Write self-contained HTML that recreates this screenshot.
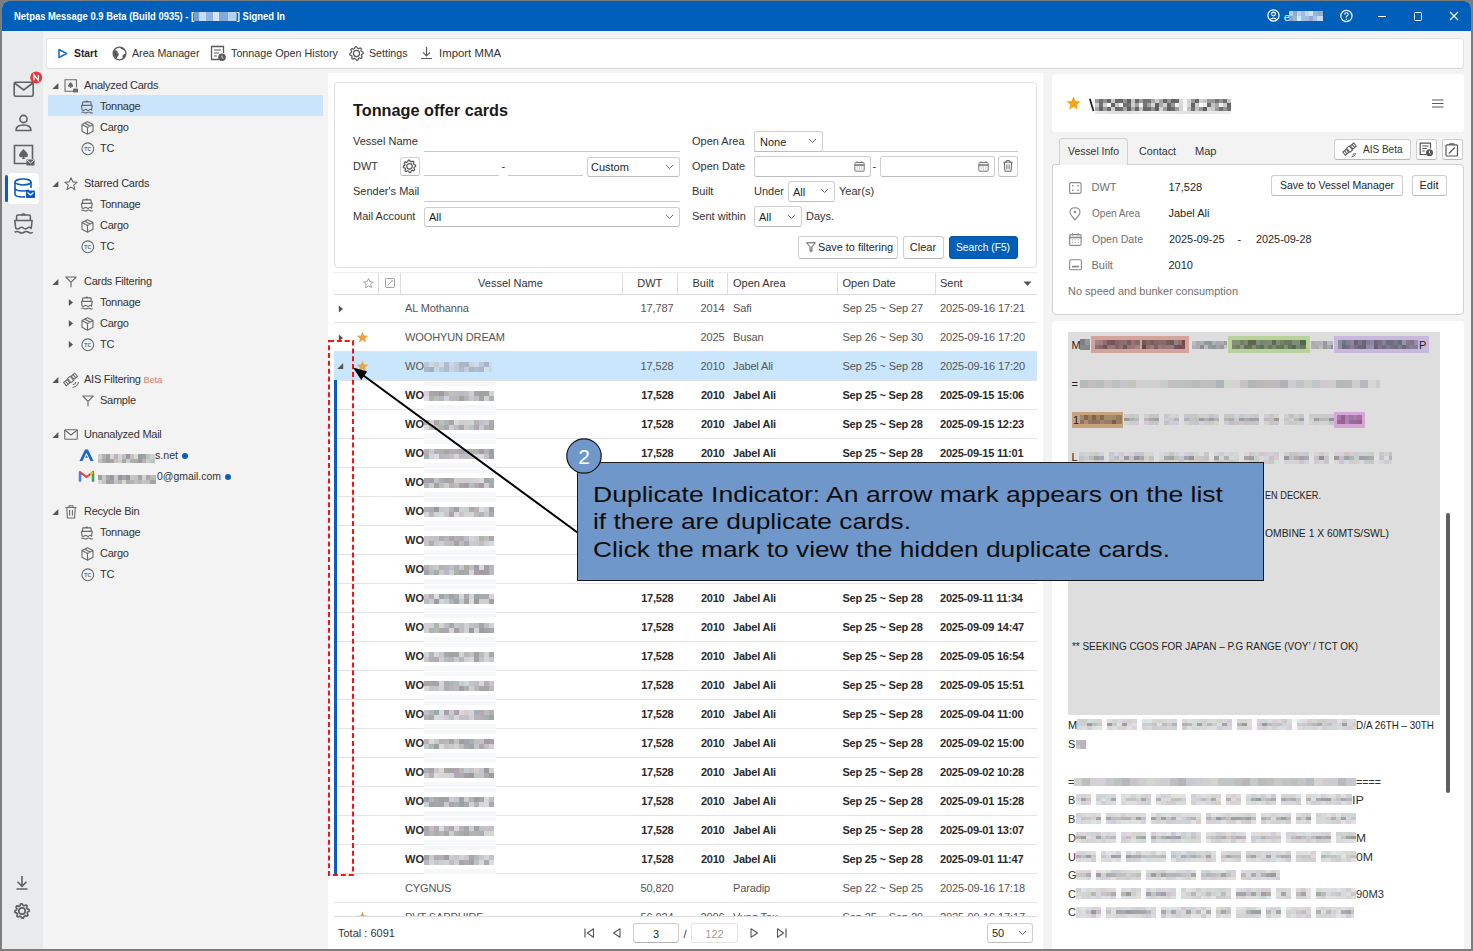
<!DOCTYPE html>
<html><head><meta charset="utf-8">
<style>
*{box-sizing:border-box;margin:0;padding:0}
html,body{width:1473px;height:951px;overflow:hidden;background:#7d7d7d;font-family:"Liberation Sans",sans-serif;font-size:11px;color:#1f1f1f;position:relative}
.a{position:absolute}
.t{position:absolute;white-space:nowrap;line-height:1}
svg{position:absolute;overflow:visible}
</style></head><body>
<div class="a" style="left:2px;top:1px;width:1469px;height:948px;background:#f3f3f3;border-radius:7px 7px 0 0"></div>
<div class="a" style="left:2px;top:1px;width:1469px;height:30px;background:#0060b9;border-radius:7px 7px 0 0"></div>
<div class="t" id="w1" style="left:14px;top:11.09px;font-size:11px;color:#fff;font-weight:bold;transform:scaleX(0.8562);transform-origin:left;">Netpas Message 0.9 Beta (Build 0935) - [<span style="display:inline-block;width:50px;height:9px;background:linear-gradient(90deg,#6e9fd6 0 6px,#c9dbf0 6px 14px,#8fb5e0 14px 22px,#d6e4f4 22px 30px,#7faadb 30px 40px,#b8d0ec 40px 50px);vertical-align:-1px"></span>] Signed In</div>
<svg style="left:1266px;top:9px;" width="15" height="15" viewBox="0 0 15 15"><circle cx="7.5" cy="6.5" r="5.6" fill="none" stroke="#fff" stroke-width="1.2"/><circle cx="7.5" cy="5" r="1.9" fill="none" stroke="#fff" stroke-width="1.1"/><path d="M4.2 10.6 Q7.5 7.6 10.8 10.6" fill="none" stroke="#fff" stroke-width="1.1"/></svg>
<div class="t" style="left:1284px;top:11.69px;font-size:11px;color:#fff;font-weight:normal;">e</div>
<div class="a" style="left:1289px;top:11.0px;width:34px;height:5.0px;background:linear-gradient(90deg,rgba(177,206,245,1.0) 0px 4px,rgba(141,173,201,1.0) 4px 8px,rgba(189,205,248,1.0) 8px 12px,rgba(161,187,227,1.0) 12px 16px,rgba(188,215,248,1.0) 16px 20px,rgba(210,229,255,1.0) 20px 24px,rgba(152,184,219,1.0) 24px 28px,rgba(150,175,207,1.0) 28px 32px)"></div>
<div class="a" style="left:1289px;top:16.0px;width:34px;height:5.0px;background:linear-gradient(90deg,rgba(143,165,208,1.0) 0px 4px,rgba(155,182,213,1.0) 4px 8px,rgba(204,237,255,1.0) 8px 12px,rgba(158,191,226,1.0) 12px 16px,rgba(163,184,226,1.0) 16px 20px,rgba(151,167,211,1.0) 20px 24px,rgba(167,195,228,1.0) 24px 28px,rgba(200,218,255,1.0) 28px 32px)"></div>
<svg style="left:1340px;top:10px;" width="13" height="13" viewBox="0 0 13 13"><circle cx="6.4" cy="6" r="5.6" fill="none" stroke="#fff" stroke-width="1.2"/><path d="M4.6 4.6 Q4.6 2.7 6.4 2.7 Q8.2 2.7 8.2 4.4 Q8.2 5.5 6.4 6.3 L6.4 7.5" fill="none" stroke="#fff" stroke-width="1.1"/><circle cx="6.4" cy="9.2" r="0.7" fill="#fff"/></svg>
<div class="a" style="left:1378px;top:15.5px;width:8px;height:1.2px;background:#fff"></div>
<div class="a" style="left:1413.5px;top:12px;width:8.5px;height:8.5px;border:1.2px solid #fff;border-radius:1.5px"></div>
<svg style="left:1449px;top:11px;" width="10" height="10" viewBox="0 0 10 10"><path d="M1 1 L9 9 M9 1 L1 9" stroke="#fff" stroke-width="1.2"/></svg>
<div class="a" style="left:2px;top:31px;width:41px;height:918px;background:#e9eaec"></div>
<svg style="left:13px;top:81px;" width="22" height="17" viewBox="0 0 22 17"><rect x="1.2" y="1.2" width="19" height="14" rx="1.5" fill="none" stroke="#616161" stroke-width="1.6"/><path d="M1.5 2 L10.7 9 L19.9 2" fill="none" stroke="#616161" stroke-width="1.6"/></svg>
<svg style="left:30px;top:71px;" width="13" height="13" viewBox="0 0 13 13"><circle cx="6.2" cy="6.6" r="6" fill="#e8363a"/><path d="M4 9.3 V3.9 L8.4 9.3 V3.9" fill="none" stroke="#fff" stroke-width="1.3"/></svg>
<svg style="left:14px;top:114px;" width="19" height="18" viewBox="0 0 19 18"><circle cx="9.5" cy="5" r="3.6" fill="none" stroke="#616161" stroke-width="1.6"/><path d="M2 16.5 Q2 11 9.5 11 Q17 11 17 16.5 Z" fill="none" stroke="#616161" stroke-width="1.6" stroke-linejoin="round"/></svg>
<svg style="left:13px;top:144px;" width="22" height="23" viewBox="0 0 22 23"><path d="M15 19.5 H1.5 V1.5 H19.5 V15" fill="none" stroke="#616161" stroke-width="1.6"/><path d="M10.5 5 Q6 9.5 6 11.3 Q6 13.6 8.5 13.3 Q9.3 13.1 9.8 12.4 L9 15 H12 L11.2 12.4 Q11.7 13.1 12.5 13.3 Q15 13.6 15 11.3 Q15 9.5 10.5 5 Z" fill="#616161"/><rect x="13.5" y="15.5" width="8" height="6" fill="#616161"/><path d="M13.8 16 L17.5 19 L21.2 16" fill="none" stroke="#e9eaec" stroke-width="0.9"/></svg>
<div class="a" style="left:8px;top:173px;width:31px;height:31px;background:#fff;border-radius:4px"></div>
<div class="a" style="left:5px;top:175px;width:2.5px;height:27px;background:#0a5cc2;border-radius:1.5px"></div>
<svg style="left:13px;top:178px;" width="22" height="22" viewBox="0 0 22 22"><ellipse cx="10" cy="4" rx="8" ry="3" fill="none" stroke="#0a5cc2" stroke-width="1.6"/><path d="M2 4 V16 Q2 19 10 19 Q11 19 12 18.9 M18 4 V10 M2 10 Q2 13 10 13 Q14 13 16 12.3" fill="none" stroke="#0a5cc2" stroke-width="1.6"/><rect x="13" y="12.5" width="9" height="7.5" rx="0.8" fill="#0a5cc2"/><path d="M14.5 14.5 L17.5 17 L20.5 14.5" fill="none" stroke="#fff" stroke-width="1.1"/></svg>
<svg style="left:15px;top:875px;" width="14" height="15" viewBox="0 0 14 15"><path d="M7 1 V11 M2.5 6.8 L7 11.3 L11.5 6.8 M1.5 14 H12.5" fill="none" stroke="#616161" stroke-width="1.6"/></svg>
<svg style="left:14px;top:903px;" width="16" height="16" viewBox="0 0 16 16"><polygon points="15.06,6.60 15.20,8.00 13.51,9.10 13.19,10.15 13.99,12.00 13.09,13.09 11.12,12.67 10.15,13.19 9.40,15.06 8.00,15.20 6.90,13.51 5.85,13.19 4.00,13.99 2.91,13.09 3.33,11.12 2.81,10.15 0.94,9.40 0.80,8.00 2.49,6.90 2.81,5.85 2.01,4.00 2.91,2.91 4.88,3.33 5.85,2.81 6.60,0.94 8.00,0.80 9.10,2.49 10.15,2.81 12.00,2.01 13.09,2.91 12.67,4.88 13.19,5.85" fill="none" stroke="#616161" stroke-width="1.7" stroke-linejoin="round"/><circle cx="8" cy="8" r="3.21" fill="none" stroke="#616161" stroke-width="1.7"/></svg>
<div class="a" style="left:46px;top:38px;width:1418px;height:31px;background:#fff;border:1px solid #e3e3e3;border-bottom-color:#d6d6d6;border-radius:4px"></div>
<svg style="left:57px;top:48px;" width="11" height="11" viewBox="0 0 11 11"><path d="M2 1.5 L9.5 5.5 L2 9.5 Z" fill="none" stroke="#1a6fd0" stroke-width="1.6" stroke-linejoin="round"/></svg>
<div class="t" id="w2" style="left:73.5px;top:47.69px;font-size:11px;color:#1f1f1f;font-weight:bold;transform:scaleX(0.9377);transform-origin:left;">Start</div>
<svg style="left:112px;top:46px;" width="15" height="15" viewBox="0 0 15 15"><circle cx="7.5" cy="7.5" r="6.4" fill="none" stroke="#5a5a5a" stroke-width="1.3"/><path d="M2.2 4.5 Q4.2 3.8 5.6 5.2 Q5 6.8 6.6 7.6 Q7.4 9.6 5.6 10.6 Q4.8 12.2 4.4 13 Q1.6 10.6 1.2 7.5 Q1.3 5.8 2.2 4.5 Z M8.2 1.2 Q8.6 3 10.4 3.6 Q12.4 3.6 12.8 3.2 Q11 1.4 8.2 1.2 Z M13.8 7.8 Q11.6 7.6 10.6 9.6 Q10.2 11.4 10.8 13.2 Q13.6 11.4 13.8 7.8 Z" fill="#5a5a5a"/></svg>
<div class="t" id="w3" style="left:132px;top:47.69px;font-size:11px;color:#333;font-weight:normal;transform:scaleX(0.9682);transform-origin:left;">Area Manager</div>
<svg style="left:210px;top:45px;" width="16" height="17" viewBox="0 0 16 17"><path d="M9 14.5 H1.5 V1.5 H13.5 V8" fill="none" stroke="#5a5a5a" stroke-width="1.3"/><path d="M4 5 H11 M4 8 H9 M4 11 H7" stroke="#5a5a5a" stroke-width="1.2"/><circle cx="12" cy="12.3" r="3.8" fill="#5a5a5a"/><path d="M12 10.5 V12.5 L13.3 13.5" fill="none" stroke="#fff" stroke-width="0.9"/></svg>
<div class="t" id="w4" style="left:231px;top:47.69px;font-size:11px;color:#333;font-weight:normal;transform:scaleX(0.9776);transform-origin:left;">Tonnage Open History</div>
<svg style="left:349px;top:46px;" width="15" height="15" viewBox="0 0 15 15"><polygon points="14.17,6.17 14.30,7.50 12.70,8.53 12.40,9.53 13.15,11.28 12.31,12.31 10.45,11.91 9.53,12.40 8.83,14.17 7.50,14.30 6.47,12.70 5.47,12.40 3.72,13.15 2.69,12.31 3.09,10.45 2.60,9.53 0.83,8.83 0.70,7.50 2.30,6.47 2.60,5.47 1.85,3.72 2.69,2.69 4.55,3.09 5.47,2.60 6.17,0.83 7.50,0.70 8.53,2.30 9.53,2.60 11.28,1.85 12.31,2.69 11.91,4.55 12.40,5.47" fill="none" stroke="#5a5a5a" stroke-width="1.2" stroke-linejoin="round"/><circle cx="7.5" cy="7.5" r="3.04" fill="none" stroke="#5a5a5a" stroke-width="1.2"/></svg>
<div class="t" id="w5" style="left:368.5px;top:47.69px;font-size:11px;color:#333;font-weight:normal;transform:scaleX(0.9686);transform-origin:left;">Settings</div>
<svg style="left:420px;top:46px;" width="13" height="14" viewBox="0 0 13 14"><path d="M6.5 1 V9.5 M3 6.3 L6.5 9.8 L10 6.3 M1 12.5 H12" fill="none" stroke="#5a5a5a" stroke-width="1.2"/></svg>
<div class="t" id="w6" style="left:438.5px;top:47.69px;font-size:11px;color:#333;font-weight:normal;transform:scaleX(1.0350);transform-origin:left;">Import MMA</div>
<div class="a" style="left:48px;top:95.3px;width:274.5px;height:21.2px;background:#cae5fb"></div>
<svg style="left:14px;top:212px;" width="22" height="22" viewBox="0 0 22 22"><g transform="scale(1.62)"><path d="M4.6 1.9 Q5.8 0.6 7 1.9" fill="none" stroke="#616161" stroke-width="1.1"/><path d="M1.6 5.1 V2.8 Q1.6 1.9 2.5 1.9 H9.2 Q10.1 1.9 10.1 2.8 V5.1" fill="none" stroke="#616161" stroke-width="0.95"/><path d="M0.5 5.3 H11.2 L10.6 10.1 Q9.5 8.9 8.2 9.9 Q7 10.9 5.85 9.9 Q4.7 8.9 3.5 9.9 Q2.3 10.9 1.1 10.1 Z" fill="none" stroke="#616161" stroke-width="0.95" stroke-linejoin="round"/><path d="M0.4 12.5 Q1.8 11.5 3.3 12.5 Q4.8 13.5 6.2 12.5 Q7.6 11.5 9 12.5 Q10.4 13.5 11.6 12.5" fill="none" stroke="#616161" stroke-width="0.95"/></g></svg>
<svg style="left:51.5px;top:82.5px;" width="7" height="7" viewBox="0 0 7 7"><path d="M6.4 0 L6.4 6 L0.4 6 Z" fill="#555"/></svg>
<svg style="left:64px;top:78.5px;" width="14" height="14" viewBox="0 0 14 14"><path d="M9 12.2 H1 V0.8 H12.5 V8.5" fill="none" stroke="#6a6a6a" stroke-width="1.1"/><path d="M6.6 3 Q4 5.6 4 6.7 Q4 8.1 5.4 7.9 Q5.9 7.8 6.2 7.4 L5.7 9 H7.5 L7 7.4 Q7.3 7.8 7.8 7.9 Q9.2 8.1 9.2 6.7 Q9.2 5.6 6.6 3 Z" fill="#6a6a6a"/><rect x="9" y="9.6" width="5" height="3.8" fill="#6a6a6a"/></svg>
<div class="t" style="left:84px;top:79.69px;font-size:11px;color:#333;font-weight:normal;letter-spacing:-0.25px">Analyzed Cards</div>
<svg style="left:81px;top:99.5px;" width="13" height="14" viewBox="0 0 13 14"><path d="M4.6 1.9 Q5.8 0.6 7 1.9" fill="none" stroke="#6a6a6a" stroke-width="1.4"/><path d="M1.6 5.1 V2.8 Q1.6 1.9 2.5 1.9 H9.2 Q10.1 1.9 10.1 2.8 V5.1" fill="none" stroke="#6a6a6a" stroke-width="1.15"/><path d="M0.5 5.3 H11.2 L10.6 10.1 Q9.5 8.9 8.2 9.9 Q7 10.9 5.85 9.9 Q4.7 8.9 3.5 9.9 Q2.3 10.9 1.1 10.1 Z" fill="none" stroke="#6a6a6a" stroke-width="1.15" stroke-linejoin="round"/><path d="M0.4 12.5 Q1.8 11.5 3.3 12.5 Q4.8 13.5 6.2 12.5 Q7.6 11.5 9 12.5 Q10.4 13.5 11.6 12.5" fill="none" stroke="#6a6a6a" stroke-width="1.15"/></svg>
<div class="t" style="left:100px;top:100.69px;font-size:11px;color:#333;font-weight:normal;letter-spacing:-0.25px">Tonnage</div>
<svg style="left:81px;top:120.5px;" width="13" height="14" viewBox="0 0 13 14"><path d="M6.5 0.8 L12 3.6 V10.2 L6.5 13.2 L1 10.2 V3.6 Z M1 3.6 L6.5 6.6 L12 3.6 M6.5 6.6 V13.2 M3.8 2.2 L9.3 5.1" fill="none" stroke="#6a6a6a" stroke-width="1.1" stroke-linejoin="round"/></svg>
<div class="t" style="left:100px;top:121.69px;font-size:11px;color:#333;font-weight:normal;letter-spacing:-0.25px">Cargo</div>
<svg style="left:81px;top:141.5px;" width="14" height="14" viewBox="0 0 14 14"><circle cx="6.8" cy="6.8" r="5.9" fill="none" stroke="#6a6a6a" stroke-width="1.1"/><text x="6.8" y="8.6" font-size="5.2" font-family="Liberation Sans" text-anchor="middle" fill="#6a6a6a" font-weight="bold">TC</text></svg>
<div class="t" style="left:100px;top:142.69px;font-size:11px;color:#333;font-weight:normal;letter-spacing:-0.25px">TC</div>
<svg style="left:51.5px;top:180.5px;" width="7" height="7" viewBox="0 0 7 7"><path d="M6.4 0 L6.4 6 L0.4 6 Z" fill="#555"/></svg>
<svg style="left:64px;top:176.5px;" width="14" height="14" viewBox="0 0 14 14"><path d="M7 0.8 L8.8 4.9 L13.2 5.2 L9.8 8.1 L10.9 12.5 L7 10.1 L3.1 12.5 L4.2 8.1 L0.8 5.2 L5.2 4.9 Z" fill="none" stroke="#6a6a6a" stroke-width="1.1" stroke-linejoin="round"/></svg>
<div class="t" style="left:84px;top:177.69px;font-size:11px;color:#333;font-weight:normal;letter-spacing:-0.25px">Starred Cards</div>
<svg style="left:81px;top:197.5px;" width="13" height="14" viewBox="0 0 13 14"><path d="M4.6 1.9 Q5.8 0.6 7 1.9" fill="none" stroke="#6a6a6a" stroke-width="1.4"/><path d="M1.6 5.1 V2.8 Q1.6 1.9 2.5 1.9 H9.2 Q10.1 1.9 10.1 2.8 V5.1" fill="none" stroke="#6a6a6a" stroke-width="1.15"/><path d="M0.5 5.3 H11.2 L10.6 10.1 Q9.5 8.9 8.2 9.9 Q7 10.9 5.85 9.9 Q4.7 8.9 3.5 9.9 Q2.3 10.9 1.1 10.1 Z" fill="none" stroke="#6a6a6a" stroke-width="1.15" stroke-linejoin="round"/><path d="M0.4 12.5 Q1.8 11.5 3.3 12.5 Q4.8 13.5 6.2 12.5 Q7.6 11.5 9 12.5 Q10.4 13.5 11.6 12.5" fill="none" stroke="#6a6a6a" stroke-width="1.15"/></svg>
<div class="t" style="left:100px;top:198.69px;font-size:11px;color:#333;font-weight:normal;letter-spacing:-0.25px">Tonnage</div>
<svg style="left:81px;top:218.5px;" width="13" height="14" viewBox="0 0 13 14"><path d="M6.5 0.8 L12 3.6 V10.2 L6.5 13.2 L1 10.2 V3.6 Z M1 3.6 L6.5 6.6 L12 3.6 M6.5 6.6 V13.2 M3.8 2.2 L9.3 5.1" fill="none" stroke="#6a6a6a" stroke-width="1.1" stroke-linejoin="round"/></svg>
<div class="t" style="left:100px;top:219.69px;font-size:11px;color:#333;font-weight:normal;letter-spacing:-0.25px">Cargo</div>
<svg style="left:81px;top:239.5px;" width="14" height="14" viewBox="0 0 14 14"><circle cx="6.8" cy="6.8" r="5.9" fill="none" stroke="#6a6a6a" stroke-width="1.1"/><text x="6.8" y="8.6" font-size="5.2" font-family="Liberation Sans" text-anchor="middle" fill="#6a6a6a" font-weight="bold">TC</text></svg>
<div class="t" style="left:100px;top:240.69px;font-size:11px;color:#333;font-weight:normal;letter-spacing:-0.25px">TC</div>
<svg style="left:51.5px;top:278.5px;" width="7" height="7" viewBox="0 0 7 7"><path d="M6.4 0 L6.4 6 L0.4 6 Z" fill="#555"/></svg>
<svg style="left:65px;top:275.5px;" width="12" height="12" viewBox="0 0 12 12"><path d="M0.8 1 H11.2 L6 6.3 Z M6 6.3 V11.3" fill="none" stroke="#6a6a6a" stroke-width="1.15" stroke-linejoin="round"/></svg>
<div class="t" style="left:84px;top:275.69px;font-size:11px;color:#333;font-weight:normal;letter-spacing:-0.25px">Cards Filtering</div>
<svg style="left:68px;top:298.5px;" width="6" height="8" viewBox="0 0 6 8"><path d="M0.8 0 L5 3.5 L0.8 7 Z" fill="#555"/></svg>
<svg style="left:81px;top:295.5px;" width="13" height="14" viewBox="0 0 13 14"><path d="M4.6 1.9 Q5.8 0.6 7 1.9" fill="none" stroke="#6a6a6a" stroke-width="1.4"/><path d="M1.6 5.1 V2.8 Q1.6 1.9 2.5 1.9 H9.2 Q10.1 1.9 10.1 2.8 V5.1" fill="none" stroke="#6a6a6a" stroke-width="1.15"/><path d="M0.5 5.3 H11.2 L10.6 10.1 Q9.5 8.9 8.2 9.9 Q7 10.9 5.85 9.9 Q4.7 8.9 3.5 9.9 Q2.3 10.9 1.1 10.1 Z" fill="none" stroke="#6a6a6a" stroke-width="1.15" stroke-linejoin="round"/><path d="M0.4 12.5 Q1.8 11.5 3.3 12.5 Q4.8 13.5 6.2 12.5 Q7.6 11.5 9 12.5 Q10.4 13.5 11.6 12.5" fill="none" stroke="#6a6a6a" stroke-width="1.15"/></svg>
<div class="t" style="left:100px;top:296.69px;font-size:11px;color:#333;font-weight:normal;letter-spacing:-0.25px">Tonnage</div>
<svg style="left:68px;top:319.5px;" width="6" height="8" viewBox="0 0 6 8"><path d="M0.8 0 L5 3.5 L0.8 7 Z" fill="#555"/></svg>
<svg style="left:81px;top:316.5px;" width="13" height="14" viewBox="0 0 13 14"><path d="M6.5 0.8 L12 3.6 V10.2 L6.5 13.2 L1 10.2 V3.6 Z M1 3.6 L6.5 6.6 L12 3.6 M6.5 6.6 V13.2 M3.8 2.2 L9.3 5.1" fill="none" stroke="#6a6a6a" stroke-width="1.1" stroke-linejoin="round"/></svg>
<div class="t" style="left:100px;top:317.69px;font-size:11px;color:#333;font-weight:normal;letter-spacing:-0.25px">Cargo</div>
<svg style="left:68px;top:340.5px;" width="6" height="8" viewBox="0 0 6 8"><path d="M0.8 0 L5 3.5 L0.8 7 Z" fill="#555"/></svg>
<svg style="left:81px;top:337.5px;" width="14" height="14" viewBox="0 0 14 14"><circle cx="6.8" cy="6.8" r="5.9" fill="none" stroke="#6a6a6a" stroke-width="1.1"/><text x="6.8" y="8.6" font-size="5.2" font-family="Liberation Sans" text-anchor="middle" fill="#6a6a6a" font-weight="bold">TC</text></svg>
<div class="t" style="left:100px;top:338.69px;font-size:11px;color:#333;font-weight:normal;letter-spacing:-0.25px">TC</div>
<svg style="left:51.5px;top:376.5px;" width="7" height="7" viewBox="0 0 7 7"><path d="M6.4 0 L6.4 6 L0.4 6 Z" fill="#555"/></svg>
<svg style="left:63px;top:371.5px;" width="17" height="17" viewBox="0 0 17 17"><g transform="rotate(-40 7.5 7.5)" fill="none" stroke="#6a6a6a" stroke-width="1.05"><rect x="0.3" y="5.4" width="4.6" height="4.2"/><rect x="5.8" y="4.8" width="3.6" height="5.4"/><rect x="10.3" y="5.4" width="4.6" height="4.2"/><path d="M2.6 5.4 V9.6 M12.6 5.4 V9.6"/></g><path d="M9.5 15.5 Q14.5 14.8 15.6 10 M9.8 12.8 Q12.4 12.3 13 9.8" fill="none" stroke="#6a6a6a" stroke-width="1.05"/></svg>
<div class="t" style="left:84px;top:373.69px;font-size:11px;color:#333;font-weight:normal;letter-spacing:-0.25px">AIS Filtering <span style="color:#d9826e;font-size:9.5px">Beta</span></div>
<svg style="left:82px;top:394.5px;" width="12" height="12" viewBox="0 0 12 12"><path d="M0.8 1 H11.2 L6 6.3 Z M6 6.3 V11.3" fill="none" stroke="#6a6a6a" stroke-width="1.15" stroke-linejoin="round"/></svg>
<div class="t" style="left:100px;top:394.69px;font-size:11px;color:#333;font-weight:normal;letter-spacing:-0.25px">Sample</div>
<svg style="left:51.5px;top:431.5px;" width="7" height="7" viewBox="0 0 7 7"><path d="M6.4 0 L6.4 6 L0.4 6 Z" fill="#555"/></svg>
<svg style="left:64px;top:428.5px;" width="14" height="12" viewBox="0 0 14 12"><rect x="0.7" y="0.7" width="12.6" height="9.6" rx="0.8" fill="none" stroke="#6a6a6a" stroke-width="1.1"/><path d="M1 1.2 L7 6 L13 1.2" fill="none" stroke="#6a6a6a" stroke-width="1.1"/></svg>
<div class="t" style="left:84px;top:428.69px;font-size:11px;color:#333;font-weight:normal;letter-spacing:-0.25px">Unanalyzed Mail</div>
<svg style="left:79px;top:449px;" width="15" height="13" viewBox="0 0 15 13"><path d="M6 0.5 H9 L14.5 12 H11.5 L7.5 3.8 L3.5 12 H0.5 Z" fill="#1e63c8"/><path d="M6.2 8.8 L7.5 6.2 L8.8 8.8 Z" fill="#1e63c8"/></svg>
<div class="a" style="left:98px;top:454.0px;width:57px;height:4.5px;background:linear-gradient(90deg,rgba(207,206,205,1.0) 0px 4px,rgba(178,179,170,1.0) 4px 8px,rgba(163,158,162,1.0) 8px 12px,rgba(212,218,214,1.0) 12px 16px,rgba(189,181,181,1.0) 16px 20px,rgba(215,211,221,1.0) 20px 24px,rgba(189,194,193,1.0) 24px 28px,rgba(159,150,161,1.0) 28px 32px,rgba(189,195,189,1.0) 32px 36px,rgba(216,219,214,1.0) 36px 40px,rgba(153,156,159,1.0) 40px 44px,rgba(152,163,163,1.0) 44px 48px,rgba(193,192,193,1.0) 48px 52px,rgba(205,212,207,1.0) 52px 56px)"></div>
<div class="a" style="left:98px;top:458.5px;width:57px;height:4.5px;background:linear-gradient(90deg,rgba(188,195,193,1.0) 0px 4px,rgba(174,166,172,1.0) 4px 8px,rgba(154,163,155,1.0) 8px 12px,rgba(171,163,166,1.0) 12px 16px,rgba(201,195,196,1.0) 16px 20px,rgba(207,209,205,1.0) 20px 24px,rgba(167,169,165,1.0) 24px 28px,rgba(202,207,203,1.0) 28px 32px,rgba(175,174,175,1.0) 32px 36px,rgba(166,173,166,1.0) 36px 40px,rgba(152,154,147,1.0) 40px 44px,rgba(181,177,179,1.0) 44px 48px,rgba(205,202,206,1.0) 48px 52px,rgba(186,195,192,1.0) 52px 56px)"></div>
<div class="t" id="w7" style="left:155px;top:449.69px;font-size:11px;color:#333;font-weight:normal;transform:scaleX(0.9640);transform-origin:left;">s.net</div>
<div class="a" style="left:181.5px;top:452.5px;width:6px;height:6px;background:#0a5cc2;border-radius:50%"></div>
<svg style="left:79px;top:470px;" width="15" height="12" viewBox="0 0 15 12"><path d="M1 11.5 V2 L7.5 7 L14 2 V11.5" fill="none" stroke="#ea4335" stroke-width="2.2" stroke-linejoin="round"/><path d="M1 11.5 V3" stroke="#4285f4" stroke-width="2.4"/><path d="M14 11.5 V3" stroke="#34a853" stroke-width="2.4"/><path d="M11.2 4.5 L14 2.2" stroke="#fbbc04" stroke-width="2.2"/></svg>
<div class="a" style="left:98px;top:475.0px;width:58px;height:4.5px;background:linear-gradient(90deg,rgba(157,162,160,1.0) 0px 4px,rgba(200,200,200,1.0) 4px 8px,rgba(164,167,163,1.0) 8px 12px,rgba(154,152,154,1.0) 12px 16px,rgba(202,201,205,1.0) 16px 20px,rgba(151,150,159,1.0) 20px 24px,rgba(171,164,168,1.0) 24px 28px,rgba(148,150,156,1.0) 28px 32px,rgba(194,202,196,1.0) 32px 36px,rgba(197,193,195,1.0) 36px 40px,rgba(160,166,166,1.0) 40px 44px,rgba(212,209,206,1.0) 44px 48px,rgba(163,173,167,1.0) 48px 52px,rgba(184,188,179,1.0) 52px 56px)"></div>
<div class="a" style="left:98px;top:479.5px;width:58px;height:4.5px;background:linear-gradient(90deg,rgba(210,213,218,1.0) 0px 4px,rgba(192,201,198,1.0) 4px 8px,rgba(159,155,151,1.0) 8px 12px,rgba(166,159,163,1.0) 12px 16px,rgba(192,195,202,1.0) 16px 20px,rgba(180,180,184,1.0) 20px 24px,rgba(213,218,211,1.0) 24px 28px,rgba(180,171,174,1.0) 28px 32px,rgba(176,181,180,1.0) 32px 36px,rgba(200,189,189,1.0) 36px 40px,rgba(186,183,182,1.0) 40px 44px,rgba(195,200,199,1.0) 44px 48px,rgba(193,189,191,1.0) 48px 52px,rgba(160,164,160,1.0) 52px 56px)"></div>
<div class="t" id="w8" style="left:157px;top:470.69px;font-size:11px;color:#333;font-weight:normal;transform:scaleX(0.9492);transform-origin:left;">0@gmail.com</div>
<div class="a" style="left:224.5px;top:473.5px;width:6px;height:6px;background:#0a5cc2;border-radius:50%"></div>
<svg style="left:51.5px;top:508.5px;" width="7" height="7" viewBox="0 0 7 7"><path d="M6.4 0 L6.4 6 L0.4 6 Z" fill="#555"/></svg>
<svg style="left:65px;top:504.5px;" width="12" height="14" viewBox="0 0 12 14"><path d="M0.5 2.5 H11.5 M4 2.5 V0.8 H8 V2.5 M1.8 2.5 L2.4 13 H9.6 L10.2 2.5 M4.6 5 V10.5 M7.4 5 V10.5" fill="none" stroke="#6a6a6a" stroke-width="1.1"/></svg>
<div class="t" style="left:84px;top:505.69px;font-size:11px;color:#333;font-weight:normal;letter-spacing:-0.25px">Recycle Bin</div>
<svg style="left:81px;top:525.5px;" width="13" height="14" viewBox="0 0 13 14"><path d="M4.6 1.9 Q5.8 0.6 7 1.9" fill="none" stroke="#6a6a6a" stroke-width="1.4"/><path d="M1.6 5.1 V2.8 Q1.6 1.9 2.5 1.9 H9.2 Q10.1 1.9 10.1 2.8 V5.1" fill="none" stroke="#6a6a6a" stroke-width="1.15"/><path d="M0.5 5.3 H11.2 L10.6 10.1 Q9.5 8.9 8.2 9.9 Q7 10.9 5.85 9.9 Q4.7 8.9 3.5 9.9 Q2.3 10.9 1.1 10.1 Z" fill="none" stroke="#6a6a6a" stroke-width="1.15" stroke-linejoin="round"/><path d="M0.4 12.5 Q1.8 11.5 3.3 12.5 Q4.8 13.5 6.2 12.5 Q7.6 11.5 9 12.5 Q10.4 13.5 11.6 12.5" fill="none" stroke="#6a6a6a" stroke-width="1.15"/></svg>
<div class="t" style="left:100px;top:526.69px;font-size:11px;color:#333;font-weight:normal;letter-spacing:-0.25px">Tonnage</div>
<svg style="left:81px;top:546.5px;" width="13" height="14" viewBox="0 0 13 14"><path d="M6.5 0.8 L12 3.6 V10.2 L6.5 13.2 L1 10.2 V3.6 Z M1 3.6 L6.5 6.6 L12 3.6 M6.5 6.6 V13.2 M3.8 2.2 L9.3 5.1" fill="none" stroke="#6a6a6a" stroke-width="1.1" stroke-linejoin="round"/></svg>
<div class="t" style="left:100px;top:547.69px;font-size:11px;color:#333;font-weight:normal;letter-spacing:-0.25px">Cargo</div>
<svg style="left:81px;top:567.5px;" width="14" height="14" viewBox="0 0 14 14"><circle cx="6.8" cy="6.8" r="5.9" fill="none" stroke="#6a6a6a" stroke-width="1.1"/><text x="6.8" y="8.6" font-size="5.2" font-family="Liberation Sans" text-anchor="middle" fill="#6a6a6a" font-weight="bold">TC</text></svg>
<div class="t" style="left:100px;top:568.69px;font-size:11px;color:#333;font-weight:normal;letter-spacing:-0.25px">TC</div>
<div class="a" style="left:328px;top:73px;width:715px;height:876px;background:#fff"></div>
<div class="a" style="left:334px;top:81.5px;width:703px;height:186.5px;background:#fff;border:1px solid #e0e0e0;border-radius:4px"></div>
<div class="t" id="w9" style="left:352.5px;top:102.11px;font-size:17px;color:#1a1a1a;font-weight:bold;transform:scaleX(0.9559);transform-origin:left;">Tonnage offer cards</div>
<div class="t" style="left:353px;top:135.69px;font-size:11px;color:#333;font-weight:normal;">Vessel Name</div>
<div class="a" style="left:424px;top:151px;width:256px;height:1px;background:#c8c8c8"></div>
<div class="t" style="left:353px;top:160.69px;font-size:11px;color:#333;font-weight:normal;">DWT</div>
<div class="a" style="left:400px;top:157px;width:19.5px;height:18.5px;background:#fff;border:1px solid #cfcfcf;border-bottom-color:#bbb;border-radius:3px"></div>
<svg style="left:402px;top:159px;" width="15" height="15" viewBox="0 0 15 15"><polygon points="13.58,6.09 13.70,7.30 12.24,8.24 11.97,9.15 12.66,10.74 11.88,11.68 10.19,11.32 9.35,11.77 8.71,13.38 7.50,13.50 6.56,12.04 5.65,11.77 4.06,12.46 3.12,11.68 3.48,9.99 3.03,9.15 1.42,8.51 1.30,7.30 2.76,6.36 3.03,5.45 2.34,3.86 3.12,2.92 4.81,3.28 5.65,2.83 6.29,1.22 7.50,1.10 8.44,2.56 9.35,2.83 10.94,2.14 11.88,2.92 11.52,4.61 11.97,5.45" fill="none" stroke="#555" stroke-width="1.2" stroke-linejoin="round"/><circle cx="7.5" cy="7.3" r="2.77" fill="none" stroke="#555" stroke-width="1.2"/></svg>
<div class="a" style="left:424px;top:175px;width:75px;height:1px;background:#c8c8c8"></div>
<div class="t" style="left:501.5px;top:160.69px;font-size:11px;color:#333;font-weight:normal;">-</div>
<div class="a" style="left:508px;top:175px;width:75px;height:1px;background:#c8c8c8"></div>
<div class="a" style="left:586.5px;top:157px;width:93.5px;height:19.5px;background:#fff;border:1px solid #cfcfcf;border-bottom-color:#bdbdbd;border-radius:3px"></div>
<div class="t" style="left:591px;top:162.24px;font-size:11px;color:#1f1f1f;font-weight:normal;">Custom</div>
<svg style="left:665px;top:163.75px;" width="9" height="6" viewBox="0 0 9 6"><path d="M1 1 L4.5 4.5 L8 1" fill="none" stroke="#6a6a6a" stroke-width="1"/></svg>
<div class="t" style="left:353px;top:185.69px;font-size:11px;color:#333;font-weight:normal;">Sender's Mail</div>
<div class="a" style="left:424px;top:201px;width:256px;height:1px;background:#c8c8c8"></div>
<div class="t" style="left:353px;top:210.69px;font-size:11px;color:#333;font-weight:normal;">Mail Account</div>
<div class="a" style="left:424px;top:207px;width:256px;height:20px;background:#fff;border:1px solid #cfcfcf;border-bottom-color:#bdbdbd;border-radius:3px"></div>
<div class="t" style="left:429px;top:212.49px;font-size:11px;color:#1f1f1f;font-weight:normal;">All</div>
<svg style="left:665px;top:214.0px;" width="9" height="6" viewBox="0 0 9 6"><path d="M1 1 L4.5 4.5 L8 1" fill="none" stroke="#6a6a6a" stroke-width="1"/></svg>
<div class="t" style="left:692px;top:135.69px;font-size:11px;color:#333;font-weight:normal;">Open Area</div>
<div class="a" style="left:754px;top:151px;width:264px;height:1px;background:#c8c8c8"></div>
<div class="a" style="left:754px;top:131px;width:68.5px;height:20.5px;background:#fff;border:1px solid #cfcfcf;border-bottom-color:#bdbdbd;border-radius:3px"></div>
<div class="t" style="left:760px;top:136.74px;font-size:11px;color:#1f1f1f;font-weight:normal;">None</div>
<svg style="left:807.5px;top:138.25px;" width="9" height="6" viewBox="0 0 9 6"><path d="M1 1 L4.5 4.5 L8 1" fill="none" stroke="#6a6a6a" stroke-width="1"/></svg>
<div class="t" style="left:692px;top:160.69px;font-size:11px;color:#333;font-weight:normal;">Open Date</div>
<div class="a" style="left:754px;top:156px;width:117px;height:20.5px;background:#fff;border:1px solid #cfcfcf;border-bottom-color:#bdbdbd;border-radius:3px"></div>
<svg style="left:854px;top:160.5px;" width="11" height="11" viewBox="0 0 11 11"><rect x="0.8" y="1.5" width="9.4" height="8.7" rx="1" fill="none" stroke="#777" stroke-width="1"/><path d="M0.8 4 H10.2" stroke="#777" stroke-width="1.6"/><path d="M3 0.3 V2 M8 0.3 V2" stroke="#777" stroke-width="1"/><path d="M2.7 6 H3.7 M5 6 H6 M7.3 6 H8.3 M2.7 8 H3.7 M5 8 H6 M7.3 8 H8.3" stroke="#999" stroke-width="1"/></svg>
<div class="t" style="left:872.5px;top:160.69px;font-size:11px;color:#333;font-weight:normal;">-</div>
<div class="a" style="left:879.5px;top:156px;width:115.5px;height:20.5px;background:#fff;border:1px solid #cfcfcf;border-bottom-color:#bdbdbd;border-radius:3px"></div>
<svg style="left:978px;top:160.5px;" width="11" height="11" viewBox="0 0 11 11"><rect x="0.8" y="1.5" width="9.4" height="8.7" rx="1" fill="none" stroke="#777" stroke-width="1"/><path d="M0.8 4 H10.2" stroke="#777" stroke-width="1.6"/><path d="M3 0.3 V2 M8 0.3 V2" stroke="#777" stroke-width="1"/><path d="M2.7 6 H3.7 M5 6 H6 M7.3 6 H8.3 M2.7 8 H3.7 M5 8 H6 M7.3 8 H8.3" stroke="#999" stroke-width="1"/></svg>
<div class="a" style="left:998px;top:156px;width:20px;height:20.5px;background:#fff;border:1px solid #cfcfcf;border-bottom-color:#bdbdbd;border-radius:3px"></div>
<svg style="left:1003px;top:160px;" width="10" height="12" viewBox="0 0 10 12"><path d="M0.3 2.2 H9.7 M3.2 2.2 V0.6 H6.8 V2.2 M1.4 2.2 L1.9 11.2 H8.1 L8.6 2.2 M3.9 4.5 V9.2 M6.1 4.5 V9.2" fill="none" stroke="#666" stroke-width="1"/></svg>
<div class="t" style="left:692px;top:185.69px;font-size:11px;color:#333;font-weight:normal;">Built</div>
<div class="t" style="left:754px;top:185.69px;font-size:11px;color:#333;font-weight:normal;">Under</div>
<div class="a" style="left:788px;top:181px;width:47px;height:20.5px;background:#fff;border:1px solid #cfcfcf;border-bottom-color:#bdbdbd;border-radius:3px"></div>
<div class="t" style="left:793px;top:186.74px;font-size:11px;color:#1f1f1f;font-weight:normal;">All</div>
<svg style="left:820px;top:188.25px;" width="9" height="6" viewBox="0 0 9 6"><path d="M1 1 L4.5 4.5 L8 1" fill="none" stroke="#6a6a6a" stroke-width="1"/></svg>
<div class="t" style="left:839px;top:185.69px;font-size:11px;color:#333;font-weight:normal;">Year(s)</div>
<div class="t" style="left:692px;top:210.69px;font-size:11px;color:#333;font-weight:normal;">Sent within</div>
<div class="a" style="left:754px;top:206px;width:47.5px;height:21px;background:#fff;border:1px solid #cfcfcf;border-bottom-color:#bdbdbd;border-radius:3px"></div>
<div class="t" style="left:759px;top:211.99px;font-size:11px;color:#1f1f1f;font-weight:normal;">All</div>
<svg style="left:786.5px;top:213.5px;" width="9" height="6" viewBox="0 0 9 6"><path d="M1 1 L4.5 4.5 L8 1" fill="none" stroke="#6a6a6a" stroke-width="1"/></svg>
<div class="t" style="left:806px;top:210.69px;font-size:11px;color:#333;font-weight:normal;">Days.</div>
<div class="a" style="left:798px;top:236px;width:100px;height:22.5px;background:#fff;border:1px solid #cfcfcf;border-bottom-color:#b8b8b8;border-radius:3px"></div>
<svg style="left:806px;top:242px;" width="10" height="10" viewBox="0 0 10 10"><path d="M0.6 0.8 H9.4 L5.9 4.8 V9.2 H4.1 V4.8 Z" fill="none" stroke="#555" stroke-width="1" stroke-linejoin="round"/></svg>
<div class="t" id="w10" style="left:818px;top:241.69px;font-size:11px;color:#1f1f1f;font-weight:normal;transform:scaleX(0.9891);transform-origin:left;">Save to filtering</div>
<div class="a" style="left:902.5px;top:236px;width:41.0px;height:22.5px;background:#fff;border:1px solid #cfcfcf;border-bottom-color:#b8b8b8;border-radius:3px"></div>
<div class="t" style="left:923px;top:241.69px;font-size:11px;color:#1f1f1f;font-weight:normal;transform:translateX(-50%) ;">Clear</div>
<div class="a" style="left:948.5px;top:236px;width:69.5px;height:22.5px;background:#005fb8;border:1px solid #0a56a6;border-radius:3px"></div>
<div class="t" id="w11" style="left:983.2px;top:241.69px;font-size:11px;color:#fff;font-weight:normal;transform:translateX(-50%) scaleX(0.9298);transform-origin:center;">Search (F5)</div>
<div class="a" style="left:334px;top:272px;width:703px;height:1px;background:#ececec"></div>
<div class="a" style="left:334px;top:293.5px;width:703px;height:1.5px;background:#d9d9d9"></div>
<div class="a" style="left:378px;top:273px;width:1px;height:21px;background:#dcdcdc"></div>
<div class="a" style="left:399.5px;top:273px;width:1px;height:21px;background:#dcdcdc"></div>
<div class="a" style="left:622px;top:273px;width:1px;height:21px;background:#dcdcdc"></div>
<div class="a" style="left:677px;top:273px;width:1px;height:21px;background:#dcdcdc"></div>
<div class="a" style="left:727px;top:273px;width:1px;height:21px;background:#dcdcdc"></div>
<div class="a" style="left:837px;top:273px;width:1px;height:21px;background:#dcdcdc"></div>
<div class="a" style="left:934.5px;top:273px;width:1px;height:21px;background:#dcdcdc"></div>
<svg style="left:362.5px;top:278px;" width="11" height="11" viewBox="0 0 11 11"><path d="M5.5 0.6 L6.9 3.8 L10.3 4.1 L7.7 6.3 L8.5 9.7 L5.5 7.9 L2.5 9.7 L3.3 6.3 L0.7 4.1 L4.1 3.8 Z" fill="none" stroke="#9a9a9a" stroke-width="0.9" stroke-linejoin="round"/></svg>
<svg style="left:384.5px;top:278px;" width="10" height="10" viewBox="0 0 10 10"><rect x="0.5" y="0.5" width="9" height="9" rx="0.8" fill="none" stroke="#9a9a9a" stroke-width="0.9"/><path d="M2.5 7.5 L7.5 2.5 M6.3 1.8 L8.2 3.7" fill="none" stroke="#9a9a9a" stroke-width="0.9"/></svg>
<div class="t" style="left:510.5px;top:278.19px;font-size:11px;color:#333;font-weight:normal;transform:translateX(-50%) ;">Vessel Name</div>
<div class="t" style="left:649.8px;top:278.19px;font-size:11px;color:#333;font-weight:normal;transform:translateX(-50%) ;">DWT</div>
<div class="t" style="left:692.5px;top:278.19px;font-size:11px;color:#333;font-weight:normal;">Built</div>
<div class="t" style="left:733px;top:278.19px;font-size:11px;color:#333;font-weight:normal;">Open Area</div>
<div class="t" style="left:842.5px;top:278.19px;font-size:11px;color:#333;font-weight:normal;">Open Date</div>
<div class="t" style="left:940px;top:278.19px;font-size:11px;color:#333;font-weight:normal;">Sent</div>
<svg style="left:1023px;top:280.5px;" width="9" height="6" viewBox="0 0 9 6"><path d="M0.5 0.5 H8.5 L4.5 5 Z" fill="#555"/></svg>
<div class="a" style="left:334px;top:294px;width:703px;height:622px;overflow:hidden">
<div class="a" style="left:0px;top:28px;width:703px;height:1px;background:#e3e3e3"></div>
<svg style="left:4px;top:11px;" width="6" height="8" viewBox="0 0 6 8"><path d="M0.8 0.5 L5 4 L0.8 7.5 Z" fill="#555"/></svg>
<div class="t" style="left:71px;top:8.89px;font-size:11px;color:#555;font-weight:normal;letter-spacing:-0.12px;">AL Mothanna</div>
<div class="t" style="right:363.5px;top:8.89px;font-size:11px;color:#555;font-weight:normal;letter-spacing:-0.12px;">17,787</div>
<div class="t" style="right:312.5px;top:8.89px;font-size:11px;color:#555;font-weight:normal;letter-spacing:-0.12px;">2014</div>
<div class="t" style="left:399px;top:8.89px;font-size:11px;color:#555;font-weight:normal;letter-spacing:-0.12px;">Safi</div>
<div class="t" style="left:508.5px;top:8.89px;font-size:11px;color:#555;font-weight:normal;letter-spacing:-0.12px;">Sep 25 ~ Sep 27</div>
<div class="t" style="left:606px;top:8.89px;font-size:11px;color:#555;font-weight:normal;letter-spacing:-0.12px;">2025-09-16 17:21</div>
<div class="a" style="left:0px;top:57px;width:703px;height:1px;background:#e3e3e3"></div>
<svg style="left:4px;top:40px;" width="6" height="8" viewBox="0 0 6 8"><path d="M0.8 0.5 L5 4 L0.8 7.5 Z" fill="#555"/></svg>
<svg style="left:21.5px;top:37px;" width="13" height="13" viewBox="0 0 13 13"><path d="M6.5 0.5 L8.2 4.4 L12.3 4.7 L9.1 7.4 L10.1 11.5 L6.5 9.3 L2.9 11.5 L3.9 7.4 L0.7 4.7 L4.8 4.4 Z" fill="#e8a54c"/></svg>
<div class="t" style="left:71px;top:37.89px;font-size:11px;color:#555;font-weight:normal;letter-spacing:-0.12px;">WOOHYUN DREAM</div>
<div class="t" style="right:312.5px;top:37.89px;font-size:11px;color:#555;font-weight:normal;letter-spacing:-0.12px;">2025</div>
<div class="t" style="left:399px;top:37.89px;font-size:11px;color:#555;font-weight:normal;letter-spacing:-0.12px;">Busan</div>
<div class="t" style="left:508.5px;top:37.89px;font-size:11px;color:#555;font-weight:normal;letter-spacing:-0.12px;">Sep 26 ~ Sep 30</div>
<div class="t" style="left:606px;top:37.89px;font-size:11px;color:#555;font-weight:normal;letter-spacing:-0.12px;">2025-09-16 17:20</div>
<div class="a" style="left:0px;top:58px;width:703px;height:29px;background:#cae6fc"></div>
<div class="a" style="left:0px;top:86px;width:703px;height:1px;background:#e3e3e3"></div>
<svg style="left:3px;top:68.5px;" width="7" height="7" viewBox="0 0 7 7"><path d="M6.2 0 L6.2 6 L0.2 6 Z" fill="#555"/></svg>
<svg style="left:21.5px;top:66px;" width="13" height="13" viewBox="0 0 13 13"><path d="M6.5 0.5 L8.2 4.4 L12.3 4.7 L9.1 7.4 L10.1 11.5 L6.5 9.3 L2.9 11.5 L3.9 7.4 L0.7 4.7 L4.8 4.4 Z" fill="#e8a54c"/></svg>
<div class="t" id="w12" style="left:71px;top:66.89px;font-size:11px;color:#555;font-weight:normal;transform:scaleX(1.0025);transform-origin:left;">WO</div>
<div class="a" style="left:90px;top:68.0px;width:68px;height:5.0px;background:linear-gradient(90deg,rgba(184,200,216,1.0) 0px 5px,rgba(199,218,235,1.0) 5px 10px,rgba(194,204,209,1.0) 10px 15px,rgba(203,220,240,1.0) 15px 20px,rgba(179,186,204,1.0) 20px 25px,rgba(205,213,238,1.0) 25px 30px,rgba(192,203,222,1.0) 30px 35px,rgba(176,179,193,1.0) 35px 40px,rgba(168,182,203,1.0) 40px 45px,rgba(201,211,217,1.0) 45px 50px,rgba(208,218,235,1.0) 50px 55px,rgba(184,202,216,1.0) 55px 60px,rgba(168,180,206,1.0) 60px 65px,rgba(202,221,238,1.0) 65px 68px)"></div>
<div class="a" style="left:90px;top:73.0px;width:68px;height:5.0px;background:linear-gradient(90deg,rgba(174,183,197,1.0) 0px 5px,rgba(165,176,191,1.0) 5px 10px,rgba(195,216,227,1.0) 10px 15px,rgba(184,200,212,1.0) 15px 20px,rgba(168,191,199,1.0) 20px 25px,rgba(199,210,223,1.0) 25px 30px,rgba(194,200,220,1.0) 30px 35px,rgba(177,189,195,1.0) 35px 40px,rgba(200,202,223,1.0) 40px 45px,rgba(172,184,188,1.0) 45px 50px,rgba(173,190,206,1.0) 50px 55px,rgba(175,179,198,1.0) 55px 60px,rgba(211,223,237,1.0) 60px 65px,rgba(202,214,217,1.0) 65px 68px)"></div>
<div class="t" style="right:363.5px;top:66.89px;font-size:11px;color:#555;font-weight:normal;letter-spacing:-0.12px;">17,528</div>
<div class="t" style="right:312.5px;top:66.89px;font-size:11px;color:#555;font-weight:normal;letter-spacing:-0.12px;">2010</div>
<div class="t" style="left:399px;top:66.89px;font-size:11px;color:#555;font-weight:normal;letter-spacing:-0.12px;">Jabel Ali</div>
<div class="t" style="left:508.5px;top:66.89px;font-size:11px;color:#555;font-weight:normal;letter-spacing:-0.12px;">Sep 25 ~ Sep 28</div>
<div class="t" style="left:606px;top:66.89px;font-size:11px;color:#555;font-weight:normal;letter-spacing:-0.12px;">2025-09-16 17:20</div>
<div class="a" style="left:3px;top:115px;width:703px;height:1px;background:#e3e3e3"></div>
<div class="t" id="w13" style="left:71px;top:95.89px;font-size:11px;color:#2b2b2b;font-weight:bold;transform:scaleX(1.0025);transform-origin:left;">WO</div>
<div class="a" style="left:90px;top:87.5px;width:72px;height:28px;background:#f6f7f8"></div>
<div class="a" style="left:90px;top:92px;width:72px;height:19px;background:#fff"></div>
<div class="a" style="left:90px;top:97.0px;width:70px;height:5.0px;background:linear-gradient(90deg,rgba(216,208,213,1.0) 0px 5px,rgba(168,164,178,1.0) 5px 10px,rgba(166,165,168,1.0) 10px 15px,rgba(165,154,162,1.0) 15px 20px,rgba(181,180,183,1.0) 20px 25px,rgba(187,195,190,1.0) 25px 30px,rgba(188,188,194,1.0) 30px 35px,rgba(190,185,195,1.0) 35px 40px,rgba(189,193,190,1.0) 40px 45px,rgba(212,207,213,1.0) 45px 50px,rgba(165,166,166,1.0) 50px 55px,rgba(166,159,164,1.0) 55px 60px,rgba(159,166,162,1.0) 60px 65px,rgba(203,214,206,1.0) 65px 70px)"></div>
<div class="a" style="left:90px;top:102.0px;width:70px;height:5.0px;background:linear-gradient(90deg,rgba(223,222,224,1.0) 0px 5px,rgba(177,179,179,1.0) 5px 10px,rgba(184,192,184,1.0) 10px 15px,rgba(184,179,189,1.0) 15px 20px,rgba(208,207,218,1.0) 20px 25px,rgba(187,185,186,1.0) 25px 30px,rgba(181,183,185,1.0) 30px 35px,rgba(168,162,159,1.0) 35px 40px,rgba(181,180,182,1.0) 40px 45px,rgba(197,203,204,1.0) 45px 50px,rgba(194,189,195,1.0) 50px 55px,rgba(157,168,161,1.0) 55px 60px,rgba(209,209,214,1.0) 60px 65px,rgba(169,181,173,1.0) 65px 70px)"></div>
<div class="t" style="right:363.5px;top:95.89px;font-size:11px;color:#2b2b2b;font-weight:bold;letter-spacing:-0.22px;">17,528</div>
<div class="t" style="right:312.5px;top:95.89px;font-size:11px;color:#2b2b2b;font-weight:bold;letter-spacing:-0.22px;">2010</div>
<div class="t" style="left:399px;top:95.89px;font-size:11px;color:#2b2b2b;font-weight:bold;letter-spacing:-0.22px;">Jabel Ali</div>
<div class="t" style="left:508.5px;top:95.89px;font-size:11px;color:#2b2b2b;font-weight:bold;letter-spacing:-0.22px;">Sep 25 ~ Sep 28</div>
<div class="t" style="left:606px;top:95.89px;font-size:11px;color:#2b2b2b;font-weight:bold;letter-spacing:-0.22px;">2025-09-15 15:06</div>
<div class="a" style="left:3px;top:144px;width:703px;height:1px;background:#e3e3e3"></div>
<div class="t" id="w14" style="left:71px;top:124.89px;font-size:11px;color:#2b2b2b;font-weight:bold;transform:scaleX(1.0025);transform-origin:left;">WO</div>
<div class="a" style="left:90px;top:116.5px;width:72px;height:28px;background:#f6f7f8"></div>
<div class="a" style="left:90px;top:121px;width:72px;height:19px;background:#fff"></div>
<div class="a" style="left:90px;top:126.0px;width:70px;height:5.0px;background:linear-gradient(90deg,rgba(181,171,177,1.0) 0px 5px,rgba(216,210,214,1.0) 5px 10px,rgba(169,169,172,1.0) 10px 15px,rgba(194,188,186,1.0) 15px 20px,rgba(169,181,182,1.0) 20px 25px,rgba(169,164,169,1.0) 25px 30px,rgba(212,222,215,1.0) 30px 35px,rgba(207,204,214,1.0) 35px 40px,rgba(209,207,212,1.0) 40px 45px,rgba(208,214,209,1.0) 45px 50px,rgba(181,179,179,1.0) 50px 55px,rgba(193,191,201,1.0) 55px 60px,rgba(200,198,201,1.0) 60px 65px,rgba(168,170,173,1.0) 65px 70px)"></div>
<div class="a" style="left:90px;top:131.0px;width:70px;height:5.0px;background:linear-gradient(90deg,rgba(215,221,217,1.0) 0px 5px,rgba(197,188,191,1.0) 5px 10px,rgba(188,190,184,1.0) 10px 15px,rgba(174,181,171,1.0) 15px 20px,rgba(168,168,170,1.0) 20px 25px,rgba(206,206,203,1.0) 25px 30px,rgba(191,187,193,1.0) 30px 35px,rgba(168,168,166,1.0) 35px 40px,rgba(201,202,202,1.0) 40px 45px,rgba(188,195,189,1.0) 45px 50px,rgba(171,169,179,1.0) 50px 55px,rgba(208,200,206,1.0) 55px 60px,rgba(174,176,176,1.0) 60px 65px,rgba(166,167,162,1.0) 65px 70px)"></div>
<div class="t" style="right:363.5px;top:124.89px;font-size:11px;color:#2b2b2b;font-weight:bold;letter-spacing:-0.22px;">17,528</div>
<div class="t" style="right:312.5px;top:124.89px;font-size:11px;color:#2b2b2b;font-weight:bold;letter-spacing:-0.22px;">2010</div>
<div class="t" style="left:399px;top:124.89px;font-size:11px;color:#2b2b2b;font-weight:bold;letter-spacing:-0.22px;">Jabel Ali</div>
<div class="t" style="left:508.5px;top:124.89px;font-size:11px;color:#2b2b2b;font-weight:bold;letter-spacing:-0.22px;">Sep 25 ~ Sep 28</div>
<div class="t" style="left:606px;top:124.89px;font-size:11px;color:#2b2b2b;font-weight:bold;letter-spacing:-0.22px;">2025-09-15 12:23</div>
<div class="a" style="left:3px;top:173px;width:703px;height:1px;background:#e3e3e3"></div>
<div class="t" id="w15" style="left:71px;top:153.89px;font-size:11px;color:#2b2b2b;font-weight:bold;transform:scaleX(1.0025);transform-origin:left;">WO</div>
<div class="a" style="left:90px;top:145.5px;width:72px;height:28px;background:#f6f7f8"></div>
<div class="a" style="left:90px;top:150px;width:72px;height:19px;background:#fff"></div>
<div class="a" style="left:90px;top:155.0px;width:70px;height:5.0px;background:linear-gradient(90deg,rgba(181,179,182,1.0) 0px 5px,rgba(200,202,206,1.0) 5px 10px,rgba(179,173,183,1.0) 10px 15px,rgba(170,177,174,1.0) 15px 20px,rgba(166,169,164,1.0) 20px 25px,rgba(173,173,178,1.0) 25px 30px,rgba(175,172,178,1.0) 30px 35px,rgba(170,167,167,1.0) 35px 40px,rgba(179,174,182,1.0) 40px 45px,rgba(177,179,174,1.0) 45px 50px,rgba(175,179,169,1.0) 50px 55px,rgba(161,158,161,1.0) 55px 60px,rgba(186,177,185,1.0) 60px 65px,rgba(157,157,165,1.0) 65px 70px)"></div>
<div class="a" style="left:90px;top:160.0px;width:70px;height:5.0px;background:linear-gradient(90deg,rgba(167,175,176,1.0) 0px 5px,rgba(218,208,218,1.0) 5px 10px,rgba(220,221,220,1.0) 10px 15px,rgba(188,181,189,1.0) 15px 20px,rgba(185,187,196,1.0) 20px 25px,rgba(201,193,193,1.0) 25px 30px,rgba(215,212,216,1.0) 30px 35px,rgba(190,190,193,1.0) 35px 40px,rgba(186,192,198,1.0) 40px 45px,rgba(193,196,186,1.0) 45px 50px,rgba(214,213,218,1.0) 50px 55px,rgba(220,219,222,1.0) 55px 60px,rgba(196,194,195,1.0) 60px 65px,rgba(156,164,161,1.0) 65px 70px)"></div>
<div class="t" style="right:363.5px;top:153.89px;font-size:11px;color:#2b2b2b;font-weight:bold;letter-spacing:-0.22px;">17,528</div>
<div class="t" style="right:312.5px;top:153.89px;font-size:11px;color:#2b2b2b;font-weight:bold;letter-spacing:-0.22px;">2010</div>
<div class="t" style="left:399px;top:153.89px;font-size:11px;color:#2b2b2b;font-weight:bold;letter-spacing:-0.22px;">Jabel Ali</div>
<div class="t" style="left:508.5px;top:153.89px;font-size:11px;color:#2b2b2b;font-weight:bold;letter-spacing:-0.22px;">Sep 25 ~ Sep 28</div>
<div class="t" style="left:606px;top:153.89px;font-size:11px;color:#2b2b2b;font-weight:bold;letter-spacing:-0.22px;">2025-09-15 11:01</div>
<div class="a" style="left:3px;top:202px;width:703px;height:1px;background:#e3e3e3"></div>
<div class="t" id="w16" style="left:71px;top:182.89px;font-size:11px;color:#2b2b2b;font-weight:bold;transform:scaleX(1.0025);transform-origin:left;">WO</div>
<div class="a" style="left:90px;top:174.5px;width:72px;height:28px;background:#f6f7f8"></div>
<div class="a" style="left:90px;top:179px;width:72px;height:19px;background:#fff"></div>
<div class="a" style="left:90px;top:184.0px;width:70px;height:5.0px;background:linear-gradient(90deg,rgba(164,165,168,1.0) 0px 5px,rgba(165,155,167,1.0) 5px 10px,rgba(196,189,195,1.0) 10px 15px,rgba(168,175,182,1.0) 15px 20px,rgba(167,164,166,1.0) 20px 25px,rgba(167,165,160,1.0) 25px 30px,rgba(210,206,205,1.0) 30px 35px,rgba(204,207,208,1.0) 35px 40px,rgba(210,201,203,1.0) 40px 45px,rgba(209,206,208,1.0) 45px 50px,rgba(212,207,215,1.0) 50px 55px,rgba(220,214,224,1.0) 55px 60px,rgba(163,164,166,1.0) 60px 65px,rgba(165,173,168,1.0) 65px 70px)"></div>
<div class="a" style="left:90px;top:189.0px;width:70px;height:5.0px;background:linear-gradient(90deg,rgba(177,183,186,1.0) 0px 5px,rgba(200,205,207,1.0) 5px 10px,rgba(160,167,162,1.0) 10px 15px,rgba(187,193,186,1.0) 15px 20px,rgba(199,206,205,1.0) 20px 25px,rgba(181,178,176,1.0) 25px 30px,rgba(188,188,195,1.0) 30px 35px,rgba(167,162,165,1.0) 35px 40px,rgba(164,157,163,1.0) 40px 45px,rgba(182,189,190,1.0) 45px 50px,rgba(175,172,174,1.0) 50px 55px,rgba(165,157,160,1.0) 55px 60px,rgba(207,203,206,1.0) 60px 65px,rgba(169,170,170,1.0) 65px 70px)"></div>
<div class="t" style="right:363.5px;top:182.89px;font-size:11px;color:#2b2b2b;font-weight:bold;letter-spacing:-0.22px;">17,528</div>
<div class="t" style="right:312.5px;top:182.89px;font-size:11px;color:#2b2b2b;font-weight:bold;letter-spacing:-0.22px;">2010</div>
<div class="t" style="left:399px;top:182.89px;font-size:11px;color:#2b2b2b;font-weight:bold;letter-spacing:-0.22px;">Jabel Ali</div>
<div class="t" style="left:508.5px;top:182.89px;font-size:11px;color:#2b2b2b;font-weight:bold;letter-spacing:-0.22px;">Sep 25 ~ Sep 28</div>
<div class="t" style="left:606px;top:182.89px;font-size:11px;color:#2b2b2b;font-weight:bold;letter-spacing:-0.22px;">2025-09-14 10:12</div>
<div class="a" style="left:3px;top:231px;width:703px;height:1px;background:#e3e3e3"></div>
<div class="t" id="w17" style="left:71px;top:211.89px;font-size:11px;color:#2b2b2b;font-weight:bold;transform:scaleX(1.0025);transform-origin:left;">WO</div>
<div class="a" style="left:90px;top:203.5px;width:72px;height:28px;background:#f6f7f8"></div>
<div class="a" style="left:90px;top:208px;width:72px;height:19px;background:#fff"></div>
<div class="a" style="left:90px;top:213.0px;width:70px;height:5.0px;background:linear-gradient(90deg,rgba(170,180,176,1.0) 0px 5px,rgba(173,173,174,1.0) 5px 10px,rgba(155,153,162,1.0) 10px 15px,rgba(202,201,201,1.0) 15px 20px,rgba(200,204,205,1.0) 20px 25px,rgba(181,177,183,1.0) 25px 30px,rgba(157,164,159,1.0) 30px 35px,rgba(211,206,210,1.0) 35px 40px,rgba(197,208,203,1.0) 40px 45px,rgba(173,169,176,1.0) 45px 50px,rgba(185,177,183,1.0) 50px 55px,rgba(217,223,217,1.0) 55px 60px,rgba(206,210,209,1.0) 60px 65px,rgba(165,159,167,1.0) 65px 70px)"></div>
<div class="a" style="left:90px;top:218.0px;width:70px;height:5.0px;background:linear-gradient(90deg,rgba(213,214,217,1.0) 0px 5px,rgba(187,184,184,1.0) 5px 10px,rgba(206,213,209,1.0) 10px 15px,rgba(208,220,222,1.0) 15px 20px,rgba(198,200,202,1.0) 20px 25px,rgba(176,166,167,1.0) 25px 30px,rgba(222,217,220,1.0) 30px 35px,rgba(203,193,203,1.0) 35px 40px,rgba(211,214,209,1.0) 40px 45px,rgba(218,212,214,1.0) 45px 50px,rgba(188,187,188,1.0) 50px 55px,rgba(175,182,184,1.0) 55px 60px,rgba(197,199,205,1.0) 60px 65px,rgba(171,174,177,1.0) 65px 70px)"></div>
<div class="t" style="right:363.5px;top:211.89px;font-size:11px;color:#2b2b2b;font-weight:bold;letter-spacing:-0.22px;">17,528</div>
<div class="t" style="right:312.5px;top:211.89px;font-size:11px;color:#2b2b2b;font-weight:bold;letter-spacing:-0.22px;">2010</div>
<div class="t" style="left:399px;top:211.89px;font-size:11px;color:#2b2b2b;font-weight:bold;letter-spacing:-0.22px;">Jabel Ali</div>
<div class="t" style="left:508.5px;top:211.89px;font-size:11px;color:#2b2b2b;font-weight:bold;letter-spacing:-0.22px;">Sep 25 ~ Sep 28</div>
<div class="t" style="left:606px;top:211.89px;font-size:11px;color:#2b2b2b;font-weight:bold;letter-spacing:-0.22px;">2025-09-13 16:20</div>
<div class="a" style="left:3px;top:260px;width:703px;height:1px;background:#e3e3e3"></div>
<div class="t" id="w18" style="left:71px;top:240.89px;font-size:11px;color:#2b2b2b;font-weight:bold;transform:scaleX(1.0025);transform-origin:left;">WO</div>
<div class="a" style="left:90px;top:232.5px;width:72px;height:28px;background:#f6f7f8"></div>
<div class="a" style="left:90px;top:237px;width:72px;height:19px;background:#fff"></div>
<div class="a" style="left:90px;top:242.0px;width:70px;height:5.0px;background:linear-gradient(90deg,rgba(200,195,198,1.0) 0px 5px,rgba(195,194,198,1.0) 5px 10px,rgba(196,191,194,1.0) 10px 15px,rgba(173,171,180,1.0) 15px 20px,rgba(186,182,190,1.0) 20px 25px,rgba(167,165,168,1.0) 25px 30px,rgba(181,174,180,1.0) 30px 35px,rgba(172,171,181,1.0) 35px 40px,rgba(191,188,201,1.0) 40px 45px,rgba(213,213,215,1.0) 45px 50px,rgba(207,202,207,1.0) 50px 55px,rgba(174,181,171,1.0) 55px 60px,rgba(187,192,190,1.0) 60px 65px,rgba(170,168,170,1.0) 65px 70px)"></div>
<div class="a" style="left:90px;top:247.0px;width:70px;height:5.0px;background:linear-gradient(90deg,rgba(204,195,195,1.0) 0px 5px,rgba(172,175,177,1.0) 5px 10px,rgba(200,199,199,1.0) 10px 15px,rgba(206,208,208,1.0) 15px 20px,rgba(190,191,193,1.0) 20px 25px,rgba(191,189,184,1.0) 25px 30px,rgba(162,164,165,1.0) 30px 35px,rgba(183,192,183,1.0) 35px 40px,rgba(168,168,176,1.0) 40px 45px,rgba(196,206,208,1.0) 45px 50px,rgba(205,200,196,1.0) 50px 55px,rgba(199,187,189,1.0) 55px 60px,rgba(204,205,213,1.0) 60px 65px,rgba(210,220,223,1.0) 65px 70px)"></div>
<div class="t" style="right:363.5px;top:240.89px;font-size:11px;color:#2b2b2b;font-weight:bold;letter-spacing:-0.22px;">17,528</div>
<div class="t" style="right:312.5px;top:240.89px;font-size:11px;color:#2b2b2b;font-weight:bold;letter-spacing:-0.22px;">2010</div>
<div class="t" style="left:399px;top:240.89px;font-size:11px;color:#2b2b2b;font-weight:bold;letter-spacing:-0.22px;">Jabel Ali</div>
<div class="t" style="left:508.5px;top:240.89px;font-size:11px;color:#2b2b2b;font-weight:bold;letter-spacing:-0.22px;">Sep 25 ~ Sep 28</div>
<div class="t" style="left:606px;top:240.89px;font-size:11px;color:#2b2b2b;font-weight:bold;letter-spacing:-0.22px;">2025-09-12 14:05</div>
<div class="a" style="left:3px;top:289px;width:703px;height:1px;background:#e3e3e3"></div>
<div class="t" id="w19" style="left:71px;top:269.89px;font-size:11px;color:#2b2b2b;font-weight:bold;transform:scaleX(1.0025);transform-origin:left;">WO</div>
<div class="a" style="left:90px;top:261.5px;width:72px;height:28px;background:#f6f7f8"></div>
<div class="a" style="left:90px;top:266px;width:72px;height:19px;background:#fff"></div>
<div class="a" style="left:90px;top:271.0px;width:70px;height:5.0px;background:linear-gradient(90deg,rgba(173,181,177,1.0) 0px 5px,rgba(195,191,198,1.0) 5px 10px,rgba(201,201,203,1.0) 10px 15px,rgba(179,180,176,1.0) 15px 20px,rgba(180,179,190,1.0) 20px 25px,rgba(190,190,200,1.0) 25px 30px,rgba(178,175,178,1.0) 30px 35px,rgba(196,200,203,1.0) 35px 40px,rgba(175,170,169,1.0) 40px 45px,rgba(189,188,184,1.0) 45px 50px,rgba(155,158,164,1.0) 50px 55px,rgba(218,218,216,1.0) 55px 60px,rgba(161,160,169,1.0) 60px 65px,rgba(184,182,188,1.0) 65px 70px)"></div>
<div class="a" style="left:90px;top:276.0px;width:70px;height:5.0px;background:linear-gradient(90deg,rgba(165,159,167,1.0) 0px 5px,rgba(183,188,186,1.0) 5px 10px,rgba(164,176,170,1.0) 10px 15px,rgba(207,200,204,1.0) 15px 20px,rgba(186,187,197,1.0) 20px 25px,rgba(207,207,213,1.0) 25px 30px,rgba(170,178,172,1.0) 30px 35px,rgba(167,165,169,1.0) 35px 40px,rgba(166,170,171,1.0) 40px 45px,rgba(220,210,221,1.0) 45px 50px,rgba(167,161,166,1.0) 50px 55px,rgba(162,155,161,1.0) 55px 60px,rgba(166,155,159,1.0) 60px 65px,rgba(184,188,184,1.0) 65px 70px)"></div>
<div class="t" style="right:363.5px;top:269.89px;font-size:11px;color:#2b2b2b;font-weight:bold;letter-spacing:-0.22px;">17,528</div>
<div class="t" style="right:312.5px;top:269.89px;font-size:11px;color:#2b2b2b;font-weight:bold;letter-spacing:-0.22px;">2010</div>
<div class="t" style="left:399px;top:269.89px;font-size:11px;color:#2b2b2b;font-weight:bold;letter-spacing:-0.22px;">Jabel Ali</div>
<div class="t" style="left:508.5px;top:269.89px;font-size:11px;color:#2b2b2b;font-weight:bold;letter-spacing:-0.22px;">Sep 25 ~ Sep 28</div>
<div class="t" style="left:606px;top:269.89px;font-size:11px;color:#2b2b2b;font-weight:bold;letter-spacing:-0.22px;">2025-09-11 16:40</div>
<div class="a" style="left:3px;top:318px;width:703px;height:1px;background:#e3e3e3"></div>
<div class="t" id="w20" style="left:71px;top:298.89px;font-size:11px;color:#2b2b2b;font-weight:bold;transform:scaleX(1.0025);transform-origin:left;">WO</div>
<div class="a" style="left:90px;top:290.5px;width:72px;height:28px;background:#f6f7f8"></div>
<div class="a" style="left:90px;top:295px;width:72px;height:19px;background:#fff"></div>
<div class="a" style="left:90px;top:300.0px;width:70px;height:5.0px;background:linear-gradient(90deg,rgba(199,199,202,1.0) 0px 5px,rgba(176,175,185,1.0) 5px 10px,rgba(219,222,220,1.0) 10px 15px,rgba(158,164,167,1.0) 15px 20px,rgba(181,181,185,1.0) 20px 25px,rgba(163,162,165,1.0) 25px 30px,rgba(170,174,177,1.0) 30px 35px,rgba(209,216,222,1.0) 35px 40px,rgba(171,170,179,1.0) 40px 45px,rgba(208,216,212,1.0) 45px 50px,rgba(157,168,166,1.0) 50px 55px,rgba(169,172,173,1.0) 55px 60px,rgba(169,169,177,1.0) 60px 65px,rgba(216,209,221,1.0) 65px 70px)"></div>
<div class="a" style="left:90px;top:305.0px;width:70px;height:5.0px;background:linear-gradient(90deg,rgba(181,190,190,1.0) 0px 5px,rgba(207,201,209,1.0) 5px 10px,rgba(161,155,168,1.0) 10px 15px,rgba(210,214,215,1.0) 15px 20px,rgba(200,208,206,1.0) 20px 25px,rgba(179,180,186,1.0) 25px 30px,rgba(158,165,167,1.0) 30px 35px,rgba(201,200,202,1.0) 35px 40px,rgba(163,164,163,1.0) 40px 45px,rgba(222,220,213,1.0) 45px 50px,rgba(156,154,162,1.0) 50px 55px,rgba(204,209,205,1.0) 55px 60px,rgba(206,208,211,1.0) 60px 65px,rgba(167,162,162,1.0) 65px 70px)"></div>
<div class="t" style="right:363.5px;top:298.89px;font-size:11px;color:#2b2b2b;font-weight:bold;letter-spacing:-0.22px;">17,528</div>
<div class="t" style="right:312.5px;top:298.89px;font-size:11px;color:#2b2b2b;font-weight:bold;letter-spacing:-0.22px;">2010</div>
<div class="t" style="left:399px;top:298.89px;font-size:11px;color:#2b2b2b;font-weight:bold;letter-spacing:-0.22px;">Jabel Ali</div>
<div class="t" style="left:508.5px;top:298.89px;font-size:11px;color:#2b2b2b;font-weight:bold;letter-spacing:-0.22px;">Sep 25 ~ Sep 28</div>
<div class="t" style="left:606px;top:298.89px;font-size:11px;color:#2b2b2b;font-weight:bold;letter-spacing:-0.22px;">2025-09-11 11:34</div>
<div class="a" style="left:3px;top:347px;width:703px;height:1px;background:#e3e3e3"></div>
<div class="t" id="w21" style="left:71px;top:327.89px;font-size:11px;color:#2b2b2b;font-weight:bold;transform:scaleX(1.0025);transform-origin:left;">WO</div>
<div class="a" style="left:90px;top:319.5px;width:72px;height:28px;background:#f6f7f8"></div>
<div class="a" style="left:90px;top:324px;width:72px;height:19px;background:#fff"></div>
<div class="a" style="left:90px;top:329.0px;width:70px;height:5.0px;background:linear-gradient(90deg,rgba(214,207,216,1.0) 0px 5px,rgba(203,210,206,1.0) 5px 10px,rgba(177,179,179,1.0) 10px 15px,rgba(214,211,205,1.0) 15px 20px,rgba(187,190,198,1.0) 20px 25px,rgba(165,168,165,1.0) 25px 30px,rgba(193,200,203,1.0) 30px 35px,rgba(191,188,194,1.0) 35px 40px,rgba(209,209,214,1.0) 40px 45px,rgba(192,194,194,1.0) 45px 50px,rgba(185,189,187,1.0) 50px 55px,rgba(166,165,171,1.0) 55px 60px,rgba(190,191,186,1.0) 60px 65px,rgba(207,211,211,1.0) 65px 70px)"></div>
<div class="a" style="left:90px;top:334.0px;width:70px;height:5.0px;background:linear-gradient(90deg,rgba(201,212,206,1.0) 0px 5px,rgba(174,179,176,1.0) 5px 10px,rgba(179,186,181,1.0) 10px 15px,rgba(171,167,168,1.0) 15px 20px,rgba(170,169,173,1.0) 20px 25px,rgba(217,211,215,1.0) 25px 30px,rgba(162,160,161,1.0) 30px 35px,rgba(192,187,196,1.0) 35px 40px,rgba(204,213,212,1.0) 40px 45px,rgba(155,154,163,1.0) 45px 50px,rgba(211,215,215,1.0) 50px 55px,rgba(158,157,157,1.0) 55px 60px,rgba(158,164,166,1.0) 60px 65px,rgba(165,169,174,1.0) 65px 70px)"></div>
<div class="t" style="right:363.5px;top:327.89px;font-size:11px;color:#2b2b2b;font-weight:bold;letter-spacing:-0.22px;">17,528</div>
<div class="t" style="right:312.5px;top:327.89px;font-size:11px;color:#2b2b2b;font-weight:bold;letter-spacing:-0.22px;">2010</div>
<div class="t" style="left:399px;top:327.89px;font-size:11px;color:#2b2b2b;font-weight:bold;letter-spacing:-0.22px;">Jabel Ali</div>
<div class="t" style="left:508.5px;top:327.89px;font-size:11px;color:#2b2b2b;font-weight:bold;letter-spacing:-0.22px;">Sep 25 ~ Sep 28</div>
<div class="t" style="left:606px;top:327.89px;font-size:11px;color:#2b2b2b;font-weight:bold;letter-spacing:-0.22px;">2025-09-09 14:47</div>
<div class="a" style="left:3px;top:376px;width:703px;height:1px;background:#e3e3e3"></div>
<div class="t" id="w22" style="left:71px;top:356.89px;font-size:11px;color:#2b2b2b;font-weight:bold;transform:scaleX(1.0025);transform-origin:left;">WO</div>
<div class="a" style="left:90px;top:348.5px;width:72px;height:28px;background:#f6f7f8"></div>
<div class="a" style="left:90px;top:353px;width:72px;height:19px;background:#fff"></div>
<div class="a" style="left:90px;top:358.0px;width:70px;height:5.0px;background:linear-gradient(90deg,rgba(209,214,218,1.0) 0px 5px,rgba(180,180,180,1.0) 5px 10px,rgba(212,213,224,1.0) 10px 15px,rgba(201,199,197,1.0) 15px 20px,rgba(165,170,172,1.0) 20px 25px,rgba(161,164,167,1.0) 25px 30px,rgba(163,165,166,1.0) 30px 35px,rgba(213,210,217,1.0) 35px 40px,rgba(188,183,182,1.0) 40px 45px,rgba(195,192,196,1.0) 45px 50px,rgba(166,161,164,1.0) 50px 55px,rgba(183,188,185,1.0) 55px 60px,rgba(208,212,212,1.0) 60px 65px,rgba(171,169,164,1.0) 65px 70px)"></div>
<div class="a" style="left:90px;top:363.0px;width:70px;height:5.0px;background:linear-gradient(90deg,rgba(195,199,206,1.0) 0px 5px,rgba(175,173,181,1.0) 5px 10px,rgba(177,171,177,1.0) 10px 15px,rgba(208,204,207,1.0) 15px 20px,rgba(178,190,192,1.0) 20px 25px,rgba(185,178,183,1.0) 25px 30px,rgba(204,201,200,1.0) 30px 35px,rgba(181,185,182,1.0) 35px 40px,rgba(205,210,215,1.0) 40px 45px,rgba(213,215,222,1.0) 45px 50px,rgba(164,162,164,1.0) 50px 55px,rgba(189,197,201,1.0) 55px 60px,rgba(216,211,221,1.0) 60px 65px,rgba(196,202,201,1.0) 65px 70px)"></div>
<div class="t" style="right:363.5px;top:356.89px;font-size:11px;color:#2b2b2b;font-weight:bold;letter-spacing:-0.22px;">17,528</div>
<div class="t" style="right:312.5px;top:356.89px;font-size:11px;color:#2b2b2b;font-weight:bold;letter-spacing:-0.22px;">2010</div>
<div class="t" style="left:399px;top:356.89px;font-size:11px;color:#2b2b2b;font-weight:bold;letter-spacing:-0.22px;">Jabel Ali</div>
<div class="t" style="left:508.5px;top:356.89px;font-size:11px;color:#2b2b2b;font-weight:bold;letter-spacing:-0.22px;">Sep 25 ~ Sep 28</div>
<div class="t" style="left:606px;top:356.89px;font-size:11px;color:#2b2b2b;font-weight:bold;letter-spacing:-0.22px;">2025-09-05 16:54</div>
<div class="a" style="left:3px;top:405px;width:703px;height:1px;background:#e3e3e3"></div>
<div class="t" id="w23" style="left:71px;top:385.89px;font-size:11px;color:#2b2b2b;font-weight:bold;transform:scaleX(1.0025);transform-origin:left;">WO</div>
<div class="a" style="left:90px;top:377.5px;width:72px;height:28px;background:#f6f7f8"></div>
<div class="a" style="left:90px;top:382px;width:72px;height:19px;background:#fff"></div>
<div class="a" style="left:90px;top:387.0px;width:70px;height:5.0px;background:linear-gradient(90deg,rgba(164,167,168,1.0) 0px 5px,rgba(170,164,165,1.0) 5px 10px,rgba(164,165,172,1.0) 10px 15px,rgba(215,215,208,1.0) 15px 20px,rgba(173,171,180,1.0) 20px 25px,rgba(172,181,184,1.0) 25px 30px,rgba(177,187,187,1.0) 30px 35px,rgba(198,206,210,1.0) 35px 40px,rgba(209,215,214,1.0) 40px 45px,rgba(194,198,195,1.0) 45px 50px,rgba(191,188,196,1.0) 50px 55px,rgba(220,214,220,1.0) 55px 60px,rgba(175,176,179,1.0) 60px 65px,rgba(201,198,208,1.0) 65px 70px)"></div>
<div class="a" style="left:90px;top:392.0px;width:70px;height:5.0px;background:linear-gradient(90deg,rgba(217,215,207,1.0) 0px 5px,rgba(199,195,202,1.0) 5px 10px,rgba(197,198,202,1.0) 10px 15px,rgba(205,211,209,1.0) 15px 20px,rgba(180,174,179,1.0) 20px 25px,rgba(186,181,185,1.0) 25px 30px,rgba(191,186,186,1.0) 30px 35px,rgba(161,159,161,1.0) 35px 40px,rgba(174,179,178,1.0) 40px 45px,rgba(208,203,215,1.0) 45px 50px,rgba(188,183,185,1.0) 50px 55px,rgba(165,166,167,1.0) 55px 60px,rgba(169,164,167,1.0) 60px 65px,rgba(194,184,186,1.0) 65px 70px)"></div>
<div class="t" style="right:363.5px;top:385.89px;font-size:11px;color:#2b2b2b;font-weight:bold;letter-spacing:-0.22px;">17,528</div>
<div class="t" style="right:312.5px;top:385.89px;font-size:11px;color:#2b2b2b;font-weight:bold;letter-spacing:-0.22px;">2010</div>
<div class="t" style="left:399px;top:385.89px;font-size:11px;color:#2b2b2b;font-weight:bold;letter-spacing:-0.22px;">Jabel Ali</div>
<div class="t" style="left:508.5px;top:385.89px;font-size:11px;color:#2b2b2b;font-weight:bold;letter-spacing:-0.22px;">Sep 25 ~ Sep 28</div>
<div class="t" style="left:606px;top:385.89px;font-size:11px;color:#2b2b2b;font-weight:bold;letter-spacing:-0.22px;">2025-09-05 15:51</div>
<div class="a" style="left:3px;top:434px;width:703px;height:1px;background:#e3e3e3"></div>
<div class="t" id="w24" style="left:71px;top:414.89px;font-size:11px;color:#2b2b2b;font-weight:bold;transform:scaleX(1.0025);transform-origin:left;">WO</div>
<div class="a" style="left:90px;top:406.5px;width:72px;height:28px;background:#f6f7f8"></div>
<div class="a" style="left:90px;top:411px;width:72px;height:19px;background:#fff"></div>
<div class="a" style="left:90px;top:416.0px;width:70px;height:5.0px;background:linear-gradient(90deg,rgba(194,193,205,1.0) 0px 5px,rgba(184,183,182,1.0) 5px 10px,rgba(157,169,167,1.0) 10px 15px,rgba(215,219,223,1.0) 15px 20px,rgba(160,161,171,1.0) 20px 25px,rgba(209,199,203,1.0) 25px 30px,rgba(167,164,174,1.0) 30px 35px,rgba(222,212,222,1.0) 35px 40px,rgba(213,205,205,1.0) 40px 45px,rgba(210,214,219,1.0) 45px 50px,rgba(170,173,179,1.0) 50px 55px,rgba(176,171,175,1.0) 55px 60px,rgba(191,187,195,1.0) 60px 65px,rgba(177,176,173,1.0) 65px 70px)"></div>
<div class="a" style="left:90px;top:421.0px;width:70px;height:5.0px;background:linear-gradient(90deg,rgba(177,172,177,1.0) 0px 5px,rgba(169,165,175,1.0) 5px 10px,rgba(215,221,218,1.0) 10px 15px,rgba(215,211,223,1.0) 15px 20px,rgba(206,203,216,1.0) 20px 25px,rgba(185,195,192,1.0) 25px 30px,rgba(214,215,217,1.0) 30px 35px,rgba(200,190,195,1.0) 35px 40px,rgba(196,192,199,1.0) 40px 45px,rgba(208,207,211,1.0) 45px 50px,rgba(184,177,182,1.0) 50px 55px,rgba(185,174,182,1.0) 55px 60px,rgba(168,175,179,1.0) 60px 65px,rgba(159,163,161,1.0) 65px 70px)"></div>
<div class="t" style="right:363.5px;top:414.89px;font-size:11px;color:#2b2b2b;font-weight:bold;letter-spacing:-0.22px;">17,528</div>
<div class="t" style="right:312.5px;top:414.89px;font-size:11px;color:#2b2b2b;font-weight:bold;letter-spacing:-0.22px;">2010</div>
<div class="t" style="left:399px;top:414.89px;font-size:11px;color:#2b2b2b;font-weight:bold;letter-spacing:-0.22px;">Jabel Ali</div>
<div class="t" style="left:508.5px;top:414.89px;font-size:11px;color:#2b2b2b;font-weight:bold;letter-spacing:-0.22px;">Sep 25 ~ Sep 28</div>
<div class="t" style="left:606px;top:414.89px;font-size:11px;color:#2b2b2b;font-weight:bold;letter-spacing:-0.22px;">2025-09-04 11:00</div>
<div class="a" style="left:3px;top:463px;width:703px;height:1px;background:#e3e3e3"></div>
<div class="t" id="w25" style="left:71px;top:443.89px;font-size:11px;color:#2b2b2b;font-weight:bold;transform:scaleX(1.0025);transform-origin:left;">WO</div>
<div class="a" style="left:90px;top:435.5px;width:72px;height:28px;background:#f6f7f8"></div>
<div class="a" style="left:90px;top:440px;width:72px;height:19px;background:#fff"></div>
<div class="a" style="left:90px;top:445.0px;width:70px;height:5.0px;background:linear-gradient(90deg,rgba(181,180,183,1.0) 0px 5px,rgba(214,220,211,1.0) 5px 10px,rgba(199,202,203,1.0) 10px 15px,rgba(179,180,178,1.0) 15px 20px,rgba(186,183,180,1.0) 20px 25px,rgba(167,163,171,1.0) 25px 30px,rgba(193,193,195,1.0) 30px 35px,rgba(161,157,158,1.0) 35px 40px,rgba(166,163,168,1.0) 40px 45px,rgba(172,175,172,1.0) 45px 50px,rgba(191,192,196,1.0) 50px 55px,rgba(198,193,195,1.0) 55px 60px,rgba(164,155,165,1.0) 60px 65px,rgba(168,162,164,1.0) 65px 70px)"></div>
<div class="a" style="left:90px;top:450.0px;width:70px;height:5.0px;background:linear-gradient(90deg,rgba(194,202,206,1.0) 0px 5px,rgba(175,181,175,1.0) 5px 10px,rgba(152,162,162,1.0) 10px 15px,rgba(214,218,221,1.0) 15px 20px,rgba(196,198,199,1.0) 20px 25px,rgba(205,201,202,1.0) 25px 30px,rgba(209,209,211,1.0) 30px 35px,rgba(186,192,190,1.0) 35px 40px,rgba(169,167,181,1.0) 40px 45px,rgba(158,167,168,1.0) 45px 50px,rgba(197,196,202,1.0) 50px 55px,rgba(172,173,176,1.0) 55px 60px,rgba(194,194,192,1.0) 60px 65px,rgba(213,206,214,1.0) 65px 70px)"></div>
<div class="t" style="right:363.5px;top:443.89px;font-size:11px;color:#2b2b2b;font-weight:bold;letter-spacing:-0.22px;">17,528</div>
<div class="t" style="right:312.5px;top:443.89px;font-size:11px;color:#2b2b2b;font-weight:bold;letter-spacing:-0.22px;">2010</div>
<div class="t" style="left:399px;top:443.89px;font-size:11px;color:#2b2b2b;font-weight:bold;letter-spacing:-0.22px;">Jabel Ali</div>
<div class="t" style="left:508.5px;top:443.89px;font-size:11px;color:#2b2b2b;font-weight:bold;letter-spacing:-0.22px;">Sep 25 ~ Sep 28</div>
<div class="t" style="left:606px;top:443.89px;font-size:11px;color:#2b2b2b;font-weight:bold;letter-spacing:-0.22px;">2025-09-02 15:00</div>
<div class="a" style="left:3px;top:492px;width:703px;height:1px;background:#e3e3e3"></div>
<div class="t" id="w26" style="left:71px;top:472.89px;font-size:11px;color:#2b2b2b;font-weight:bold;transform:scaleX(1.0025);transform-origin:left;">WO</div>
<div class="a" style="left:90px;top:464.5px;width:72px;height:28px;background:#f6f7f8"></div>
<div class="a" style="left:90px;top:469px;width:72px;height:19px;background:#fff"></div>
<div class="a" style="left:90px;top:474.0px;width:70px;height:5.0px;background:linear-gradient(90deg,rgba(172,175,183,1.0) 0px 5px,rgba(166,167,164,1.0) 5px 10px,rgba(205,197,205,1.0) 10px 15px,rgba(212,217,215,1.0) 15px 20px,rgba(168,167,166,1.0) 20px 25px,rgba(166,164,169,1.0) 25px 30px,rgba(176,166,169,1.0) 30px 35px,rgba(184,184,179,1.0) 35px 40px,rgba(197,201,209,1.0) 40px 45px,rgba(197,193,199,1.0) 45px 50px,rgba(210,206,208,1.0) 50px 55px,rgba(196,194,203,1.0) 55px 60px,rgba(154,156,157,1.0) 60px 65px,rgba(216,208,209,1.0) 65px 70px)"></div>
<div class="a" style="left:90px;top:479.0px;width:70px;height:5.0px;background:linear-gradient(90deg,rgba(204,202,207,1.0) 0px 5px,rgba(182,176,181,1.0) 5px 10px,rgba(220,221,222,1.0) 10px 15px,rgba(213,212,214,1.0) 15px 20px,rgba(213,216,207,1.0) 20px 25px,rgba(206,212,219,1.0) 25px 30px,rgba(175,170,180,1.0) 30px 35px,rgba(171,174,176,1.0) 35px 40px,rgba(165,158,160,1.0) 40px 45px,rgba(154,155,157,1.0) 45px 50px,rgba(193,196,195,1.0) 50px 55px,rgba(196,196,198,1.0) 55px 60px,rgba(171,170,172,1.0) 60px 65px,rgba(165,155,167,1.0) 65px 70px)"></div>
<div class="t" style="right:363.5px;top:472.89px;font-size:11px;color:#2b2b2b;font-weight:bold;letter-spacing:-0.22px;">17,528</div>
<div class="t" style="right:312.5px;top:472.89px;font-size:11px;color:#2b2b2b;font-weight:bold;letter-spacing:-0.22px;">2010</div>
<div class="t" style="left:399px;top:472.89px;font-size:11px;color:#2b2b2b;font-weight:bold;letter-spacing:-0.22px;">Jabel Ali</div>
<div class="t" style="left:508.5px;top:472.89px;font-size:11px;color:#2b2b2b;font-weight:bold;letter-spacing:-0.22px;">Sep 25 ~ Sep 28</div>
<div class="t" style="left:606px;top:472.89px;font-size:11px;color:#2b2b2b;font-weight:bold;letter-spacing:-0.22px;">2025-09-02 10:28</div>
<div class="a" style="left:3px;top:521px;width:703px;height:1px;background:#e3e3e3"></div>
<div class="t" id="w27" style="left:71px;top:501.89px;font-size:11px;color:#2b2b2b;font-weight:bold;transform:scaleX(1.0025);transform-origin:left;">WO</div>
<div class="a" style="left:90px;top:493.5px;width:72px;height:28px;background:#f6f7f8"></div>
<div class="a" style="left:90px;top:498px;width:72px;height:19px;background:#fff"></div>
<div class="a" style="left:90px;top:503.0px;width:70px;height:5.0px;background:linear-gradient(90deg,rgba(155,163,168,1.0) 0px 5px,rgba(178,183,187,1.0) 5px 10px,rgba(168,167,164,1.0) 10px 15px,rgba(161,161,163,1.0) 15px 20px,rgba(159,159,173,1.0) 20px 25px,rgba(210,201,214,1.0) 25px 30px,rgba(202,196,201,1.0) 30px 35px,rgba(160,159,172,1.0) 35px 40px,rgba(210,203,206,1.0) 40px 45px,rgba(177,178,178,1.0) 45px 50px,rgba(158,157,159,1.0) 50px 55px,rgba(166,167,162,1.0) 55px 60px,rgba(215,222,221,1.0) 60px 65px,rgba(191,188,195,1.0) 65px 70px)"></div>
<div class="a" style="left:90px;top:508.0px;width:70px;height:5.0px;background:linear-gradient(90deg,rgba(199,211,207,1.0) 0px 5px,rgba(159,161,167,1.0) 5px 10px,rgba(163,165,171,1.0) 10px 15px,rgba(163,164,160,1.0) 15px 20px,rgba(198,206,203,1.0) 20px 25px,rgba(168,162,172,1.0) 25px 30px,rgba(168,176,178,1.0) 30px 35px,rgba(155,160,164,1.0) 35px 40px,rgba(165,169,172,1.0) 40px 45px,rgba(206,211,215,1.0) 45px 50px,rgba(182,178,185,1.0) 50px 55px,rgba(214,216,217,1.0) 55px 60px,rgba(223,215,221,1.0) 60px 65px,rgba(163,172,176,1.0) 65px 70px)"></div>
<div class="t" style="right:363.5px;top:501.89px;font-size:11px;color:#2b2b2b;font-weight:bold;letter-spacing:-0.22px;">17,528</div>
<div class="t" style="right:312.5px;top:501.89px;font-size:11px;color:#2b2b2b;font-weight:bold;letter-spacing:-0.22px;">2010</div>
<div class="t" style="left:399px;top:501.89px;font-size:11px;color:#2b2b2b;font-weight:bold;letter-spacing:-0.22px;">Jabel Ali</div>
<div class="t" style="left:508.5px;top:501.89px;font-size:11px;color:#2b2b2b;font-weight:bold;letter-spacing:-0.22px;">Sep 25 ~ Sep 28</div>
<div class="t" style="left:606px;top:501.89px;font-size:11px;color:#2b2b2b;font-weight:bold;letter-spacing:-0.22px;">2025-09-01 15:28</div>
<div class="a" style="left:3px;top:550px;width:703px;height:1px;background:#e3e3e3"></div>
<div class="t" id="w28" style="left:71px;top:530.89px;font-size:11px;color:#2b2b2b;font-weight:bold;transform:scaleX(1.0025);transform-origin:left;">WO</div>
<div class="a" style="left:90px;top:522.5px;width:72px;height:28px;background:#f6f7f8"></div>
<div class="a" style="left:90px;top:527px;width:72px;height:19px;background:#fff"></div>
<div class="a" style="left:90px;top:532.0px;width:70px;height:5.0px;background:linear-gradient(90deg,rgba(164,169,170,1.0) 0px 5px,rgba(199,188,199,1.0) 5px 10px,rgba(177,173,180,1.0) 10px 15px,rgba(217,222,214,1.0) 15px 20px,rgba(189,179,186,1.0) 20px 25px,rgba(169,169,173,1.0) 25px 30px,rgba(217,217,213,1.0) 30px 35px,rgba(186,179,185,1.0) 35px 40px,rgba(168,169,174,1.0) 40px 45px,rgba(208,205,208,1.0) 45px 50px,rgba(159,163,161,1.0) 50px 55px,rgba(187,192,197,1.0) 55px 60px,rgba(198,192,191,1.0) 60px 65px,rgba(188,192,195,1.0) 65px 70px)"></div>
<div class="a" style="left:90px;top:537.0px;width:70px;height:5.0px;background:linear-gradient(90deg,rgba(177,171,172,1.0) 0px 5px,rgba(180,183,186,1.0) 5px 10px,rgba(175,170,173,1.0) 10px 15px,rgba(183,182,182,1.0) 15px 20px,rgba(172,163,166,1.0) 20px 25px,rgba(203,207,208,1.0) 25px 30px,rgba(176,177,181,1.0) 30px 35px,rgba(168,175,167,1.0) 35px 40px,rgba(172,163,167,1.0) 40px 45px,rgba(178,178,190,1.0) 45px 50px,rgba(182,175,179,1.0) 50px 55px,rgba(172,170,181,1.0) 55px 60px,rgba(211,214,215,1.0) 60px 65px,rgba(214,215,210,1.0) 65px 70px)"></div>
<div class="t" style="right:363.5px;top:530.89px;font-size:11px;color:#2b2b2b;font-weight:bold;letter-spacing:-0.22px;">17,528</div>
<div class="t" style="right:312.5px;top:530.89px;font-size:11px;color:#2b2b2b;font-weight:bold;letter-spacing:-0.22px;">2010</div>
<div class="t" style="left:399px;top:530.89px;font-size:11px;color:#2b2b2b;font-weight:bold;letter-spacing:-0.22px;">Jabel Ali</div>
<div class="t" style="left:508.5px;top:530.89px;font-size:11px;color:#2b2b2b;font-weight:bold;letter-spacing:-0.22px;">Sep 25 ~ Sep 28</div>
<div class="t" style="left:606px;top:530.89px;font-size:11px;color:#2b2b2b;font-weight:bold;letter-spacing:-0.22px;">2025-09-01 13:07</div>
<div class="a" style="left:3px;top:579px;width:703px;height:1px;background:#e3e3e3"></div>
<div class="t" id="w29" style="left:71px;top:559.89px;font-size:11px;color:#2b2b2b;font-weight:bold;transform:scaleX(1.0025);transform-origin:left;">WO</div>
<div class="a" style="left:90px;top:551.5px;width:72px;height:28px;background:#f6f7f8"></div>
<div class="a" style="left:90px;top:556px;width:72px;height:19px;background:#fff"></div>
<div class="a" style="left:90px;top:561.0px;width:70px;height:5.0px;background:linear-gradient(90deg,rgba(158,164,160,1.0) 0px 5px,rgba(199,204,208,1.0) 5px 10px,rgba(177,170,174,1.0) 10px 15px,rgba(177,179,176,1.0) 15px 20px,rgba(163,155,160,1.0) 20px 25px,rgba(205,205,209,1.0) 25px 30px,rgba(199,196,205,1.0) 30px 35px,rgba(208,210,210,1.0) 35px 40px,rgba(205,199,208,1.0) 40px 45px,rgba(173,164,172,1.0) 45px 50px,rgba(184,183,191,1.0) 50px 55px,rgba(197,202,201,1.0) 55px 60px,rgba(208,213,215,1.0) 60px 65px,rgba(194,196,200,1.0) 65px 70px)"></div>
<div class="a" style="left:90px;top:566.0px;width:70px;height:5.0px;background:linear-gradient(90deg,rgba(189,182,193,1.0) 0px 5px,rgba(212,214,218,1.0) 5px 10px,rgba(196,204,201,1.0) 10px 15px,rgba(201,207,210,1.0) 15px 20px,rgba(211,210,216,1.0) 20px 25px,rgba(189,188,199,1.0) 25px 30px,rgba(205,210,209,1.0) 30px 35px,rgba(167,165,168,1.0) 35px 40px,rgba(176,172,175,1.0) 40px 45px,rgba(163,165,160,1.0) 45px 50px,rgba(190,191,198,1.0) 50px 55px,rgba(219,215,224,1.0) 55px 60px,rgba(169,171,177,1.0) 60px 65px,rgba(212,222,222,1.0) 65px 70px)"></div>
<div class="t" style="right:363.5px;top:559.89px;font-size:11px;color:#2b2b2b;font-weight:bold;letter-spacing:-0.22px;">17,528</div>
<div class="t" style="right:312.5px;top:559.89px;font-size:11px;color:#2b2b2b;font-weight:bold;letter-spacing:-0.22px;">2010</div>
<div class="t" style="left:399px;top:559.89px;font-size:11px;color:#2b2b2b;font-weight:bold;letter-spacing:-0.22px;">Jabel Ali</div>
<div class="t" style="left:508.5px;top:559.89px;font-size:11px;color:#2b2b2b;font-weight:bold;letter-spacing:-0.22px;">Sep 25 ~ Sep 28</div>
<div class="t" style="left:606px;top:559.89px;font-size:11px;color:#2b2b2b;font-weight:bold;letter-spacing:-0.22px;">2025-09-01 11:47</div>
<div class="a" style="left:0px;top:608px;width:703px;height:1px;background:#e3e3e3"></div>
<div class="t" style="left:71px;top:588.89px;font-size:11px;color:#555;font-weight:normal;letter-spacing:-0.12px;">CYGNUS</div>
<div class="t" style="right:363.5px;top:588.89px;font-size:11px;color:#555;font-weight:normal;letter-spacing:-0.12px;">50,820</div>
<div class="t" style="left:399px;top:588.89px;font-size:11px;color:#555;font-weight:normal;letter-spacing:-0.12px;">Paradip</div>
<div class="t" style="left:508.5px;top:588.89px;font-size:11px;color:#555;font-weight:normal;letter-spacing:-0.12px;">Sep 22 ~ Sep 25</div>
<div class="t" style="left:606px;top:588.89px;font-size:11px;color:#555;font-weight:normal;letter-spacing:-0.12px;">2025-09-16 17:18</div>
<div class="a" style="left:0px;top:637px;width:703px;height:1px;background:#e3e3e3"></div>
<svg style="left:21.5px;top:617px;" width="13" height="13" viewBox="0 0 13 13"><path d="M6.5 0.5 L8.2 4.4 L12.3 4.7 L9.1 7.4 L10.1 11.5 L6.5 9.3 L2.9 11.5 L3.9 7.4 L0.7 4.7 L4.8 4.4 Z" fill="#e8a54c"/></svg>
<div class="t" style="left:71px;top:617.89px;font-size:11px;color:#555;font-weight:normal;letter-spacing:-0.12px;">PVT SAPPHIRE</div>
<div class="t" style="right:363.5px;top:617.89px;font-size:11px;color:#555;font-weight:normal;letter-spacing:-0.12px;">56,024</div>
<div class="t" style="right:312.5px;top:617.89px;font-size:11px;color:#555;font-weight:normal;letter-spacing:-0.12px;">2006</div>
<div class="t" style="left:399px;top:617.89px;font-size:11px;color:#555;font-weight:normal;letter-spacing:-0.12px;">Vung Tau</div>
<div class="t" style="left:508.5px;top:617.89px;font-size:11px;color:#555;font-weight:normal;letter-spacing:-0.12px;">Sep 25 ~ Sep 29</div>
<div class="t" style="left:606px;top:617.89px;font-size:11px;color:#555;font-weight:normal;letter-spacing:-0.12px;">2025-09-16 17:17</div>
</div>
<div class="a" style="left:334px;top:916px;width:703px;height:1px;background:#dcdcdc"></div>
<div class="a" style="left:334px;top:380px;width:3px;height:494px;background:#0a5cc2"></div>
<div class="t" style="left:338px;top:928.19px;font-size:11px;color:#333;font-weight:normal;">Total : 6091</div>
<svg style="left:584px;top:928px;" width="11" height="10" viewBox="0 0 11 10"><path d="M1 0.5 V9.5" stroke="#555" stroke-width="1.2"/><path d="M9.5 0.8 L3.5 5 L9.5 9.2 Z" fill="none" stroke="#555" stroke-width="1.1" stroke-linejoin="round"/></svg>
<svg style="left:612px;top:928px;" width="9" height="10" viewBox="0 0 9 10"><path d="M8 0.8 L1.5 5 L8 9.2 Z" fill="none" stroke="#555" stroke-width="1.1" stroke-linejoin="round"/></svg>
<div class="a" style="left:632.5px;top:923px;width:46.5px;height:20px;background:#fff;border:1px solid #cfcfcf;border-bottom-color:#b5b5b5;border-radius:3px"></div>
<div class="t" style="left:656px;top:928.99px;font-size:11px;color:#1f1f1f;font-weight:normal;transform:translateX(-50%) ;">3</div>
<div class="t" style="left:685px;top:928.99px;font-size:11px;color:#333;font-weight:normal;transform:translateX(-50%) ;">/</div>
<div class="a" style="left:691px;top:923px;width:47px;height:20px;background:#fff;border:1px solid #e3e3e3;border-radius:3px"></div>
<div class="t" style="left:714.5px;top:928.99px;font-size:11px;color:#a0a0a0;font-weight:normal;transform:translateX(-50%) ;">122</div>
<svg style="left:750px;top:928px;" width="9" height="10" viewBox="0 0 9 10"><path d="M1 0.8 L7.5 5 L1 9.2 Z" fill="none" stroke="#555" stroke-width="1.1" stroke-linejoin="round"/></svg>
<svg style="left:776px;top:928px;" width="11" height="10" viewBox="0 0 11 10"><path d="M10 0.5 V9.5" stroke="#555" stroke-width="1.2"/><path d="M1.5 0.8 L7.5 5 L1.5 9.2 Z" fill="none" stroke="#555" stroke-width="1.1" stroke-linejoin="round"/></svg>
<div class="a" style="left:986.5px;top:923px;width:46.5px;height:19.5px;background:#fff;border:1px solid #cfcfcf;border-bottom-color:#bdbdbd;border-radius:3px"></div>
<div class="t" style="left:992px;top:928.24px;font-size:11px;color:#1f1f1f;font-weight:normal;">50</div>
<svg style="left:1018px;top:929.75px;" width="9" height="6" viewBox="0 0 9 6"><path d="M1 1 L4.5 4.5 L8 1" fill="none" stroke="#6a6a6a" stroke-width="1"/></svg>
<div class="a" style="left:1051.5px;top:73.5px;width:412px;height:58px;background:#fff;border-radius:4px"></div>
<svg style="left:1066px;top:96px;" width="15" height="15" viewBox="0 0 15 15"><path d="M7.5 0.3 L9.5 5 L14.6 5.4 L10.7 8.7 L11.9 13.8 L7.5 11.1 L3.1 13.8 L4.3 8.7 L0.4 5.4 L5.5 5 Z" fill="#f6a61c"/></svg>
<div class="a" style="left:1095px;top:98.5px;width:136px;height:4px;background:linear-gradient(90deg,rgb(157,157,157) 0px 4px,rgb(113,113,113) 4px 8px,rgb(147,147,147) 8px 12px,rgb(101,101,101) 12px 16px,rgb(201,201,201) 16px 20px,rgb(105,105,105) 20px 24px,rgb(105,105,105) 24px 28px,rgb(147,147,147) 28px 32px,rgb(93,93,93) 32px 36px,rgb(195,195,195) 36px 40px,rgb(106,106,106) 40px 44px,rgb(159,159,159) 44px 48px,rgb(113,113,113) 48px 52px,rgb(115,115,115) 52px 56px,rgb(167,167,167) 56px 60px,rgb(204,204,204) 60px 64px,rgb(164,164,164) 64px 68px,rgb(101,101,101) 68px 72px,rgb(149,149,149) 72px 76px,rgb(100,100,100) 76px 80px,rgb(102,102,102) 80px 84px,rgb(216,216,216) 84px 88px,rgb(244,244,244) 88px 92px,rgb(209,209,209) 92px 96px,rgb(153,153,153) 96px 100px,rgb(105,105,105) 100px 104px,rgb(207,207,207) 104px 108px,rgb(199,199,199) 108px 112px,rgb(151,151,151) 112px 116px,rgb(150,150,150) 116px 120px,rgb(117,117,117) 120px 124px,rgb(148,148,148) 124px 128px,rgb(113,113,113) 128px 132px,rgb(199,199,199) 132px 136px)"></div>
<div class="a" style="left:1095px;top:102.5px;width:136px;height:4px;background:linear-gradient(90deg,rgb(208,208,208) 0px 4px,rgb(113,113,113) 4px 8px,rgb(210,210,210) 8px 12px,rgb(255,255,255) 12px 16px,rgb(100,100,100) 16px 20px,rgb(197,197,197) 20px 24px,rgb(243,243,243) 24px 28px,rgb(114,114,114) 28px 32px,rgb(113,113,113) 32px 36px,rgb(206,206,206) 36px 40px,rgb(160,160,160) 40px 44px,rgb(241,241,241) 44px 48px,rgb(117,117,117) 48px 52px,rgb(163,163,163) 52px 56px,rgb(213,213,213) 56px 60px,rgb(97,97,97) 60px 64px,rgb(170,170,170) 64px 68px,rgb(208,208,208) 68px 72px,rgb(104,104,104) 72px 76px,rgb(153,153,153) 76px 80px,rgb(240,240,240) 80px 84px,rgb(215,215,215) 84px 88px,rgb(244,244,244) 88px 92px,rgb(214,214,214) 92px 96px,rgb(101,101,101) 96px 100px,rgb(206,206,206) 100px 104px,rgb(253,253,253) 104px 108px,rgb(237,237,237) 108px 112px,rgb(108,108,108) 112px 116px,rgb(193,193,193) 116px 120px,rgb(169,169,169) 120px 124px,rgb(240,240,240) 124px 128px,rgb(204,204,204) 128px 132px,rgb(100,100,100) 132px 136px)"></div>
<div class="a" style="left:1095px;top:106.5px;width:136px;height:4px;background:linear-gradient(90deg,rgb(166,166,166) 0px 4px,rgb(102,102,102) 4px 8px,rgb(156,156,156) 8px 12px,rgb(108,108,108) 12px 16px,rgb(208,208,208) 16px 20px,rgb(106,106,106) 20px 24px,rgb(112,112,112) 24px 28px,rgb(166,166,166) 28px 32px,rgb(95,95,95) 32px 36px,rgb(167,167,167) 36px 40px,rgb(104,104,104) 40px 44px,rgb(197,197,197) 44px 48px,rgb(102,102,102) 48px 52px,rgb(105,105,105) 52px 56px,rgb(147,147,147) 56px 60px,rgb(95,95,95) 60px 64px,rgb(211,211,211) 64px 68px,rgb(156,156,156) 68px 72px,rgb(97,97,97) 72px 76px,rgb(109,109,109) 76px 80px,rgb(157,157,157) 80px 84px,rgb(213,213,213) 84px 88px,rgb(250,250,250) 88px 92px,rgb(193,193,193) 92px 96px,rgb(114,114,114) 96px 100px,rgb(193,193,193) 100px 104px,rgb(152,152,152) 104px 108px,rgb(95,95,95) 108px 112px,rgb(213,213,213) 112px 116px,rgb(202,202,202) 116px 120px,rgb(154,154,154) 120px 124px,rgb(112,112,112) 124px 128px,rgb(149,149,149) 128px 132px,rgb(111,111,111) 132px 136px)"></div>
<div class="a" style="left:1095px;top:110.5px;width:136px;height:3.5px;background:linear-gradient(90deg,#eaeaea,#dcdcdc 20%,#eee 40%,#e0e0e0 70%,#eee)"></div>
<svg style="left:1089px;top:97.5px;" width="7" height="14" viewBox="0 0 7 14"><path d="M0.8 0.8 L4.5 13" stroke="#1a1a1a" stroke-width="1.7"/></svg>
<svg style="left:1432px;top:98.5px;" width="12" height="9" viewBox="0 0 12 9"><path d="M0 1 H11.5 M0 4.5 H11.5 M0 8 H11.5" stroke="#5a5a5a" stroke-width="1.2"/></svg>
<div class="a" style="left:1052px;top:163.5px;width:411.5px;height:151px;background:#fff;border:1px solid #d2d2d2;border-radius:3px 4px 4px 4px"></div>
<div class="a" style="left:1058.5px;top:138px;width:69.5px;height:26.5px;background:#f3f3f3;border:1px solid #d2d2d2;border-bottom:none;border-radius:4px 4px 0 0"></div>
<div class="t" id="w30" style="left:1068px;top:146.29px;font-size:11px;color:#333;font-weight:normal;transform:scaleX(0.9475);transform-origin:left;">Vessel Info</div>
<div class="t" id="w31" style="left:1138.5px;top:146.29px;font-size:11px;color:#333;font-weight:normal;transform:scaleX(0.9757);transform-origin:left;">Contact</div>
<div class="t" id="w32" style="left:1194.8px;top:146.29px;font-size:11px;color:#333;font-weight:normal;transform:scaleX(1.0044);transform-origin:left;">Map</div>
<div class="a" style="left:1333.5px;top:138.5px;width:77px;height:21.5px;background:#fff;border:1px solid #cfcfcf;border-bottom-color:#b8b8b8;border-radius:3px"></div>
<svg style="left:1342px;top:142px;" width="16" height="16" viewBox="0 0 16 16"><g transform="rotate(-40 8 7)" fill="none" stroke="#5a5a5a" stroke-width="1.05"><rect x="0.5" y="4.8" width="4.4" height="4"/><rect x="5.8" y="4.2" width="3.6" height="5.2"/><rect x="10.3" y="4.8" width="4.4" height="4"/><path d="M2.7 4.8 V8.8 M12.5 4.8 V8.8"/></g><path d="M9.5 15 Q13.2 14.3 14 11 M10.5 13 Q12 12.4 12.4 11.2" fill="none" stroke="#5a5a5a" stroke-width="1"/></svg>
<div class="t" id="w33" style="left:1362.5px;top:143.69px;font-size:11px;color:#333;font-weight:normal;transform:scaleX(0.9097);transform-origin:left;">AIS Beta</div>
<div class="a" style="left:1415.5px;top:138.5px;width:21px;height:21.5px;background:#fff;border:1px solid #cfcfcf;border-bottom-color:#b8b8b8;border-radius:3px"></div>
<svg style="left:1419px;top:142px;" width="15" height="15" viewBox="0 0 15 15"><path d="M7.5 12.5 H1.2 V1.2 H11.5 V6.5" fill="none" stroke="#555" stroke-width="1.2"/><path d="M3.3 4 H9.5 M3.3 6.5 H7.8 M3.3 9 H5.8" stroke="#555" stroke-width="1.1"/><circle cx="10.5" cy="10.8" r="3.5" fill="#555"/><path d="M10.5 9 V11 L11.7 12" fill="none" stroke="#fff" stroke-width="0.9"/></svg>
<div class="a" style="left:1441.5px;top:138.5px;width:21px;height:21.5px;background:#fff;border:1px solid #cfcfcf;border-bottom-color:#b8b8b8;border-radius:3px"></div>
<svg style="left:1445px;top:142.5px;" width="14" height="14" viewBox="0 0 14 14"><rect x="1" y="1.8" width="11.5" height="11.2" rx="1" fill="none" stroke="#555" stroke-width="1.2"/><path d="M4.5 1.8 V0.8 H9 V1.8" fill="none" stroke="#555" stroke-width="1"/><path d="M3.8 10.5 L9.8 4.5" stroke="#555" stroke-width="1.2"/></svg>
<svg style="left:1069px;top:182px;" width="13" height="12" viewBox="0 0 13 12"><rect x="0.6" y="0.6" width="11.5" height="10.8" rx="1.4" fill="none" stroke="#888" stroke-width="1.1"/><rect x="3" y="3" width="1.4" height="1.4" fill="#888"/><rect x="8.3" y="3" width="1.4" height="1.4" fill="#888"/><rect x="3" y="7.6" width="1.4" height="1.4" fill="#888"/><rect x="8.3" y="7.6" width="1.4" height="1.4" fill="#888"/></svg>
<div class="t" style="left:1091.5px;top:182.39px;font-size:11px;color:#707070;font-weight:normal;">DWT</div>
<div class="t" style="left:1168.5px;top:182.39px;font-size:11px;color:#1f1f1f;font-weight:normal;">17,528</div>
<svg style="left:1069px;top:207px;" width="12" height="14" viewBox="0 0 12 14"><path d="M6 12.8 Q1 7.5 1 5.2 Q1 0.8 6 0.8 Q11 0.8 11 5.2 Q11 7.5 6 12.8 Z" fill="none" stroke="#888" stroke-width="1.1"/><circle cx="6" cy="5" r="1.2" fill="#888"/></svg>
<div class="t" id="w34" style="left:1091.5px;top:208.19px;font-size:11px;color:#707070;font-weight:normal;transform:scaleX(0.9127);transform-origin:left;">Open Area</div>
<div class="t" style="left:1168.5px;top:208.19px;font-size:11px;color:#1f1f1f;font-weight:normal;">Jabel Ali</div>
<svg style="left:1069px;top:233px;" width="13" height="13" viewBox="0 0 13 13"><rect x="0.6" y="1.6" width="11.5" height="10.8" rx="1.2" fill="none" stroke="#888" stroke-width="1.1"/><path d="M0.6 4.5 H12.1" stroke="#888" stroke-width="1.6"/><path d="M3.5 0.2 V2.5 M9 0.2 V2.5" stroke="#888" stroke-width="1"/><path d="M2.8 7 H4 M5.7 7 H6.9 M8.6 7 H9.8 M2.8 9.5 H4 M5.7 9.5 H6.9 M8.6 9.5 H9.8" stroke="#aaa" stroke-width="1"/></svg>
<div class="t" id="w35" style="left:1091.5px;top:234.19px;font-size:11px;color:#707070;font-weight:normal;transform:scaleX(0.9586);transform-origin:left;">Open Date</div>
<div class="t" id="w36" style="left:1168.5px;top:234.19px;font-size:11px;color:#1f1f1f;font-weight:normal;transform:scaleX(0.9861);transform-origin:left;">2025-09-25</div>
<div class="t" style="left:1237.5px;top:234.19px;font-size:11px;color:#1f1f1f;font-weight:normal;">-</div>
<div class="t" id="w37" style="left:1256px;top:234.19px;font-size:11px;color:#1f1f1f;font-weight:normal;transform:scaleX(0.9861);transform-origin:left;">2025-09-28</div>
<svg style="left:1069px;top:259px;" width="13" height="12" viewBox="0 0 13 12"><rect x="0.6" y="0.8" width="11.8" height="10" rx="1.4" fill="none" stroke="#888" stroke-width="1.1"/><path d="M3 7.6 H10" stroke="#888" stroke-width="1.6"/></svg>
<div class="t" style="left:1091.5px;top:259.69px;font-size:11px;color:#707070;font-weight:normal;">Built</div>
<div class="t" style="left:1168.5px;top:259.69px;font-size:11px;color:#1f1f1f;font-weight:normal;">2010</div>
<div class="t" id="w38" style="left:1068px;top:285.69px;font-size:11px;color:#707070;font-weight:normal;transform:scaleX(0.9963);transform-origin:left;">No speed and bunker consumption</div>
<div class="a" style="left:1271px;top:174.5px;width:131.5px;height:21.5px;background:#fff;border:1px solid #cfcfcf;border-bottom-color:#b8b8b8;border-radius:3px"></div>
<div class="t" id="w39" style="left:1336.8px;top:179.69px;font-size:11px;color:#1f1f1f;font-weight:normal;transform:translateX(-50%) scaleX(0.9560);transform-origin:center;">Save to Vessel Manager</div>
<div class="a" style="left:1411.5px;top:174.5px;width:35px;height:21.5px;background:#fff;border:1px solid #cfcfcf;border-bottom-color:#b8b8b8;border-radius:3px"></div>
<div class="t" style="left:1429px;top:179.69px;font-size:11px;color:#1f1f1f;font-weight:normal;transform:translateX(-50%) ;">Edit</div>
<div class="a" style="left:1051.5px;top:321px;width:412px;height:628px;background:#fff;border-radius:4px 4px 0 0"></div>
<div class="a" style="left:1067.5px;top:332px;width:372px;height:383px;background:#dedede"></div>
<div class="t" style="left:1071.5px;top:340.19px;font-size:11px;color:#222;font-weight:normal;">M</div>
<div class="a" style="left:1080px;top:339.0px;width:10px;height:5.5px;background:linear-gradient(90deg,rgba(126,125,140,1.0) 0px 5px,rgba(147,154,149,1.0) 5px 10px)"></div>
<div class="a" style="left:1080px;top:344.5px;width:10px;height:5.5px;background:linear-gradient(90deg,rgba(133,139,140,1.0) 0px 5px,rgba(133,135,138,1.0) 5px 10px)"></div>
<div class="a" style="left:1091px;top:336px;width:98px;height:17px;background:#d3a39c"></div>
<div class="a" style="left:1095px;top:340.0px;width:45px;height:4.5px;background:linear-gradient(90deg,rgba(155,134,132,1.0) 0px 4px,rgba(164,128,127,1.0) 4px 8px,rgba(146,108,113,1.0) 8px 12px,rgba(120,86,89,1.0) 12px 16px,rgba(119,82,85,1.0) 16px 20px,rgba(133,102,107,1.0) 20px 24px,rgba(143,105,112,1.0) 24px 28px,rgba(135,114,110,1.0) 28px 32px,rgba(126,91,97,1.0) 32px 36px,rgba(153,112,114,1.0) 36px 40px,rgba(131,105,103,1.0) 40px 44px)"></div>
<div class="a" style="left:1095px;top:344.5px;width:45px;height:4.5px;background:linear-gradient(90deg,rgba(145,109,112,1.0) 0px 4px,rgba(133,103,107,1.0) 4px 8px,rgba(110,88,83,1.0) 8px 12px,rgba(154,114,114,1.0) 12px 16px,rgba(143,123,124,1.0) 16px 20px,rgba(137,96,103,1.0) 20px 24px,rgba(141,116,106,1.0) 24px 28px,rgba(109,87,82,1.0) 28px 32px,rgba(146,119,115,1.0) 32px 36px,rgba(151,121,123,1.0) 36px 40px,rgba(161,131,135,1.0) 40px 44px)"></div>
<div class="a" style="left:1142px;top:340.0px;width:43px;height:4.5px;background:linear-gradient(90deg,rgba(116,88,87,1.0) 0px 4px,rgba(130,104,96,1.0) 4px 8px,rgba(121,92,94,1.0) 8px 12px,rgba(129,102,98,1.0) 12px 16px,rgba(136,104,111,1.0) 16px 20px,rgba(142,101,105,1.0) 20px 24px,rgba(116,92,85,1.0) 24px 28px,rgba(116,87,78,1.0) 28px 32px,rgba(149,125,130,1.0) 32px 36px,rgba(140,112,113,1.0) 36px 40px,rgba(108,76,73,1.0) 40px 43px)"></div>
<div class="a" style="left:1142px;top:344.5px;width:43px;height:4.5px;background:linear-gradient(90deg,rgba(99,72,76,1.0) 0px 4px,rgba(149,117,107,1.0) 4px 8px,rgba(157,127,128,1.0) 8px 12px,rgba(132,95,103,1.0) 12px 16px,rgba(153,123,121,1.0) 16px 20px,rgba(143,115,112,1.0) 20px 24px,rgba(151,118,121,1.0) 24px 28px,rgba(149,118,127,1.0) 28px 32px,rgba(110,86,92,1.0) 32px 36px,rgba(115,75,80,1.0) 36px 40px,rgba(119,81,85,1.0) 40px 43px)"></div>
<div class="a" style="left:1192px;top:341.0px;width:35px;height:4.0px;background:linear-gradient(90deg,rgba(188,188,188,1.0) 0px 4px,rgba(165,170,167,1.0) 4px 8px,rgba(175,176,177,1.0) 8px 12px,rgba(149,151,152,1.0) 12px 16px,rgba(142,153,155,1.0) 16px 20px,rgba(174,176,173,1.0) 20px 24px,rgba(168,167,179,1.0) 24px 28px,rgba(172,172,175,1.0) 28px 32px,rgba(155,160,156,1.0) 32px 35px)"></div>
<div class="a" style="left:1192px;top:345.0px;width:35px;height:4.0px;background:linear-gradient(90deg,rgba(175,175,186,1.0) 0px 4px,rgba(172,171,181,1.0) 4px 8px,rgba(145,139,141,1.0) 8px 12px,rgba(192,183,185,1.0) 12px 16px,rgba(153,154,161,1.0) 16px 20px,rgba(144,151,151,1.0) 20px 24px,rgba(161,165,167,1.0) 24px 28px,rgba(150,155,164,1.0) 28px 32px,rgba(197,197,190,1.0) 32px 35px)"></div>
<div class="a" style="left:1228px;top:336px;width:82px;height:17px;background:#b8d39a"></div>
<div class="a" style="left:1232px;top:340.0px;width:74px;height:4.5px;background:linear-gradient(90deg,rgba(137,141,119,1.0) 0px 4px,rgba(127,145,116,1.0) 4px 8px,rgba(118,127,98,1.0) 8px 12px,rgba(124,139,114,1.0) 12px 16px,rgba(89,104,78,1.0) 16px 20px,rgba(90,103,78,1.0) 20px 24px,rgba(134,142,122,1.0) 24px 28px,rgba(117,137,112,1.0) 28px 32px,rgba(126,137,112,1.0) 32px 36px,rgba(124,139,124,1.0) 36px 40px,rgba(91,111,78,1.0) 40px 44px,rgba(131,140,116,1.0) 44px 48px,rgba(115,130,100,1.0) 48px 52px,rgba(108,123,95,1.0) 52px 56px,rgba(104,119,90,1.0) 56px 60px,rgba(128,144,120,1.0) 60px 64px,rgba(122,141,118,1.0) 64px 68px,rgba(81,103,73,1.0) 68px 72px)"></div>
<div class="a" style="left:1232px;top:344.5px;width:74px;height:4.5px;background:linear-gradient(90deg,rgba(122,134,112,1.0) 0px 4px,rgba(113,124,102,1.0) 4px 8px,rgba(131,155,125,1.0) 8px 12px,rgba(108,112,92,1.0) 12px 16px,rgba(99,116,87,1.0) 16px 20px,rgba(128,143,106,1.0) 20px 24px,rgba(99,124,96,1.0) 24px 28px,rgba(92,115,90,1.0) 28px 32px,rgba(124,141,111,1.0) 32px 36px,rgba(109,117,99,1.0) 36px 40px,rgba(121,141,110,1.0) 40px 44px,rgba(103,118,92,1.0) 44px 48px,rgba(97,117,83,1.0) 48px 52px,rgba(128,144,123,1.0) 52px 56px,rgba(96,116,94,1.0) 56px 60px,rgba(91,100,76,1.0) 60px 64px,rgba(114,136,115,1.0) 64px 68px,rgba(113,117,94,1.0) 68px 72px)"></div>
<div class="a" style="left:1311px;top:341.0px;width:22px;height:4.0px;background:linear-gradient(90deg,rgba(173,172,170,1.0) 0px 4px,rgba(177,179,182,1.0) 4px 8px,rgba(179,179,181,1.0) 8px 12px,rgba(152,153,165,1.0) 12px 16px,rgba(187,188,194,1.0) 16px 20px,rgba(180,181,189,1.0) 20px 22px)"></div>
<div class="a" style="left:1311px;top:345.0px;width:22px;height:4.0px;background:linear-gradient(90deg,rgba(174,175,174,1.0) 0px 4px,rgba(175,171,177,1.0) 4px 8px,rgba(186,191,182,1.0) 8px 12px,rgba(153,157,150,1.0) 12px 16px,rgba(165,169,172,1.0) 16px 20px,rgba(141,140,145,1.0) 20px 22px)"></div>
<div class="a" style="left:1334px;top:336px;width:95px;height:17px;background:#c9b8de"></div>
<div class="a" style="left:1338px;top:340.0px;width:80px;height:4.5px;background:linear-gradient(90deg,rgba(142,139,159,1.0) 0px 4px,rgba(116,119,131,1.0) 4px 8px,rgba(127,128,153,1.0) 8px 12px,rgba(145,133,155,1.0) 12px 16px,rgba(106,99,118,1.0) 16px 20px,rgba(124,118,138,1.0) 20px 24px,rgba(109,101,127,1.0) 24px 28px,rgba(135,124,152,1.0) 28px 32px,rgba(145,135,165,1.0) 32px 36px,rgba(108,104,128,1.0) 36px 40px,rgba(123,109,138,1.0) 40px 44px,rgba(137,128,153,1.0) 44px 48px,rgba(114,107,135,1.0) 48px 52px,rgba(115,108,132,1.0) 52px 56px,rgba(121,124,136,1.0) 56px 60px,rgba(106,109,125,1.0) 60px 64px,rgba(155,149,171,1.0) 64px 68px,rgba(129,125,146,1.0) 68px 72px,rgba(131,114,137,1.0) 72px 76px,rgba(153,141,166,1.0) 76px 80px)"></div>
<div class="a" style="left:1338px;top:344.5px;width:80px;height:4.5px;background:linear-gradient(90deg,rgba(143,143,161,1.0) 0px 4px,rgba(112,105,125,1.0) 4px 8px,rgba(121,111,135,1.0) 8px 12px,rgba(135,126,151,1.0) 12px 16px,rgba(126,111,139,1.0) 16px 20px,rgba(106,105,117,1.0) 20px 24px,rgba(103,99,117,1.0) 24px 28px,rgba(143,144,155,1.0) 28px 32px,rgba(155,144,169,1.0) 32px 36px,rgba(110,96,122,1.0) 36px 40px,rgba(125,118,142,1.0) 40px 44px,rgba(116,106,123,1.0) 44px 48px,rgba(123,126,135,1.0) 48px 52px,rgba(121,112,133,1.0) 52px 56px,rgba(115,105,127,1.0) 56px 60px,rgba(131,123,142,1.0) 60px 64px,rgba(104,104,119,1.0) 64px 68px,rgba(132,117,139,1.0) 68px 72px,rgba(131,130,152,1.0) 72px 76px,rgba(130,126,152,1.0) 76px 80px)"></div>
<div class="t" style="left:1419px;top:340.19px;font-size:11px;color:#222;font-weight:normal;">P</div>
<div class="t" style="left:1071.5px;top:378.69px;font-size:11px;color:#222;font-weight:normal;">=</div>
<div class="a" style="left:1080px;top:380.0px;width:300px;height:8.0px;background:linear-gradient(90deg,rgba(184,186,186,1.0) 0px 8px,rgba(192,191,190,1.0) 8px 16px,rgba(182,190,183,1.0) 16px 24px,rgba(200,198,199,1.0) 24px 32px,rgba(187,192,192,1.0) 32px 40px,rgba(199,197,210,1.0) 40px 48px,rgba(191,199,191,1.0) 48px 56px,rgba(211,207,206,1.0) 56px 64px,rgba(205,210,205,1.0) 64px 72px,rgba(208,206,211,1.0) 72px 80px,rgba(198,204,203,1.0) 80px 88px,rgba(197,190,192,1.0) 88px 96px,rgba(190,194,187,1.0) 96px 104px,rgba(185,191,185,1.0) 104px 112px,rgba(185,187,185,1.0) 112px 120px,rgba(190,191,192,1.0) 120px 128px,rgba(192,187,188,1.0) 128px 136px,rgba(172,182,184,1.0) 136px 144px,rgba(210,215,206,1.0) 144px 152px,rgba(216,209,211,1.0) 152px 160px,rgba(199,196,192,1.0) 160px 168px,rgba(177,183,180,1.0) 168px 176px,rgba(189,183,184,1.0) 176px 184px,rgba(191,187,184,1.0) 184px 192px,rgba(192,186,192,1.0) 192px 200px,rgba(176,179,180,1.0) 200px 208px,rgba(205,205,211,1.0) 208px 216px,rgba(191,198,199,1.0) 216px 224px,rgba(204,207,197,1.0) 224px 232px,rgba(190,200,198,1.0) 232px 240px,rgba(207,199,209,1.0) 240px 248px,rgba(207,205,210,1.0) 248px 256px,rgba(179,185,180,1.0) 256px 264px,rgba(182,185,187,1.0) 264px 272px,rgba(206,206,209,1.0) 272px 280px,rgba(187,183,194,1.0) 280px 288px,rgba(214,215,212,1.0) 288px 296px,rgba(200,204,202,1.0) 296px 300px)"></div>
<div class="a" style="left:1071.5px;top:411.5px;width:51px;height:16.5px;background:#c9a37c"></div>
<div class="t" style="left:1073px;top:415.19px;font-size:11px;color:#222;font-weight:normal;">1</div>
<div class="a" style="left:1080px;top:415.0px;width:42px;height:4.5px;background:linear-gradient(90deg,rgba(166,134,113,1.0) 0px 4px,rgba(133,103,80,1.0) 4px 8px,rgba(163,125,97,1.0) 8px 12px,rgba(127,102,73,1.0) 12px 16px,rgba(162,126,101,1.0) 16px 20px,rgba(138,107,80,1.0) 20px 24px,rgba(172,138,111,1.0) 24px 28px,rgba(165,140,110,1.0) 28px 32px,rgba(166,135,102,1.0) 32px 36px,rgba(144,126,94,1.0) 36px 40px)"></div>
<div class="a" style="left:1080px;top:419.5px;width:42px;height:4.5px;background:linear-gradient(90deg,rgba(146,113,90,1.0) 0px 4px,rgba(170,143,121,1.0) 4px 8px,rgba(145,117,84,1.0) 8px 12px,rgba(147,111,94,1.0) 12px 16px,rgba(144,117,96,1.0) 16px 20px,rgba(159,134,105,1.0) 20px 24px,rgba(154,123,102,1.0) 24px 28px,rgba(149,124,101,1.0) 28px 32px,rgba(123,92,71,1.0) 32px 36px,rgba(156,121,99,1.0) 36px 40px)"></div>
<div class="a" style="left:1124px;top:414.0px;width:210px;height:3.67px;background:linear-gradient(90deg,rgba(208,200,209,1.0) 0px 5px,rgba(196,200,200,1.0) 5px 10px,rgba(199,204,199,1.0) 10px 15px,rgba(220,220,224,1.0) 15px 20px,rgba(211,207,207,1.0) 20px 25px,rgba(198,197,194,1.0) 25px 30px,rgba(191,198,195,1.0) 30px 35px,rgba(222,223,224,1.0) 35px 40px,rgba(199,198,209,1.0) 40px 45px,rgba(212,209,208,1.0) 45px 50px,rgba(207,209,214,1.0) 50px 55px,rgba(224,221,225,1.0) 55px 60px,rgba(195,200,206,1.0) 60px 65px,rgba(199,200,199,1.0) 65px 70px,rgba(200,200,200,1.0) 70px 75px,rgba(206,208,209,1.0) 75px 80px,rgba(206,206,207,1.0) 80px 85px,rgba(198,192,200,1.0) 85px 90px,rgba(202,204,210,1.0) 90px 95px,rgba(222,223,222,1.0) 95px 100px,rgba(198,199,198,1.0) 100px 105px,rgba(198,200,209,1.0) 105px 110px,rgba(211,207,212,1.0) 110px 115px,rgba(195,203,204,1.0) 115px 120px,rgba(207,205,214,1.0) 120px 125px,rgba(199,206,204,1.0) 125px 130px,rgba(206,197,204,1.0) 130px 135px,rgba(222,225,222,1.0) 135px 140px,rgba(210,203,212,1.0) 140px 145px,rgba(197,201,197,1.0) 145px 150px,rgba(208,209,207,1.0) 150px 155px,rgba(222,226,225,1.0) 155px 160px,rgba(206,207,201,1.0) 160px 165px,rgba(192,191,200,1.0) 165px 170px,rgba(206,207,202,1.0) 170px 175px,rgba(195,198,194,1.0) 175px 180px,rgba(223,226,226,1.0) 180px 185px,rgba(204,204,199,1.0) 185px 190px,rgba(199,203,202,1.0) 190px 195px,rgba(206,200,202,1.0) 195px 200px,rgba(199,201,204,1.0) 200px 205px,rgba(199,203,201,1.0) 205px 210px)"></div>
<div class="a" style="left:1124px;top:417.67px;width:210px;height:3.67px;background:linear-gradient(90deg,rgba(156,155,154,1.0) 0px 5px,rgba(175,172,173,1.0) 5px 10px,rgba(182,190,183,1.0) 10px 15px,rgba(223,224,223,1.0) 15px 20px,rgba(184,182,189,1.0) 20px 25px,rgba(173,167,172,1.0) 25px 30px,rgba(163,157,160,1.0) 30px 35px,rgba(220,222,224,1.0) 35px 40px,rgba(208,205,212,1.0) 40px 45px,rgba(197,201,205,1.0) 45px 50px,rgba(179,179,185,1.0) 50px 55px,rgba(225,223,223,1.0) 55px 60px,rgba(178,173,185,1.0) 60px 65px,rgba(192,194,190,1.0) 65px 70px,rgba(188,195,193,1.0) 70px 75px,rgba(156,155,161,1.0) 75px 80px,rgba(179,177,181,1.0) 80px 85px,rgba(156,159,163,1.0) 85px 90px,rgba(176,181,181,1.0) 90px 95px,rgba(224,222,225,1.0) 95px 100px,rgba(188,178,182,1.0) 100px 105px,rgba(172,172,171,1.0) 105px 110px,rgba(200,204,201,1.0) 110px 115px,rgba(161,155,165,1.0) 115px 120px,rgba(173,171,178,1.0) 120px 125px,rgba(162,158,165,1.0) 125px 130px,rgba(165,160,166,1.0) 130px 135px,rgba(221,220,225,1.0) 135px 140px,rgba(189,181,188,1.0) 140px 145px,rgba(190,190,194,1.0) 145px 150px,rgba(157,152,149,1.0) 150px 155px,rgba(226,220,222,1.0) 155px 160px,rgba(200,197,192,1.0) 160px 165px,rgba(206,208,206,1.0) 165px 170px,rgba(181,191,184,1.0) 170px 175px,rgba(158,163,171,1.0) 175px 180px,rgba(224,224,222,1.0) 180px 185px,rgba(209,207,210,1.0) 185px 190px,rgba(162,156,162,1.0) 190px 195px,rgba(183,184,187,1.0) 195px 200px,rgba(189,185,181,1.0) 200px 205px,rgba(146,146,150,1.0) 205px 210px)"></div>
<div class="a" style="left:1124px;top:421.33px;width:210px;height:3.67px;background:linear-gradient(90deg,rgba(212,211,214,1.0) 0px 5px,rgba(199,205,208,1.0) 5px 10px,rgba(212,202,215,1.0) 10px 15px,rgba(226,224,222,1.0) 15px 20px,rgba(210,202,207,1.0) 20px 25px,rgba(197,195,202,1.0) 25px 30px,rgba(195,203,198,1.0) 30px 35px,rgba(222,221,223,1.0) 35px 40px,rgba(199,193,196,1.0) 40px 45px,rgba(203,206,212,1.0) 45px 50px,rgba(210,203,215,1.0) 50px 55px,rgba(221,221,221,1.0) 55px 60px,rgba(205,212,208,1.0) 60px 65px,rgba(194,201,201,1.0) 65px 70px,rgba(200,195,201,1.0) 70px 75px,rgba(205,207,217,1.0) 75px 80px,rgba(202,203,204,1.0) 80px 85px,rgba(203,201,206,1.0) 85px 90px,rgba(213,209,205,1.0) 90px 95px,rgba(226,226,221,1.0) 95px 100px,rgba(203,203,209,1.0) 100px 105px,rgba(194,192,199,1.0) 105px 110px,rgba(199,196,195,1.0) 110px 115px,rgba(201,199,201,1.0) 115px 120px,rgba(201,192,195,1.0) 120px 125px,rgba(195,198,196,1.0) 125px 130px,rgba(195,199,199,1.0) 130px 135px,rgba(222,221,223,1.0) 135px 140px,rgba(207,213,206,1.0) 140px 145px,rgba(205,195,199,1.0) 145px 150px,rgba(198,197,202,1.0) 150px 155px,rgba(222,224,226,1.0) 155px 160px,rgba(201,207,209,1.0) 160px 165px,rgba(201,201,195,1.0) 165px 170px,rgba(204,204,205,1.0) 170px 175px,rgba(203,203,210,1.0) 175px 180px,rgba(224,221,222,1.0) 180px 185px,rgba(211,212,210,1.0) 185px 190px,rgba(204,207,202,1.0) 190px 195px,rgba(215,208,216,1.0) 195px 200px,rgba(209,211,210,1.0) 200px 205px,rgba(194,197,203,1.0) 205px 210px)"></div>
<div class="a" style="left:1334px;top:411.5px;width:31px;height:16.5px;background:#d5a5d5"></div>
<div class="a" style="left:1337px;top:415.0px;width:25px;height:4.5px;background:linear-gradient(90deg,rgba(169,118,178,1.0) 0px 4px,rgba(151,99,142,1.0) 4px 8px,rgba(172,129,180,1.0) 8px 12px,rgba(158,118,169,1.0) 12px 16px,rgba(172,124,170,1.0) 16px 20px,rgba(169,109,169,1.0) 20px 24px)"></div>
<div class="a" style="left:1337px;top:419.5px;width:25px;height:4.5px;background:linear-gradient(90deg,rgba(157,98,150,1.0) 0px 4px,rgba(156,97,147,1.0) 4px 8px,rgba(174,131,177,1.0) 8px 12px,rgba(156,104,164,1.0) 12px 16px,rgba(154,106,157,1.0) 16px 20px,rgba(153,98,146,1.0) 20px 24px)"></div>
<div class="t" style="left:1071.5px;top:452.19px;font-size:11px;color:#222;font-weight:normal;">L</div>
<div class="a" style="left:1079px;top:452.0px;width:313px;height:4.0px;background:linear-gradient(90deg,rgba(201,211,215,1.0) 0px 5px,rgba(208,211,213,1.0) 5px 10px,rgba(206,208,208,1.0) 10px 15px,rgba(202,204,199,1.0) 15px 20px,rgba(214,208,220,1.0) 20px 25px,rgba(222,224,222,1.0) 25px 30px,rgba(196,200,208,1.0) 30px 35px,rgba(216,212,221,1.0) 35px 40px,rgba(208,202,211,1.0) 40px 45px,rgba(218,215,214,1.0) 45px 50px,rgba(213,213,215,1.0) 50px 55px,rgba(197,198,212,1.0) 55px 60px,rgba(193,202,205,1.0) 60px 65px,rgba(210,217,211,1.0) 65px 70px,rgba(220,213,214,1.0) 70px 75px,rgba(227,223,226,1.0) 75px 80px,rgba(211,216,219,1.0) 80px 85px,rgba(211,209,206,1.0) 85px 90px,rgba(201,194,201,1.0) 90px 95px,rgba(209,207,216,1.0) 95px 100px,rgba(218,218,220,1.0) 100px 105px,rgba(212,204,217,1.0) 105px 110px,rgba(203,207,208,1.0) 110px 115px,rgba(209,214,208,1.0) 115px 120px,rgba(219,220,219,1.0) 120px 125px,rgba(196,202,199,1.0) 125px 130px,rgba(227,226,222,1.0) 130px 135px,rgba(214,213,213,1.0) 135px 140px,rgba(205,205,209,1.0) 140px 145px,rgba(208,215,212,1.0) 145px 150px,rgba(204,212,216,1.0) 150px 155px,rgba(216,213,212,1.0) 155px 160px,rgba(226,222,221,1.0) 160px 165px,rgba(219,215,213,1.0) 165px 170px,rgba(208,201,202,1.0) 170px 175px,rgba(210,210,207,1.0) 175px 180px,rgba(206,197,207,1.0) 180px 185px,rgba(214,204,215,1.0) 185px 190px,rgba(210,208,216,1.0) 190px 195px,rgba(204,202,215,1.0) 195px 200px,rgba(223,221,223,1.0) 200px 205px,rgba(209,206,209,1.0) 205px 210px,rgba(197,196,197,1.0) 210px 215px,rgba(202,196,200,1.0) 215px 220px,rgba(203,203,208,1.0) 220px 225px,rgba(202,200,209,1.0) 225px 230px,rgba(221,221,221,1.0) 230px 235px,rgba(217,212,209,1.0) 235px 240px,rgba(207,205,203,1.0) 240px 245px,rgba(214,211,213,1.0) 245px 250px,rgba(224,222,227,1.0) 250px 255px,rgba(215,210,218,1.0) 255px 260px,rgba(215,209,218,1.0) 260px 265px,rgba(204,197,198,1.0) 265px 270px,rgba(213,202,205,1.0) 270px 275px,rgba(202,204,208,1.0) 275px 280px,rgba(209,207,212,1.0) 280px 285px,rgba(201,212,214,1.0) 285px 290px,rgba(206,204,203,1.0) 290px 295px,rgba(224,222,226,1.0) 295px 300px,rgba(203,201,206,1.0) 300px 305px,rgba(210,207,209,1.0) 305px 310px,rgba(195,195,199,1.0) 310px 313px)"></div>
<div class="a" style="left:1079px;top:456.0px;width:313px;height:4.0px;background:linear-gradient(90deg,rgba(192,195,202,1.0) 0px 5px,rgba(202,206,200,1.0) 5px 10px,rgba(188,188,192,1.0) 10px 15px,rgba(153,162,157,1.0) 15px 20px,rgba(163,168,174,1.0) 20px 25px,rgba(224,221,221,1.0) 25px 30px,rgba(204,200,203,1.0) 30px 35px,rgba(188,188,200,1.0) 35px 40px,rgba(212,208,213,1.0) 40px 45px,rgba(160,150,161,1.0) 45px 50px,rgba(199,195,204,1.0) 50px 55px,rgba(152,144,156,1.0) 55px 60px,rgba(168,166,165,1.0) 60px 65px,rgba(209,206,210,1.0) 65px 70px,rgba(194,188,195,1.0) 70px 75px,rgba(221,225,223,1.0) 75px 80px,rgba(214,213,218,1.0) 80px 85px,rgba(166,169,172,1.0) 85px 90px,rgba(163,163,154,1.0) 90px 95px,rgba(192,193,190,1.0) 95px 100px,rgba(199,201,207,1.0) 100px 105px,rgba(162,163,169,1.0) 105px 110px,rgba(147,147,157,1.0) 110px 115px,rgba(209,199,203,1.0) 115px 120px,rgba(196,197,197,1.0) 120px 125px,rgba(195,190,199,1.0) 125px 130px,rgba(224,224,223,1.0) 130px 135px,rgba(158,157,161,1.0) 135px 140px,rgba(222,212,217,1.0) 140px 145px,rgba(183,174,179,1.0) 145px 150px,rgba(218,212,222,1.0) 150px 155px,rgba(206,211,213,1.0) 155px 160px,rgba(222,225,225,1.0) 160px 165px,rgba(166,163,167,1.0) 165px 170px,rgba(157,161,155,1.0) 170px 175px,rgba(199,205,208,1.0) 175px 180px,rgba(216,217,209,1.0) 180px 185px,rgba(207,213,219,1.0) 185px 190px,rgba(199,193,197,1.0) 190px 195px,rgba(213,202,206,1.0) 195px 200px,rgba(223,227,225,1.0) 200px 205px,rgba(154,151,151,1.0) 205px 210px,rgba(188,188,202,1.0) 210px 215px,rgba(175,172,172,1.0) 215px 220px,rgba(164,159,170,1.0) 220px 225px,rgba(175,167,180,1.0) 225px 230px,rgba(227,223,222,1.0) 230px 235px,rgba(198,192,202,1.0) 235px 240px,rgba(146,143,148,1.0) 240px 245px,rgba(196,199,199,1.0) 245px 250px,rgba(223,226,224,1.0) 250px 255px,rgba(155,151,150,1.0) 255px 260px,rgba(194,191,201,1.0) 260px 265px,rgba(155,165,161,1.0) 265px 270px,rgba(178,176,187,1.0) 270px 275px,rgba(198,207,208,1.0) 275px 280px,rgba(167,155,165,1.0) 280px 285px,rgba(156,167,162,1.0) 285px 290px,rgba(166,172,171,1.0) 290px 295px,rgba(227,226,226,1.0) 295px 300px,rgba(191,198,196,1.0) 300px 305px,rgba(220,221,224,1.0) 305px 310px,rgba(182,175,178,1.0) 310px 313px)"></div>
<div class="a" style="left:1079px;top:460.0px;width:313px;height:4.0px;background:linear-gradient(90deg,rgba(199,204,208,1.0) 0px 5px,rgba(206,218,209,1.0) 5px 10px,rgba(208,215,219,1.0) 10px 15px,rgba(207,202,214,1.0) 15px 20px,rgba(210,207,216,1.0) 20px 25px,rgba(225,221,223,1.0) 25px 30px,rgba(204,199,203,1.0) 30px 35px,rgba(211,211,205,1.0) 35px 40px,rgba(199,202,211,1.0) 40px 45px,rgba(210,214,215,1.0) 45px 50px,rgba(205,205,203,1.0) 50px 55px,rgba(205,203,204,1.0) 55px 60px,rgba(196,199,206,1.0) 60px 65px,rgba(218,210,222,1.0) 65px 70px,rgba(205,207,208,1.0) 70px 75px,rgba(221,225,223,1.0) 75px 80px,rgba(207,207,209,1.0) 80px 85px,rgba(213,202,213,1.0) 85px 90px,rgba(207,216,213,1.0) 90px 95px,rgba(209,216,211,1.0) 95px 100px,rgba(207,197,208,1.0) 100px 105px,rgba(210,218,214,1.0) 105px 110px,rgba(206,208,204,1.0) 110px 115px,rgba(205,208,206,1.0) 115px 120px,rgba(196,207,204,1.0) 120px 125px,rgba(208,203,207,1.0) 125px 130px,rgba(223,222,227,1.0) 130px 135px,rgba(200,197,200,1.0) 135px 140px,rgba(197,207,207,1.0) 140px 145px,rgba(208,207,213,1.0) 145px 150px,rgba(196,203,198,1.0) 150px 155px,rgba(205,212,208,1.0) 155px 160px,rgba(223,226,225,1.0) 160px 165px,rgba(220,215,214,1.0) 165px 170px,rgba(207,199,210,1.0) 170px 175px,rgba(203,208,207,1.0) 175px 180px,rgba(210,217,219,1.0) 180px 185px,rgba(213,203,212,1.0) 185px 190px,rgba(197,199,202,1.0) 190px 195px,rgba(210,222,215,1.0) 195px 200px,rgba(226,223,222,1.0) 200px 205px,rgba(212,209,218,1.0) 205px 210px,rgba(207,213,211,1.0) 210px 215px,rgba(217,208,213,1.0) 215px 220px,rgba(206,195,200,1.0) 220px 225px,rgba(208,208,222,1.0) 225px 230px,rgba(227,225,223,1.0) 230px 235px,rgba(202,205,209,1.0) 235px 240px,rgba(219,209,222,1.0) 240px 245px,rgba(196,199,204,1.0) 245px 250px,rgba(223,227,226,1.0) 250px 255px,rgba(219,216,218,1.0) 255px 260px,rgba(199,197,206,1.0) 260px 265px,rgba(209,218,220,1.0) 265px 270px,rgba(208,203,208,1.0) 270px 275px,rgba(205,208,204,1.0) 275px 280px,rgba(214,218,222,1.0) 280px 285px,rgba(195,201,207,1.0) 285px 290px,rgba(198,197,199,1.0) 290px 295px,rgba(222,222,222,1.0) 295px 300px,rgba(221,210,217,1.0) 300px 305px,rgba(204,203,209,1.0) 305px 310px,rgba(211,210,213,1.0) 310px 313px)"></div>
<div class="t" id="w40" style="left:1264.5px;top:490.19px;font-size:11px;color:#222;font-weight:normal;transform:scaleX(0.8327);transform-origin:left;">EN DECKER.</div>
<div class="t" id="w41" style="left:1264.5px;top:528.19px;font-size:11px;color:#222;font-weight:normal;transform:scaleX(0.9392);transform-origin:left;">OMBINE 1 X 60MTS/SWL)</div>
<div class="t" id="w42" style="left:1071.5px;top:640.69px;font-size:11px;color:#222;font-weight:normal;transform:scaleX(0.9032);transform-origin:left;">** SEEKING CGOS FOR JAPAN – P.G RANGE (VOY’ / TCT OK)</div>
<div class="t" style="left:1068px;top:719.69px;font-size:11px;color:#222;font-weight:normal;">M</div>
<div class="a" style="left:1077px;top:719.0px;width:279px;height:3.67px;background:linear-gradient(90deg,rgba(206,209,211,1.0) 0px 5px,rgba(203,205,203,1.0) 5px 10px,rgba(214,223,227,1.0) 10px 15px,rgba(208,216,211,1.0) 15px 20px,rgba(221,210,211,1.0) 20px 25px,rgba(250,247,246,1.0) 25px 30px,rgba(223,223,220,1.0) 30px 35px,rgba(211,216,214,1.0) 35px 40px,rgba(211,220,223,1.0) 40px 45px,rgba(216,208,215,1.0) 45px 50px,rgba(210,210,208,1.0) 50px 55px,rgba(217,211,214,1.0) 55px 60px,rgba(247,248,252,1.0) 60px 65px,rgba(218,227,230,1.0) 65px 70px,rgba(219,230,230,1.0) 70px 75px,rgba(219,214,211,1.0) 75px 80px,rgba(213,210,212,1.0) 80px 85px,rgba(217,217,212,1.0) 85px 90px,rgba(221,217,223,1.0) 90px 95px,rgba(214,214,218,1.0) 95px 100px,rgba(247,248,252,1.0) 100px 105px,rgba(220,214,216,1.0) 105px 110px,rgba(218,224,229,1.0) 110px 115px,rgba(215,220,214,1.0) 115px 120px,rgba(214,214,213,1.0) 120px 125px,rgba(204,211,209,1.0) 125px 130px,rgba(213,218,219,1.0) 130px 135px,rgba(215,221,214,1.0) 135px 140px,rgba(216,210,207,1.0) 140px 145px,rgba(213,217,215,1.0) 145px 150px,rgba(212,202,216,1.0) 150px 155px,rgba(246,247,246,1.0) 155px 160px,rgba(214,212,220,1.0) 160px 165px,rgba(207,218,210,1.0) 165px 170px,rgba(223,219,216,1.0) 170px 175px,rgba(249,248,251,1.0) 175px 180px,rgba(213,208,219,1.0) 180px 185px,rgba(206,215,215,1.0) 185px 190px,rgba(218,220,228,1.0) 190px 195px,rgba(213,210,217,1.0) 195px 200px,rgba(223,212,214,1.0) 200px 205px,rgba(204,204,206,1.0) 205px 210px,rgba(216,222,222,1.0) 210px 215px,rgba(246,247,247,1.0) 215px 220px,rgba(220,228,231,1.0) 220px 225px,rgba(226,219,228,1.0) 225px 230px,rgba(213,207,213,1.0) 230px 235px,rgba(208,216,208,1.0) 235px 240px,rgba(212,203,203,1.0) 240px 245px,rgba(206,203,204,1.0) 245px 250px,rgba(214,206,214,1.0) 250px 255px,rgba(210,206,213,1.0) 255px 260px,rgba(226,223,226,1.0) 260px 265px,rgba(209,206,214,1.0) 265px 270px,rgba(220,220,215,1.0) 270px 275px,rgba(215,214,219,1.0) 275px 279px)"></div>
<div class="a" style="left:1077px;top:722.67px;width:279px;height:3.67px;background:linear-gradient(90deg,rgba(208,204,210,1.0) 0px 5px,rgba(204,210,202,1.0) 5px 10px,rgba(152,158,159,1.0) 10px 15px,rgba(192,190,194,1.0) 15px 20px,rgba(200,200,209,1.0) 20px 25px,rgba(246,246,252,1.0) 25px 30px,rgba(164,153,161,1.0) 30px 35px,rgba(200,200,199,1.0) 35px 40px,rgba(229,224,228,1.0) 40px 45px,rgba(156,160,161,1.0) 45px 50px,rgba(217,214,220,1.0) 50px 55px,rgba(224,221,230,1.0) 55px 60px,rgba(252,251,252,1.0) 60px 65px,rgba(202,208,200,1.0) 65px 70px,rgba(207,203,210,1.0) 70px 75px,rgba(191,200,204,1.0) 75px 80px,rgba(228,221,229,1.0) 80px 85px,rgba(186,189,195,1.0) 85px 90px,rgba(201,202,202,1.0) 90px 95px,rgba(179,178,191,1.0) 95px 100px,rgba(250,248,250,1.0) 100px 105px,rgba(183,177,182,1.0) 105px 110px,rgba(189,181,183,1.0) 110px 115px,rgba(209,217,219,1.0) 115px 120px,rgba(159,160,161,1.0) 120px 125px,rgba(204,209,207,1.0) 125px 130px,rgba(187,182,188,1.0) 130px 135px,rgba(204,206,204,1.0) 135px 140px,rgba(219,222,227,1.0) 140px 145px,rgba(164,166,166,1.0) 145px 150px,rgba(217,207,215,1.0) 150px 155px,rgba(251,249,251,1.0) 155px 160px,rgba(183,179,175,1.0) 160px 165px,rgba(159,151,156,1.0) 165px 170px,rgba(219,221,216,1.0) 170px 175px,rgba(250,248,250,1.0) 175px 180px,rgba(204,198,198,1.0) 180px 185px,rgba(159,154,153,1.0) 185px 190px,rgba(182,191,186,1.0) 190px 195px,rgba(199,196,194,1.0) 195px 200px,rgba(194,193,196,1.0) 200px 205px,rgba(206,213,217,1.0) 205px 210px,rgba(213,215,216,1.0) 210px 215px,rgba(249,252,248,1.0) 215px 220px,rgba(196,207,205,1.0) 220px 225px,rgba(202,197,210,1.0) 225px 230px,rgba(192,192,198,1.0) 230px 235px,rgba(186,184,189,1.0) 235px 240px,rgba(174,168,178,1.0) 240px 245px,rgba(197,206,201,1.0) 245px 250px,rgba(192,192,205,1.0) 250px 255px,rgba(212,212,216,1.0) 255px 260px,rgba(209,212,216,1.0) 260px 265px,rgba(153,161,163,1.0) 265px 270px,rgba(215,219,216,1.0) 270px 275px,rgba(209,204,205,1.0) 275px 279px)"></div>
<div class="a" style="left:1077px;top:726.33px;width:279px;height:3.67px;background:linear-gradient(90deg,rgba(217,218,215,1.0) 0px 5px,rgba(228,216,228,1.0) 5px 10px,rgba(215,207,212,1.0) 10px 15px,rgba(218,228,224,1.0) 15px 20px,rgba(223,230,226,1.0) 20px 25px,rgba(252,249,246,1.0) 25px 30px,rgba(216,214,224,1.0) 30px 35px,rgba(219,225,221,1.0) 35px 40px,rgba(214,212,207,1.0) 40px 45px,rgba(217,211,215,1.0) 45px 50px,rgba(223,226,228,1.0) 50px 55px,rgba(219,212,218,1.0) 55px 60px,rgba(252,246,252,1.0) 60px 65px,rgba(214,214,214,1.0) 65px 70px,rgba(216,218,226,1.0) 70px 75px,rgba(209,205,204,1.0) 75px 80px,rgba(209,207,215,1.0) 80px 85px,rgba(210,208,212,1.0) 85px 90px,rgba(220,210,216,1.0) 90px 95px,rgba(205,208,216,1.0) 95px 100px,rgba(249,252,250,1.0) 100px 105px,rgba(206,205,206,1.0) 105px 110px,rgba(218,223,227,1.0) 110px 115px,rgba(214,217,216,1.0) 115px 120px,rgba(214,221,216,1.0) 120px 125px,rgba(213,217,216,1.0) 125px 130px,rgba(226,220,217,1.0) 130px 135px,rgba(218,223,228,1.0) 135px 140px,rgba(204,208,209,1.0) 140px 145px,rgba(215,214,224,1.0) 145px 150px,rgba(217,214,216,1.0) 150px 155px,rgba(249,249,251,1.0) 155px 160px,rgba(214,214,213,1.0) 160px 165px,rgba(213,217,210,1.0) 165px 170px,rgba(217,216,226,1.0) 170px 175px,rgba(249,247,246,1.0) 175px 180px,rgba(215,211,220,1.0) 180px 185px,rgba(214,205,212,1.0) 185px 190px,rgba(210,220,221,1.0) 190px 195px,rgba(213,206,214,1.0) 195px 200px,rgba(215,224,215,1.0) 200px 205px,rgba(221,218,227,1.0) 205px 210px,rgba(213,209,214,1.0) 210px 215px,rgba(249,247,252,1.0) 215px 220px,rgba(226,217,217,1.0) 220px 225px,rgba(215,212,222,1.0) 225px 230px,rgba(213,216,211,1.0) 230px 235px,rgba(213,213,216,1.0) 235px 240px,rgba(221,220,232,1.0) 240px 245px,rgba(210,204,211,1.0) 245px 250px,rgba(209,217,213,1.0) 250px 255px,rgba(214,212,217,1.0) 255px 260px,rgba(216,220,217,1.0) 260px 265px,rgba(213,212,219,1.0) 265px 270px,rgba(210,209,216,1.0) 270px 275px,rgba(221,214,223,1.0) 275px 279px)"></div>
<div class="t" id="w43" style="left:1356px;top:719.69px;font-size:11px;color:#222;font-weight:normal;transform:scaleX(0.8983);transform-origin:left;">D/A 26TH – 30TH</div>
<div class="t" style="left:1068px;top:739.19px;font-size:11px;color:#222;font-weight:normal;">S</div>
<div class="a" style="left:1076px;top:740.0px;width:10px;height:4.5px;background:linear-gradient(90deg,rgba(190,183,188,1.0) 0px 4px,rgba(185,180,194,1.0) 4px 8px)"></div>
<div class="a" style="left:1076px;top:744.5px;width:10px;height:4.5px;background:linear-gradient(90deg,rgba(206,200,204,1.0) 0px 4px,rgba(184,184,191,1.0) 4px 8px)"></div>
<div class="t" style="left:1068px;top:776.69px;font-size:11px;color:#333;font-weight:normal;">=</div>
<div class="a" style="left:1074px;top:778.0px;width:282px;height:8.0px;background:linear-gradient(90deg,rgba(205,209,200,1.0) 0px 8px,rgba(187,192,191,1.0) 8px 16px,rgba(215,206,214,1.0) 16px 24px,rgba(212,208,219,1.0) 24px 32px,rgba(199,198,205,1.0) 32px 40px,rgba(187,195,191,1.0) 40px 48px,rgba(182,185,187,1.0) 48px 56px,rgba(200,196,200,1.0) 56px 64px,rgba(207,204,205,1.0) 64px 72px,rgba(208,216,207,1.0) 72px 80px,rgba(210,209,205,1.0) 80px 88px,rgba(210,203,216,1.0) 88px 96px,rgba(193,190,193,1.0) 96px 104px,rgba(180,180,190,1.0) 104px 112px,rgba(198,203,209,1.0) 112px 120px,rgba(203,207,212,1.0) 120px 128px,rgba(210,206,212,1.0) 128px 136px,rgba(212,213,206,1.0) 136px 144px,rgba(192,200,193,1.0) 144px 152px,rgba(189,199,198,1.0) 152px 160px,rgba(190,192,191,1.0) 160px 168px,rgba(185,183,186,1.0) 168px 176px,rgba(198,202,204,1.0) 176px 184px,rgba(187,189,187,1.0) 184px 192px,rgba(193,192,186,1.0) 192px 200px,rgba(199,200,200,1.0) 200px 208px,rgba(194,196,193,1.0) 208px 216px,rgba(186,194,193,1.0) 216px 224px,rgba(198,196,197,1.0) 224px 232px,rgba(182,189,196,1.0) 232px 240px,rgba(215,213,209,1.0) 240px 248px,rgba(212,204,204,1.0) 248px 256px,rgba(205,205,209,1.0) 256px 264px,rgba(185,185,190,1.0) 264px 272px,rgba(196,199,206,1.0) 272px 280px)"></div>
<div class="t" id="w44" style="left:1356px;top:776.69px;font-size:11px;color:#333;font-weight:normal;transform:scaleX(0.9726);transform-origin:left;">====</div>
<div class="t" style="left:1068px;top:794.69px;font-size:11px;color:#333;font-weight:normal;">B</div>
<div class="a" style="left:1076px;top:794.0px;width:276px;height:3.67px;background:linear-gradient(90deg,rgba(212,215,223,1.0) 0px 5px,rgba(211,212,210,1.0) 5px 10px,rgba(222,215,215,1.0) 10px 15px,rgba(248,249,252,1.0) 15px 20px,rgba(209,210,223,1.0) 20px 25px,rgba(205,214,213,1.0) 25px 30px,rgba(210,220,215,1.0) 30px 35px,rgba(213,213,215,1.0) 35px 40px,rgba(251,248,251,1.0) 40px 45px,rgba(214,226,223,1.0) 45px 50px,rgba(223,224,230,1.0) 50px 55px,rgba(205,216,215,1.0) 55px 60px,rgba(217,224,216,1.0) 60px 65px,rgba(218,212,209,1.0) 65px 70px,rgba(214,207,219,1.0) 70px 75px,rgba(249,251,252,1.0) 75px 80px,rgba(217,219,228,1.0) 80px 85px,rgba(202,213,211,1.0) 85px 90px,rgba(214,214,220,1.0) 90px 95px,rgba(220,227,227,1.0) 95px 100px,rgba(227,227,220,1.0) 100px 105px,rgba(226,226,228,1.0) 105px 110px,rgba(248,252,252,1.0) 110px 115px,rgba(207,207,215,1.0) 115px 120px,rgba(220,215,221,1.0) 120px 125px,rgba(221,225,229,1.0) 125px 130px,rgba(220,218,220,1.0) 130px 135px,rgba(211,211,208,1.0) 135px 140px,rgba(214,214,218,1.0) 140px 145px,rgba(248,251,250,1.0) 145px 150px,rgba(222,214,212,1.0) 150px 155px,rgba(209,211,204,1.0) 155px 160px,rgba(223,218,219,1.0) 160px 165px,rgba(249,250,248,1.0) 165px 170px,rgba(214,217,222,1.0) 170px 175px,rgba(206,210,213,1.0) 175px 180px,rgba(222,213,219,1.0) 180px 185px,rgba(205,208,208,1.0) 185px 190px,rgba(217,221,221,1.0) 190px 195px,rgba(204,206,215,1.0) 195px 200px,rgba(251,246,249,1.0) 200px 205px,rgba(213,211,214,1.0) 205px 210px,rgba(214,211,214,1.0) 210px 215px,rgba(214,211,211,1.0) 215px 220px,rgba(220,223,229,1.0) 220px 225px,rgba(250,247,252,1.0) 225px 230px,rgba(214,216,210,1.0) 230px 235px,rgba(220,219,223,1.0) 235px 240px,rgba(221,224,224,1.0) 240px 245px,rgba(213,207,214,1.0) 245px 250px,rgba(220,223,226,1.0) 250px 255px,rgba(226,222,220,1.0) 255px 260px,rgba(212,208,205,1.0) 260px 265px,rgba(225,221,225,1.0) 265px 270px,rgba(205,206,207,1.0) 270px 275px)"></div>
<div class="a" style="left:1076px;top:797.67px;width:276px;height:3.67px;background:linear-gradient(90deg,rgba(205,209,209,1.0) 0px 5px,rgba(166,163,165,1.0) 5px 10px,rgba(206,195,197,1.0) 10px 15px,rgba(252,251,246,1.0) 15px 20px,rgba(204,201,211,1.0) 20px 25px,rgba(216,225,225,1.0) 25px 30px,rgba(207,212,216,1.0) 30px 35px,rgba(166,170,170,1.0) 35px 40px,rgba(247,250,250,1.0) 40px 45px,rgba(214,220,218,1.0) 45px 50px,rgba(194,196,189,1.0) 50px 55px,rgba(198,194,188,1.0) 55px 60px,rgba(210,208,214,1.0) 60px 65px,rgba(171,169,171,1.0) 65px 70px,rgba(204,208,204,1.0) 70px 75px,rgba(251,248,248,1.0) 75px 80px,rgba(178,176,171,1.0) 80px 85px,rgba(222,219,222,1.0) 85px 90px,rgba(227,215,219,1.0) 90px 95px,rgba(199,196,192,1.0) 95px 100px,rgba(188,197,194,1.0) 100px 105px,rgba(210,203,211,1.0) 105px 110px,rgba(247,248,248,1.0) 110px 115px,rgba(212,218,216,1.0) 115px 120px,rgba(211,206,217,1.0) 120px 125px,rgba(187,188,189,1.0) 125px 130px,rgba(210,205,204,1.0) 130px 135px,rgba(166,172,172,1.0) 135px 140px,rgba(219,223,217,1.0) 140px 145px,rgba(252,248,246,1.0) 145px 150px,rgba(172,180,178,1.0) 150px 155px,rgba(219,217,221,1.0) 155px 160px,rgba(213,202,207,1.0) 160px 165px,rgba(249,248,251,1.0) 165px 170px,rgba(207,211,205,1.0) 170px 175px,rgba(168,171,178,1.0) 175px 180px,rgba(150,158,163,1.0) 180px 185px,rgba(193,197,195,1.0) 185px 190px,rgba(185,183,192,1.0) 190px 195px,rgba(173,170,173,1.0) 195px 200px,rgba(252,249,252,1.0) 200px 205px,rgba(167,165,175,1.0) 205px 210px,rgba(182,181,184,1.0) 210px 215px,rgba(176,170,172,1.0) 215px 220px,rgba(198,198,201,1.0) 220px 225px,rgba(252,248,248,1.0) 225px 230px,rgba(183,174,182,1.0) 230px 235px,rgba(221,225,221,1.0) 235px 240px,rgba(169,171,178,1.0) 240px 245px,rgba(163,158,167,1.0) 245px 250px,rgba(158,159,154,1.0) 250px 255px,rgba(210,207,215,1.0) 255px 260px,rgba(196,194,198,1.0) 260px 265px,rgba(167,168,177,1.0) 265px 270px,rgba(187,180,185,1.0) 270px 275px)"></div>
<div class="a" style="left:1076px;top:801.33px;width:276px;height:3.67px;background:linear-gradient(90deg,rgba(227,226,224,1.0) 0px 5px,rgba(203,211,214,1.0) 5px 10px,rgba(217,212,221,1.0) 10px 15px,rgba(246,252,250,1.0) 15px 20px,rgba(220,225,221,1.0) 20px 25px,rgba(208,205,211,1.0) 25px 30px,rgba(218,213,226,1.0) 30px 35px,rgba(217,217,223,1.0) 35px 40px,rgba(247,246,249,1.0) 40px 45px,rgba(217,214,220,1.0) 45px 50px,rgba(222,224,225,1.0) 50px 55px,rgba(216,224,225,1.0) 55px 60px,rgba(218,214,217,1.0) 60px 65px,rgba(210,213,216,1.0) 65px 70px,rgba(207,212,218,1.0) 70px 75px,rgba(252,247,248,1.0) 75px 80px,rgba(228,217,222,1.0) 80px 85px,rgba(207,219,217,1.0) 85px 90px,rgba(207,206,204,1.0) 90px 95px,rgba(212,202,212,1.0) 95px 100px,rgba(217,217,221,1.0) 100px 105px,rgba(212,219,211,1.0) 105px 110px,rgba(252,248,250,1.0) 110px 115px,rgba(214,208,207,1.0) 115px 120px,rgba(223,216,222,1.0) 120px 125px,rgba(222,223,223,1.0) 125px 130px,rgba(215,217,223,1.0) 130px 135px,rgba(207,212,210,1.0) 135px 140px,rgba(213,204,204,1.0) 140px 145px,rgba(251,250,246,1.0) 145px 150px,rgba(223,214,225,1.0) 150px 155px,rgba(218,210,211,1.0) 155px 160px,rgba(213,214,204,1.0) 160px 165px,rgba(251,251,250,1.0) 165px 170px,rgba(218,222,222,1.0) 170px 175px,rgba(210,220,223,1.0) 175px 180px,rgba(221,225,224,1.0) 180px 185px,rgba(217,218,215,1.0) 185px 190px,rgba(210,207,208,1.0) 190px 195px,rgba(218,212,215,1.0) 195px 200px,rgba(246,252,251,1.0) 200px 205px,rgba(224,213,219,1.0) 205px 210px,rgba(214,217,226,1.0) 210px 215px,rgba(220,214,220,1.0) 215px 220px,rgba(210,205,206,1.0) 220px 225px,rgba(250,250,248,1.0) 225px 230px,rgba(222,219,223,1.0) 230px 235px,rgba(212,202,207,1.0) 235px 240px,rgba(209,207,215,1.0) 240px 245px,rgba(210,220,216,1.0) 245px 250px,rgba(212,210,213,1.0) 250px 255px,rgba(216,214,215,1.0) 255px 260px,rgba(207,207,221,1.0) 260px 265px,rgba(220,225,215,1.0) 265px 270px,rgba(214,213,208,1.0) 270px 275px)"></div>
<div class="t" id="w45" style="left:1352px;top:794.69px;font-size:11px;color:#333;font-weight:normal;transform:scaleX(1.1532);transform-origin:left;">IP</div>
<div class="t" style="left:1068px;top:813.69px;font-size:11px;color:#333;font-weight:normal;">B</div>
<div class="a" style="left:1076px;top:813.0px;width:280px;height:3.67px;background:linear-gradient(90deg,rgba(210,211,208,1.0) 0px 5px,rgba(221,214,217,1.0) 5px 10px,rgba(218,220,222,1.0) 10px 15px,rgba(223,212,222,1.0) 15px 20px,rgba(222,217,223,1.0) 20px 25px,rgba(251,251,252,1.0) 25px 30px,rgba(214,213,212,1.0) 30px 35px,rgba(222,215,216,1.0) 35px 40px,rgba(224,221,218,1.0) 40px 45px,rgba(215,206,205,1.0) 45px 50px,rgba(217,220,221,1.0) 50px 55px,rgba(214,215,217,1.0) 55px 60px,rgba(219,217,221,1.0) 60px 65px,rgba(218,225,220,1.0) 65px 70px,rgba(249,247,247,1.0) 70px 75px,rgba(224,226,227,1.0) 75px 80px,rgba(213,209,213,1.0) 80px 85px,rgba(213,220,227,1.0) 85px 90px,rgba(224,223,215,1.0) 90px 95px,rgba(209,219,217,1.0) 95px 100px,rgba(217,216,215,1.0) 100px 105px,rgba(220,224,220,1.0) 105px 110px,rgba(219,218,228,1.0) 110px 115px,rgba(221,221,224,1.0) 115px 120px,rgba(218,228,219,1.0) 120px 125px,rgba(251,250,250,1.0) 125px 130px,rgba(209,208,214,1.0) 130px 135px,rgba(226,229,223,1.0) 135px 140px,rgba(219,225,231,1.0) 140px 145px,rgba(215,213,225,1.0) 145px 150px,rgba(215,211,208,1.0) 150px 155px,rgba(221,221,220,1.0) 155px 160px,rgba(213,223,217,1.0) 160px 165px,rgba(213,217,218,1.0) 165px 170px,rgba(206,214,208,1.0) 170px 175px,rgba(216,218,220,1.0) 175px 180px,rgba(248,252,247,1.0) 180px 185px,rgba(219,219,220,1.0) 185px 190px,rgba(221,222,225,1.0) 190px 195px,rgba(213,211,214,1.0) 195px 200px,rgba(218,218,221,1.0) 200px 205px,rgba(217,216,219,1.0) 205px 210px,rgba(213,213,226,1.0) 210px 215px,rgba(251,246,251,1.0) 215px 220px,rgba(216,222,212,1.0) 220px 225px,rgba(216,211,216,1.0) 225px 230px,rgba(213,204,208,1.0) 230px 235px,rgba(252,248,252,1.0) 235px 240px,rgba(205,210,213,1.0) 240px 245px,rgba(214,219,216,1.0) 245px 250px,rgba(225,222,227,1.0) 250px 255px,rgba(208,216,209,1.0) 255px 260px,rgba(224,226,220,1.0) 260px 265px,rgba(208,213,212,1.0) 265px 270px,rgba(204,216,218,1.0) 270px 275px,rgba(208,215,206,1.0) 275px 280px)"></div>
<div class="a" style="left:1076px;top:816.67px;width:280px;height:3.67px;background:linear-gradient(90deg,rgba(219,218,219,1.0) 0px 5px,rgba(195,199,196,1.0) 5px 10px,rgba(196,203,198,1.0) 10px 15px,rgba(209,210,217,1.0) 15px 20px,rgba(165,165,165,1.0) 20px 25px,rgba(247,249,250,1.0) 25px 30px,rgba(170,163,165,1.0) 30px 35px,rgba(197,185,198,1.0) 35px 40px,rgba(188,193,185,1.0) 40px 45px,rgba(180,178,182,1.0) 45px 50px,rgba(181,181,176,1.0) 50px 55px,rgba(202,204,205,1.0) 55px 60px,rgba(153,163,157,1.0) 60px 65px,rgba(191,192,194,1.0) 65px 70px,rgba(251,250,247,1.0) 70px 75px,rgba(166,158,170,1.0) 75px 80px,rgba(203,200,202,1.0) 80px 85px,rgba(165,157,160,1.0) 85px 90px,rgba(196,197,205,1.0) 90px 95px,rgba(174,170,175,1.0) 95px 100px,rgba(225,218,228,1.0) 100px 105px,rgba(208,207,212,1.0) 105px 110px,rgba(193,193,200,1.0) 110px 115px,rgba(178,182,174,1.0) 115px 120px,rgba(212,212,212,1.0) 120px 125px,rgba(246,249,252,1.0) 125px 130px,rgba(178,180,191,1.0) 130px 135px,rgba(203,198,199,1.0) 135px 140px,rgba(153,151,153,1.0) 140px 145px,rgba(181,179,181,1.0) 145px 150px,rgba(198,192,192,1.0) 150px 155px,rgba(156,161,157,1.0) 155px 160px,rgba(162,160,168,1.0) 160px 165px,rgba(169,169,165,1.0) 165px 170px,rgba(157,160,158,1.0) 170px 175px,rgba(185,188,190,1.0) 175px 180px,rgba(250,251,247,1.0) 180px 185px,rgba(171,178,179,1.0) 185px 190px,rgba(186,186,185,1.0) 190px 195px,rgba(225,216,220,1.0) 195px 200px,rgba(174,182,178,1.0) 200px 205px,rgba(155,162,157,1.0) 205px 210px,rgba(189,183,184,1.0) 210px 215px,rgba(247,251,249,1.0) 215px 220px,rgba(182,182,185,1.0) 220px 225px,rgba(202,200,203,1.0) 225px 230px,rgba(159,159,161,1.0) 230px 235px,rgba(246,246,249,1.0) 235px 240px,rgba(212,217,214,1.0) 240px 245px,rgba(218,213,216,1.0) 245px 250px,rgba(210,203,206,1.0) 250px 255px,rgba(174,177,180,1.0) 255px 260px,rgba(212,208,212,1.0) 260px 265px,rgba(157,164,161,1.0) 265px 270px,rgba(221,213,221,1.0) 270px 275px,rgba(198,197,205,1.0) 275px 280px)"></div>
<div class="a" style="left:1076px;top:820.33px;width:280px;height:3.67px;background:linear-gradient(90deg,rgba(217,220,227,1.0) 0px 5px,rgba(216,213,213,1.0) 5px 10px,rgba(213,219,218,1.0) 10px 15px,rgba(220,225,226,1.0) 15px 20px,rgba(211,222,219,1.0) 20px 25px,rgba(251,248,246,1.0) 25px 30px,rgba(209,215,219,1.0) 30px 35px,rgba(207,207,219,1.0) 35px 40px,rgba(220,217,217,1.0) 40px 45px,rgba(216,226,228,1.0) 45px 50px,rgba(216,226,225,1.0) 50px 55px,rgba(224,226,221,1.0) 55px 60px,rgba(225,224,219,1.0) 60px 65px,rgba(208,212,220,1.0) 65px 70px,rgba(248,251,246,1.0) 70px 75px,rgba(217,217,211,1.0) 75px 80px,rgba(204,213,213,1.0) 80px 85px,rgba(220,216,215,1.0) 85px 90px,rgba(208,203,206,1.0) 90px 95px,rgba(213,207,213,1.0) 95px 100px,rgba(207,212,208,1.0) 100px 105px,rgba(208,213,217,1.0) 105px 110px,rgba(205,211,211,1.0) 110px 115px,rgba(227,223,228,1.0) 115px 120px,rgba(214,208,210,1.0) 120px 125px,rgba(252,249,247,1.0) 125px 130px,rgba(215,210,209,1.0) 130px 135px,rgba(216,209,206,1.0) 135px 140px,rgba(211,214,217,1.0) 140px 145px,rgba(226,222,231,1.0) 145px 150px,rgba(211,208,212,1.0) 150px 155px,rgba(211,209,211,1.0) 155px 160px,rgba(229,224,222,1.0) 160px 165px,rgba(205,210,205,1.0) 165px 170px,rgba(207,203,205,1.0) 170px 175px,rgba(218,225,223,1.0) 175px 180px,rgba(252,246,247,1.0) 180px 185px,rgba(210,206,207,1.0) 185px 190px,rgba(224,218,218,1.0) 190px 195px,rgba(206,215,210,1.0) 195px 200px,rgba(210,209,217,1.0) 200px 205px,rgba(212,216,215,1.0) 205px 210px,rgba(213,203,205,1.0) 210px 215px,rgba(249,246,250,1.0) 215px 220px,rgba(211,219,219,1.0) 220px 225px,rgba(225,217,225,1.0) 225px 230px,rgba(210,213,213,1.0) 230px 235px,rgba(250,251,252,1.0) 235px 240px,rgba(215,215,212,1.0) 240px 245px,rgba(212,220,217,1.0) 245px 250px,rgba(209,218,213,1.0) 250px 255px,rgba(209,208,213,1.0) 255px 260px,rgba(212,203,215,1.0) 260px 265px,rgba(224,225,224,1.0) 265px 270px,rgba(215,210,219,1.0) 270px 275px,rgba(225,225,225,1.0) 275px 280px)"></div>
<div class="t" style="left:1068px;top:832.69px;font-size:11px;color:#333;font-weight:normal;">D</div>
<div class="a" style="left:1076px;top:832.0px;width:280px;height:3.67px;background:linear-gradient(90deg,rgba(213,211,213,1.0) 0px 5px,rgba(221,213,217,1.0) 5px 10px,rgba(212,216,215,1.0) 10px 15px,rgba(208,209,218,1.0) 15px 20px,rgba(209,206,207,1.0) 20px 25px,rgba(218,222,227,1.0) 25px 30px,rgba(220,211,219,1.0) 30px 35px,rgba(217,221,222,1.0) 35px 40px,rgba(248,248,251,1.0) 40px 45px,rgba(216,213,225,1.0) 45px 50px,rgba(225,214,226,1.0) 50px 55px,rgba(214,213,211,1.0) 55px 60px,rgba(210,212,207,1.0) 60px 65px,rgba(214,212,217,1.0) 65px 70px,rgba(247,248,252,1.0) 70px 75px,rgba(212,206,206,1.0) 75px 80px,rgba(223,221,226,1.0) 80px 85px,rgba(219,216,227,1.0) 85px 90px,rgba(223,228,227,1.0) 90px 95px,rgba(201,202,215,1.0) 95px 100px,rgba(220,219,231,1.0) 100px 105px,rgba(203,205,208,1.0) 105px 110px,rgba(211,218,221,1.0) 110px 115px,rgba(203,203,206,1.0) 115px 120px,rgba(214,216,217,1.0) 120px 125px,rgba(249,248,246,1.0) 125px 130px,rgba(221,221,222,1.0) 130px 135px,rgba(221,217,216,1.0) 135px 140px,rgba(204,205,210,1.0) 140px 145px,rgba(212,209,211,1.0) 145px 150px,rgba(226,219,219,1.0) 150px 155px,rgba(209,212,213,1.0) 155px 160px,rgba(212,218,219,1.0) 160px 165px,rgba(227,217,228,1.0) 165px 170px,rgba(249,249,248,1.0) 170px 175px,rgba(220,221,231,1.0) 175px 180px,rgba(226,221,217,1.0) 180px 185px,rgba(223,216,219,1.0) 185px 190px,rgba(224,219,226,1.0) 190px 195px,rgba(213,205,216,1.0) 195px 200px,rgba(222,219,217,1.0) 200px 205px,rgba(246,247,250,1.0) 205px 210px,rgba(206,215,214,1.0) 210px 215px,rgba(215,207,213,1.0) 215px 220px,rgba(218,218,217,1.0) 220px 225px,rgba(215,218,228,1.0) 225px 230px,rgba(220,225,223,1.0) 230px 235px,rgba(215,216,218,1.0) 235px 240px,rgba(221,215,216,1.0) 240px 245px,rgba(209,215,211,1.0) 245px 250px,rgba(212,210,215,1.0) 250px 255px,rgba(249,252,248,1.0) 255px 260px,rgba(209,208,213,1.0) 260px 265px,rgba(203,215,214,1.0) 265px 270px,rgba(204,207,205,1.0) 270px 275px,rgba(212,207,208,1.0) 275px 280px)"></div>
<div class="a" style="left:1076px;top:835.67px;width:280px;height:3.67px;background:linear-gradient(90deg,rgba(181,174,180,1.0) 0px 5px,rgba(155,157,155,1.0) 5px 10px,rgba(224,221,220,1.0) 10px 15px,rgba(217,213,223,1.0) 15px 20px,rgba(159,168,161,1.0) 20px 25px,rgba(204,205,201,1.0) 25px 30px,rgba(193,191,191,1.0) 30px 35px,rgba(184,182,186,1.0) 35px 40px,rgba(251,249,252,1.0) 40px 45px,rgba(204,203,210,1.0) 45px 50px,rgba(198,189,192,1.0) 50px 55px,rgba(208,217,213,1.0) 55px 60px,rgba(166,174,170,1.0) 60px 65px,rgba(164,167,168,1.0) 65px 70px,rgba(246,248,251,1.0) 70px 75px,rgba(169,167,171,1.0) 75px 80px,rgba(198,200,195,1.0) 80px 85px,rgba(173,178,170,1.0) 85px 90px,rgba(155,159,169,1.0) 90px 95px,rgba(174,167,179,1.0) 95px 100px,rgba(163,160,168,1.0) 100px 105px,rgba(203,204,205,1.0) 105px 110px,rgba(210,210,206,1.0) 110px 115px,rgba(197,193,197,1.0) 115px 120px,rgba(215,208,210,1.0) 120px 125px,rgba(248,251,251,1.0) 125px 130px,rgba(205,201,202,1.0) 130px 135px,rgba(197,192,193,1.0) 135px 140px,rgba(185,186,178,1.0) 140px 145px,rgba(180,174,183,1.0) 145px 150px,rgba(204,195,194,1.0) 150px 155px,rgba(189,188,194,1.0) 155px 160px,rgba(177,173,175,1.0) 160px 165px,rgba(182,182,178,1.0) 165px 170px,rgba(251,247,251,1.0) 170px 175px,rgba(202,202,207,1.0) 175px 180px,rgba(193,205,207,1.0) 180px 185px,rgba(190,181,183,1.0) 185px 190px,rgba(193,195,196,1.0) 190px 195px,rgba(199,200,206,1.0) 195px 200px,rgba(200,200,200,1.0) 200px 205px,rgba(246,247,246,1.0) 205px 210px,rgba(213,211,215,1.0) 210px 215px,rgba(190,192,182,1.0) 215px 220px,rgba(182,172,176,1.0) 220px 225px,rgba(189,191,188,1.0) 225px 230px,rgba(203,201,201,1.0) 230px 235px,rgba(187,190,186,1.0) 235px 240px,rgba(161,158,163,1.0) 240px 245px,rgba(177,176,176,1.0) 245px 250px,rgba(167,163,164,1.0) 250px 255px,rgba(248,249,252,1.0) 255px 260px,rgba(220,219,213,1.0) 260px 265px,rgba(197,195,195,1.0) 265px 270px,rgba(162,166,163,1.0) 270px 275px,rgba(155,157,155,1.0) 275px 280px)"></div>
<div class="a" style="left:1076px;top:839.33px;width:280px;height:3.67px;background:linear-gradient(90deg,rgba(221,225,216,1.0) 0px 5px,rgba(213,216,214,1.0) 5px 10px,rgba(215,210,211,1.0) 10px 15px,rgba(213,213,214,1.0) 15px 20px,rgba(218,218,226,1.0) 20px 25px,rgba(214,208,214,1.0) 25px 30px,rgba(221,221,222,1.0) 30px 35px,rgba(221,221,222,1.0) 35px 40px,rgba(246,251,247,1.0) 40px 45px,rgba(208,210,215,1.0) 45px 50px,rgba(216,217,209,1.0) 50px 55px,rgba(223,225,227,1.0) 55px 60px,rgba(211,222,215,1.0) 60px 65px,rgba(211,212,220,1.0) 65px 70px,rgba(248,252,250,1.0) 70px 75px,rgba(207,209,220,1.0) 75px 80px,rgba(218,220,228,1.0) 80px 85px,rgba(213,217,223,1.0) 85px 90px,rgba(220,217,221,1.0) 90px 95px,rgba(207,210,215,1.0) 95px 100px,rgba(214,215,221,1.0) 100px 105px,rgba(215,225,219,1.0) 105px 110px,rgba(215,219,211,1.0) 110px 115px,rgba(207,217,217,1.0) 115px 120px,rgba(220,216,213,1.0) 120px 125px,rgba(246,247,250,1.0) 125px 130px,rgba(225,228,230,1.0) 130px 135px,rgba(213,212,209,1.0) 135px 140px,rgba(207,207,217,1.0) 140px 145px,rgba(223,211,219,1.0) 145px 150px,rgba(219,221,216,1.0) 150px 155px,rgba(204,207,206,1.0) 155px 160px,rgba(226,223,218,1.0) 160px 165px,rgba(225,213,227,1.0) 165px 170px,rgba(248,251,247,1.0) 170px 175px,rgba(211,207,208,1.0) 175px 180px,rgba(218,219,227,1.0) 180px 185px,rgba(210,216,220,1.0) 185px 190px,rgba(222,218,224,1.0) 190px 195px,rgba(209,211,215,1.0) 195px 200px,rgba(222,215,224,1.0) 200px 205px,rgba(252,246,252,1.0) 205px 210px,rgba(226,222,226,1.0) 210px 215px,rgba(212,215,219,1.0) 215px 220px,rgba(218,211,218,1.0) 220px 225px,rgba(211,217,218,1.0) 225px 230px,rgba(206,206,207,1.0) 230px 235px,rgba(214,218,217,1.0) 235px 240px,rgba(206,204,214,1.0) 240px 245px,rgba(212,206,209,1.0) 245px 250px,rgba(215,211,209,1.0) 250px 255px,rgba(250,248,247,1.0) 255px 260px,rgba(217,217,224,1.0) 260px 265px,rgba(221,218,223,1.0) 265px 270px,rgba(219,223,227,1.0) 270px 275px,rgba(218,224,220,1.0) 275px 280px)"></div>
<div class="t" id="w46" style="left:1356px;top:832.69px;font-size:11px;color:#333;font-weight:normal;transform:scaleX(1.0903);transform-origin:left;">M</div>
<div class="t" style="left:1068px;top:851.69px;font-size:11px;color:#333;font-weight:normal;">U</div>
<div class="a" style="left:1076px;top:851.0px;width:280px;height:3.67px;background:linear-gradient(90deg,rgba(215,215,223,1.0) 0px 5px,rgba(218,210,217,1.0) 5px 10px,rgba(218,218,232,1.0) 10px 15px,rgba(219,222,226,1.0) 15px 20px,rgba(251,251,249,1.0) 20px 25px,rgba(220,215,215,1.0) 25px 30px,rgba(228,228,231,1.0) 30px 35px,rgba(228,220,230,1.0) 35px 40px,rgba(216,212,220,1.0) 40px 45px,rgba(248,250,250,1.0) 45px 50px,rgba(209,216,208,1.0) 50px 55px,rgba(226,224,230,1.0) 55px 60px,rgba(211,208,211,1.0) 60px 65px,rgba(226,222,231,1.0) 65px 70px,rgba(221,221,220,1.0) 70px 75px,rgba(214,206,213,1.0) 75px 80px,rgba(226,230,225,1.0) 80px 85px,rgba(215,219,220,1.0) 85px 90px,rgba(249,250,250,1.0) 90px 95px,rgba(202,207,216,1.0) 95px 100px,rgba(209,213,222,1.0) 100px 105px,rgba(217,221,224,1.0) 105px 110px,rgba(208,203,214,1.0) 110px 115px,rgba(207,208,212,1.0) 115px 120px,rgba(205,216,219,1.0) 120px 125px,rgba(212,214,215,1.0) 125px 130px,rgba(204,210,210,1.0) 130px 135px,rgba(222,222,214,1.0) 135px 140px,rgba(247,250,250,1.0) 140px 145px,rgba(225,215,221,1.0) 145px 150px,rgba(206,217,215,1.0) 150px 155px,rgba(214,209,220,1.0) 155px 160px,rgba(216,209,213,1.0) 160px 165px,rgba(246,246,246,1.0) 165px 170px,rgba(209,208,210,1.0) 170px 175px,rgba(215,215,216,1.0) 175px 180px,rgba(209,215,212,1.0) 180px 185px,rgba(214,215,223,1.0) 185px 190px,rgba(216,209,213,1.0) 190px 195px,rgba(217,216,219,1.0) 195px 200px,rgba(213,216,214,1.0) 200px 205px,rgba(214,224,227,1.0) 205px 210px,rgba(209,209,211,1.0) 210px 215px,rgba(252,248,251,1.0) 215px 220px,rgba(222,223,226,1.0) 220px 225px,rgba(228,223,226,1.0) 225px 230px,rgba(225,225,220,1.0) 230px 235px,rgba(215,211,215,1.0) 235px 240px,rgba(247,252,246,1.0) 240px 245px,rgba(218,223,220,1.0) 245px 250px,rgba(210,219,220,1.0) 250px 255px,rgba(226,230,232,1.0) 255px 260px,rgba(216,228,223,1.0) 260px 265px,rgba(221,220,215,1.0) 265px 270px,rgba(218,217,215,1.0) 270px 275px,rgba(211,213,215,1.0) 275px 280px)"></div>
<div class="a" style="left:1076px;top:854.67px;width:280px;height:3.67px;background:linear-gradient(90deg,rgba(174,175,174,1.0) 0px 5px,rgba(186,195,195,1.0) 5px 10px,rgba(158,160,156,1.0) 10px 15px,rgba(199,201,199,1.0) 15px 20px,rgba(248,252,250,1.0) 20px 25px,rgba(194,201,202,1.0) 25px 30px,rgba(215,212,220,1.0) 30px 35px,rgba(156,160,168,1.0) 35px 40px,rgba(168,165,165,1.0) 40px 45px,rgba(250,250,249,1.0) 45px 50px,rgba(150,158,163,1.0) 50px 55px,rgba(167,172,172,1.0) 55px 60px,rgba(172,169,172,1.0) 60px 65px,rgba(182,192,190,1.0) 65px 70px,rgba(197,196,205,1.0) 70px 75px,rgba(190,188,199,1.0) 75px 80px,rgba(186,194,189,1.0) 80px 85px,rgba(183,183,185,1.0) 85px 90px,rgba(249,252,250,1.0) 90px 95px,rgba(191,194,191,1.0) 95px 100px,rgba(210,211,209,1.0) 100px 105px,rgba(164,175,168,1.0) 105px 110px,rgba(186,195,196,1.0) 110px 115px,rgba(170,175,173,1.0) 115px 120px,rgba(184,188,182,1.0) 120px 125px,rgba(212,205,208,1.0) 125px 130px,rgba(171,159,164,1.0) 130px 135px,rgba(217,215,221,1.0) 135px 140px,rgba(246,251,248,1.0) 140px 145px,rgba(201,194,196,1.0) 145px 150px,rgba(174,166,174,1.0) 150px 155px,rgba(187,184,186,1.0) 155px 160px,rgba(184,189,182,1.0) 160px 165px,rgba(248,248,246,1.0) 165px 170px,rgba(179,186,183,1.0) 170px 175px,rgba(167,163,167,1.0) 175px 180px,rgba(208,206,213,1.0) 180px 185px,rgba(221,214,221,1.0) 185px 190px,rgba(167,162,161,1.0) 190px 195px,rgba(215,216,213,1.0) 195px 200px,rgba(184,190,194,1.0) 200px 205px,rgba(172,169,172,1.0) 205px 210px,rgba(172,177,179,1.0) 210px 215px,rgba(249,248,250,1.0) 215px 220px,rgba(197,204,205,1.0) 220px 225px,rgba(193,196,194,1.0) 225px 230px,rgba(202,197,200,1.0) 230px 235px,rgba(221,216,219,1.0) 235px 240px,rgba(249,250,250,1.0) 240px 245px,rgba(176,183,173,1.0) 245px 250px,rgba(192,196,192,1.0) 250px 255px,rgba(192,195,192,1.0) 255px 260px,rgba(202,205,200,1.0) 260px 265px,rgba(228,228,222,1.0) 265px 270px,rgba(198,204,200,1.0) 270px 275px,rgba(191,198,192,1.0) 275px 280px)"></div>
<div class="a" style="left:1076px;top:858.33px;width:280px;height:3.67px;background:linear-gradient(90deg,rgba(220,214,219,1.0) 0px 5px,rgba(219,221,228,1.0) 5px 10px,rgba(225,216,229,1.0) 10px 15px,rgba(213,204,215,1.0) 15px 20px,rgba(248,246,247,1.0) 20px 25px,rgba(222,218,226,1.0) 25px 30px,rgba(217,218,224,1.0) 30px 35px,rgba(226,224,225,1.0) 35px 40px,rgba(219,217,228,1.0) 40px 45px,rgba(247,247,252,1.0) 45px 50px,rgba(205,207,207,1.0) 50px 55px,rgba(210,212,211,1.0) 55px 60px,rgba(214,210,212,1.0) 60px 65px,rgba(218,226,230,1.0) 65px 70px,rgba(211,221,216,1.0) 70px 75px,rgba(218,222,223,1.0) 75px 80px,rgba(217,217,225,1.0) 80px 85px,rgba(227,223,221,1.0) 85px 90px,rgba(248,251,248,1.0) 90px 95px,rgba(220,223,225,1.0) 95px 100px,rgba(210,204,206,1.0) 100px 105px,rgba(210,210,211,1.0) 105px 110px,rgba(213,215,221,1.0) 110px 115px,rgba(220,219,220,1.0) 115px 120px,rgba(221,225,215,1.0) 120px 125px,rgba(218,221,219,1.0) 125px 130px,rgba(215,203,208,1.0) 130px 135px,rgba(209,218,209,1.0) 135px 140px,rgba(252,249,250,1.0) 140px 145px,rgba(214,213,217,1.0) 145px 150px,rgba(219,226,218,1.0) 150px 155px,rgba(220,215,214,1.0) 155px 160px,rgba(210,208,213,1.0) 160px 165px,rgba(246,252,248,1.0) 165px 170px,rgba(218,223,216,1.0) 170px 175px,rgba(222,214,213,1.0) 175px 180px,rgba(228,223,221,1.0) 180px 185px,rgba(211,213,217,1.0) 185px 190px,rgba(205,215,214,1.0) 190px 195px,rgba(212,219,212,1.0) 195px 200px,rgba(216,226,227,1.0) 200px 205px,rgba(218,220,210,1.0) 205px 210px,rgba(209,201,208,1.0) 210px 215px,rgba(246,246,250,1.0) 215px 220px,rgba(214,212,210,1.0) 220px 225px,rgba(214,207,212,1.0) 225px 230px,rgba(212,209,205,1.0) 230px 235px,rgba(210,203,216,1.0) 235px 240px,rgba(247,251,249,1.0) 240px 245px,rgba(215,218,215,1.0) 245px 250px,rgba(227,221,224,1.0) 250px 255px,rgba(207,208,216,1.0) 255px 260px,rgba(207,204,212,1.0) 260px 265px,rgba(221,216,213,1.0) 265px 270px,rgba(210,210,211,1.0) 270px 275px,rgba(221,222,230,1.0) 275px 280px)"></div>
<div class="t" id="w47" style="left:1356px;top:851.69px;font-size:11px;color:#333;font-weight:normal;transform:scaleX(1.1125);transform-origin:left;">0M</div>
<div class="t" style="left:1068px;top:870.19px;font-size:11px;color:#333;font-weight:normal;">G</div>
<div class="a" style="left:1076px;top:869.5px;width:204px;height:3.67px;background:linear-gradient(90deg,rgba(222,219,223,1.0) 0px 5px,rgba(216,213,223,1.0) 5px 10px,rgba(215,215,216,1.0) 10px 15px,rgba(249,249,247,1.0) 15px 20px,rgba(228,219,228,1.0) 20px 25px,rgba(228,227,230,1.0) 25px 30px,rgba(215,226,221,1.0) 30px 35px,rgba(203,206,214,1.0) 35px 40px,rgba(206,203,214,1.0) 40px 45px,rgba(212,217,212,1.0) 45px 50px,rgba(215,215,212,1.0) 50px 55px,rgba(220,219,228,1.0) 55px 60px,rgba(214,221,215,1.0) 60px 65px,rgba(251,252,248,1.0) 65px 70px,rgba(212,223,219,1.0) 70px 75px,rgba(223,216,215,1.0) 75px 80px,rgba(209,214,212,1.0) 80px 85px,rgba(212,208,216,1.0) 85px 90px,rgba(221,223,222,1.0) 90px 95px,rgba(220,221,227,1.0) 95px 100px,rgba(212,216,212,1.0) 100px 105px,rgba(215,215,220,1.0) 105px 110px,rgba(213,208,216,1.0) 110px 115px,rgba(217,223,217,1.0) 115px 120px,rgba(249,249,251,1.0) 120px 125px,rgba(207,215,213,1.0) 125px 130px,rgba(202,213,213,1.0) 130px 135px,rgba(224,217,222,1.0) 135px 140px,rgba(216,224,223,1.0) 140px 145px,rgba(224,226,224,1.0) 145px 150px,rgba(208,213,204,1.0) 150px 155px,rgba(209,207,215,1.0) 155px 160px,rgba(251,247,251,1.0) 160px 165px,rgba(217,223,218,1.0) 165px 170px,rgba(217,213,226,1.0) 170px 175px,rgba(217,216,211,1.0) 175px 180px,rgba(216,210,216,1.0) 180px 185px,rgba(212,207,215,1.0) 185px 190px,rgba(221,225,219,1.0) 190px 195px,rgba(210,211,207,1.0) 195px 200px,rgba(220,219,223,1.0) 200px 204px)"></div>
<div class="a" style="left:1076px;top:873.17px;width:204px;height:3.67px;background:linear-gradient(90deg,rgba(200,200,193,1.0) 0px 5px,rgba(197,199,195,1.0) 5px 10px,rgba(179,173,179,1.0) 10px 15px,rgba(247,248,249,1.0) 15px 20px,rgba(165,156,161,1.0) 20px 25px,rgba(209,206,210,1.0) 25px 30px,rgba(173,170,180,1.0) 30px 35px,rgba(183,174,179,1.0) 35px 40px,rgba(184,194,189,1.0) 40px 45px,rgba(191,193,193,1.0) 45px 50px,rgba(209,206,207,1.0) 50px 55px,rgba(204,197,199,1.0) 55px 60px,rgba(190,191,191,1.0) 60px 65px,rgba(250,248,246,1.0) 65px 70px,rgba(205,201,207,1.0) 70px 75px,rgba(161,155,153,1.0) 75px 80px,rgba(195,192,202,1.0) 80px 85px,rgba(162,164,158,1.0) 85px 90px,rgba(175,184,187,1.0) 90px 95px,rgba(182,179,183,1.0) 95px 100px,rgba(182,186,190,1.0) 100px 105px,rgba(191,190,201,1.0) 105px 110px,rgba(198,200,201,1.0) 110px 115px,rgba(168,167,163,1.0) 115px 120px,rgba(247,247,249,1.0) 120px 125px,rgba(194,193,190,1.0) 125px 130px,rgba(179,183,186,1.0) 130px 135px,rgba(189,185,184,1.0) 135px 140px,rgba(200,194,199,1.0) 140px 145px,rgba(161,165,163,1.0) 145px 150px,rgba(191,194,201,1.0) 150px 155px,rgba(217,210,212,1.0) 155px 160px,rgba(251,249,249,1.0) 160px 165px,rgba(187,187,182,1.0) 165px 170px,rgba(217,215,213,1.0) 170px 175px,rgba(166,174,176,1.0) 175px 180px,rgba(206,209,214,1.0) 180px 185px,rgba(187,176,179,1.0) 185px 190px,rgba(161,162,167,1.0) 190px 195px,rgba(155,155,159,1.0) 195px 200px,rgba(211,218,214,1.0) 200px 204px)"></div>
<div class="a" style="left:1076px;top:876.83px;width:204px;height:3.67px;background:linear-gradient(90deg,rgba(221,227,220,1.0) 0px 5px,rgba(220,220,221,1.0) 5px 10px,rgba(216,215,221,1.0) 10px 15px,rgba(247,247,249,1.0) 15px 20px,rgba(211,215,217,1.0) 20px 25px,rgba(205,213,204,1.0) 25px 30px,rgba(208,212,219,1.0) 30px 35px,rgba(227,222,221,1.0) 35px 40px,rgba(214,205,211,1.0) 40px 45px,rgba(214,208,215,1.0) 45px 50px,rgba(210,204,208,1.0) 50px 55px,rgba(216,214,215,1.0) 55px 60px,rgba(212,210,211,1.0) 60px 65px,rgba(247,252,251,1.0) 65px 70px,rgba(214,217,225,1.0) 70px 75px,rgba(215,221,220,1.0) 75px 80px,rgba(214,210,216,1.0) 80px 85px,rgba(223,224,225,1.0) 85px 90px,rgba(214,208,209,1.0) 90px 95px,rgba(218,209,213,1.0) 95px 100px,rgba(217,226,226,1.0) 100px 105px,rgba(218,216,215,1.0) 105px 110px,rgba(210,210,206,1.0) 110px 115px,rgba(225,223,217,1.0) 115px 120px,rgba(247,248,248,1.0) 120px 125px,rgba(212,205,212,1.0) 125px 130px,rgba(214,211,217,1.0) 130px 135px,rgba(212,205,217,1.0) 135px 140px,rgba(213,213,216,1.0) 140px 145px,rgba(208,218,211,1.0) 145px 150px,rgba(222,222,215,1.0) 150px 155px,rgba(227,218,222,1.0) 155px 160px,rgba(252,252,246,1.0) 160px 165px,rgba(215,207,209,1.0) 165px 170px,rgba(211,205,217,1.0) 170px 175px,rgba(220,215,216,1.0) 175px 180px,rgba(211,216,213,1.0) 180px 185px,rgba(219,222,224,1.0) 185px 190px,rgba(215,214,225,1.0) 190px 195px,rgba(211,213,224,1.0) 195px 200px,rgba(212,206,208,1.0) 200px 204px)"></div>
<div class="t" style="left:1068px;top:888.99px;font-size:11px;color:#333;font-weight:normal;">C</div>
<div class="a" style="left:1076px;top:888.3px;width:280px;height:3.67px;background:linear-gradient(90deg,rgba(208,205,216,1.0) 0px 5px,rgba(225,227,229,1.0) 5px 10px,rgba(215,220,219,1.0) 10px 15px,rgba(219,225,227,1.0) 15px 20px,rgba(215,215,218,1.0) 20px 25px,rgba(212,209,206,1.0) 25px 30px,rgba(221,214,218,1.0) 30px 35px,rgba(219,217,221,1.0) 35px 40px,rgba(249,252,248,1.0) 40px 45px,rgba(221,218,223,1.0) 45px 50px,rgba(214,223,228,1.0) 50px 55px,rgba(212,209,210,1.0) 55px 60px,rgba(212,216,217,1.0) 60px 65px,rgba(249,247,250,1.0) 65px 70px,rgba(215,211,218,1.0) 70px 75px,rgba(218,227,220,1.0) 75px 80px,rgba(208,212,217,1.0) 80px 85px,rgba(216,216,219,1.0) 85px 90px,rgba(218,215,219,1.0) 90px 95px,rgba(210,211,219,1.0) 95px 100px,rgba(246,252,252,1.0) 100px 105px,rgba(206,214,206,1.0) 105px 110px,rgba(226,227,229,1.0) 110px 115px,rgba(221,222,214,1.0) 115px 120px,rgba(212,203,216,1.0) 120px 125px,rgba(218,217,223,1.0) 125px 130px,rgba(214,212,215,1.0) 130px 135px,rgba(211,217,213,1.0) 135px 140px,rgba(206,213,211,1.0) 140px 145px,rgba(212,210,211,1.0) 145px 150px,rgba(218,216,212,1.0) 150px 155px,rgba(247,249,250,1.0) 155px 160px,rgba(220,224,229,1.0) 160px 165px,rgba(222,216,217,1.0) 165px 170px,rgba(213,206,220,1.0) 170px 175px,rgba(220,218,217,1.0) 175px 180px,rgba(213,214,214,1.0) 180px 185px,rgba(213,206,216,1.0) 185px 190px,rgba(210,206,214,1.0) 190px 195px,rgba(252,246,251,1.0) 195px 200px,rgba(219,212,212,1.0) 200px 205px,rgba(210,214,215,1.0) 205px 210px,rgba(212,221,214,1.0) 210px 215px,rgba(247,247,247,1.0) 215px 220px,rgba(217,217,216,1.0) 220px 225px,rgba(209,204,208,1.0) 225px 230px,rgba(222,225,223,1.0) 230px 235px,rgba(248,247,252,1.0) 235px 240px,rgba(210,221,214,1.0) 240px 245px,rgba(219,223,231,1.0) 245px 250px,rgba(219,223,221,1.0) 250px 255px,rgba(220,220,224,1.0) 255px 260px,rgba(221,228,224,1.0) 260px 265px,rgba(219,217,217,1.0) 265px 270px,rgba(208,210,207,1.0) 270px 275px,rgba(227,223,228,1.0) 275px 280px)"></div>
<div class="a" style="left:1076px;top:891.97px;width:280px;height:3.67px;background:linear-gradient(90deg,rgba(213,216,214,1.0) 0px 5px,rgba(213,211,217,1.0) 5px 10px,rgba(204,211,203,1.0) 10px 15px,rgba(183,185,181,1.0) 15px 20px,rgba(215,215,226,1.0) 20px 25px,rgba(202,196,198,1.0) 25px 30px,rgba(192,189,194,1.0) 30px 35px,rgba(172,176,173,1.0) 35px 40px,rgba(252,248,249,1.0) 40px 45px,rgba(177,185,183,1.0) 45px 50px,rgba(159,153,151,1.0) 50px 55px,rgba(204,208,204,1.0) 55px 60px,rgba(224,218,222,1.0) 60px 65px,rgba(246,247,246,1.0) 65px 70px,rgba(163,159,173,1.0) 70px 75px,rgba(190,198,196,1.0) 75px 80px,rgba(170,170,182,1.0) 80px 85px,rgba(161,157,171,1.0) 85px 90px,rgba(207,198,207,1.0) 90px 95px,rgba(209,207,212,1.0) 95px 100px,rgba(249,246,246,1.0) 100px 105px,rgba(222,219,224,1.0) 105px 110px,rgba(211,206,213,1.0) 110px 115px,rgba(184,181,185,1.0) 115px 120px,rgba(220,221,218,1.0) 120px 125px,rgba(207,211,209,1.0) 125px 130px,rgba(185,193,186,1.0) 130px 135px,rgba(210,209,210,1.0) 135px 140px,rgba(211,217,216,1.0) 140px 145px,rgba(189,186,195,1.0) 145px 150px,rgba(217,221,219,1.0) 150px 155px,rgba(248,252,247,1.0) 155px 160px,rgba(172,164,172,1.0) 160px 165px,rgba(159,168,168,1.0) 165px 170px,rgba(196,194,200,1.0) 170px 175px,rgba(158,169,160,1.0) 175px 180px,rgba(204,208,213,1.0) 180px 185px,rgba(163,157,158,1.0) 185px 190px,rgba(177,172,168,1.0) 190px 195px,rgba(246,246,247,1.0) 195px 200px,rgba(216,223,216,1.0) 200px 205px,rgba(168,163,171,1.0) 205px 210px,rgba(216,217,221,1.0) 210px 215px,rgba(252,249,249,1.0) 215px 220px,rgba(190,184,188,1.0) 220px 225px,rgba(164,166,158,1.0) 225px 230px,rgba(228,224,224,1.0) 230px 235px,rgba(250,246,252,1.0) 235px 240px,rgba(164,169,166,1.0) 240px 245px,rgba(185,187,182,1.0) 245px 250px,rgba(216,214,223,1.0) 250px 255px,rgba(204,208,213,1.0) 255px 260px,rgba(194,198,196,1.0) 260px 265px,rgba(215,215,228,1.0) 265px 270px,rgba(222,220,220,1.0) 270px 275px,rgba(197,201,206,1.0) 275px 280px)"></div>
<div class="a" style="left:1076px;top:895.63px;width:280px;height:3.67px;background:linear-gradient(90deg,rgba(219,226,221,1.0) 0px 5px,rgba(210,213,217,1.0) 5px 10px,rgba(210,210,206,1.0) 10px 15px,rgba(218,215,222,1.0) 15px 20px,rgba(207,213,217,1.0) 20px 25px,rgba(222,222,220,1.0) 25px 30px,rgba(219,222,231,1.0) 30px 35px,rgba(212,211,220,1.0) 35px 40px,rgba(250,247,249,1.0) 40px 45px,rgba(215,224,225,1.0) 45px 50px,rgba(216,222,226,1.0) 50px 55px,rgba(214,219,224,1.0) 55px 60px,rgba(227,223,219,1.0) 60px 65px,rgba(247,249,249,1.0) 65px 70px,rgba(213,215,222,1.0) 70px 75px,rgba(207,211,212,1.0) 75px 80px,rgba(217,215,214,1.0) 80px 85px,rgba(210,216,222,1.0) 85px 90px,rgba(213,212,207,1.0) 90px 95px,rgba(216,223,226,1.0) 95px 100px,rgba(246,251,250,1.0) 100px 105px,rgba(212,219,213,1.0) 105px 110px,rgba(219,217,218,1.0) 110px 115px,rgba(219,209,217,1.0) 115px 120px,rgba(209,208,211,1.0) 120px 125px,rgba(220,224,224,1.0) 125px 130px,rgba(220,214,216,1.0) 130px 135px,rgba(221,230,225,1.0) 135px 140px,rgba(205,202,207,1.0) 140px 145px,rgba(211,205,213,1.0) 145px 150px,rgba(210,211,206,1.0) 150px 155px,rgba(249,252,251,1.0) 155px 160px,rgba(219,207,210,1.0) 160px 165px,rgba(210,208,209,1.0) 165px 170px,rgba(226,218,226,1.0) 170px 175px,rgba(219,220,220,1.0) 175px 180px,rgba(216,220,219,1.0) 180px 185px,rgba(205,210,216,1.0) 185px 190px,rgba(217,228,227,1.0) 190px 195px,rgba(246,251,251,1.0) 195px 200px,rgba(222,216,222,1.0) 200px 205px,rgba(217,216,215,1.0) 205px 210px,rgba(211,207,210,1.0) 210px 215px,rgba(246,251,250,1.0) 215px 220px,rgba(213,210,209,1.0) 220px 225px,rgba(211,212,209,1.0) 225px 230px,rgba(223,220,225,1.0) 230px 235px,rgba(246,246,248,1.0) 235px 240px,rgba(213,213,214,1.0) 240px 245px,rgba(212,206,210,1.0) 245px 250px,rgba(224,224,226,1.0) 250px 255px,rgba(225,222,220,1.0) 255px 260px,rgba(222,220,215,1.0) 260px 265px,rgba(214,222,223,1.0) 265px 270px,rgba(213,212,215,1.0) 270px 275px,rgba(225,220,220,1.0) 275px 280px)"></div>
<div class="t" id="w48" style="left:1356px;top:888.99px;font-size:11px;color:#333;font-weight:normal;transform:scaleX(1.0170);transform-origin:left;">90M3</div>
<div class="t" style="left:1068px;top:907.49px;font-size:11px;color:#333;font-weight:normal;">C</div>
<div class="a" style="left:1076px;top:906.8px;width:278px;height:3.67px;background:linear-gradient(90deg,rgba(215,221,216,1.0) 0px 5px,rgba(224,228,225,1.0) 5px 10px,rgba(216,221,220,1.0) 10px 15px,rgba(222,210,221,1.0) 15px 20px,rgba(212,214,215,1.0) 20px 25px,rgba(251,249,249,1.0) 25px 30px,rgba(208,218,218,1.0) 30px 35px,rgba(223,218,229,1.0) 35px 40px,rgba(214,214,218,1.0) 40px 45px,rgba(218,219,220,1.0) 45px 50px,rgba(217,221,219,1.0) 50px 55px,rgba(208,216,215,1.0) 55px 60px,rgba(203,209,215,1.0) 60px 65px,rgba(208,211,205,1.0) 65px 70px,rgba(223,223,223,1.0) 70px 75px,rgba(219,213,220,1.0) 75px 80px,rgba(251,246,249,1.0) 80px 85px,rgba(223,219,222,1.0) 85px 90px,rgba(218,228,228,1.0) 90px 95px,rgba(225,225,219,1.0) 95px 100px,rgba(225,222,228,1.0) 100px 105px,rgba(211,201,210,1.0) 105px 110px,rgba(208,212,212,1.0) 110px 115px,rgba(208,211,219,1.0) 115px 120px,rgba(220,219,225,1.0) 120px 125px,rgba(212,209,214,1.0) 125px 130px,rgba(223,224,227,1.0) 130px 135px,rgba(251,251,250,1.0) 135px 140px,rgba(218,220,218,1.0) 140px 145px,rgba(212,210,204,1.0) 145px 150px,rgba(212,202,206,1.0) 150px 155px,rgba(248,251,251,1.0) 155px 160px,rgba(227,227,220,1.0) 160px 165px,rgba(227,219,231,1.0) 165px 170px,rgba(205,213,210,1.0) 170px 175px,rgba(215,215,217,1.0) 175px 180px,rgba(226,229,224,1.0) 180px 185px,rgba(250,250,247,1.0) 185px 190px,rgba(215,219,222,1.0) 190px 195px,rgba(213,210,222,1.0) 195px 200px,rgba(214,220,226,1.0) 200px 205px,rgba(248,248,246,1.0) 205px 210px,rgba(221,229,226,1.0) 210px 215px,rgba(216,217,217,1.0) 215px 220px,rgba(216,218,221,1.0) 220px 225px,rgba(219,219,217,1.0) 225px 230px,rgba(215,211,215,1.0) 230px 235px,rgba(250,251,246,1.0) 235px 240px,rgba(223,218,221,1.0) 240px 245px,rgba(216,210,214,1.0) 245px 250px,rgba(221,213,214,1.0) 250px 255px,rgba(218,222,221,1.0) 255px 260px,rgba(219,214,219,1.0) 260px 265px,rgba(228,221,220,1.0) 265px 270px,rgba(212,218,219,1.0) 270px 275px,rgba(218,210,220,1.0) 275px 278px)"></div>
<div class="a" style="left:1076px;top:910.47px;width:278px;height:3.67px;background:linear-gradient(90deg,rgba(210,218,212,1.0) 0px 5px,rgba(220,220,229,1.0) 5px 10px,rgba(198,199,209,1.0) 10px 15px,rgba(161,152,156,1.0) 15px 20px,rgba(200,188,194,1.0) 20px 25px,rgba(248,246,251,1.0) 25px 30px,rgba(197,195,194,1.0) 30px 35px,rgba(220,225,221,1.0) 35px 40px,rgba(165,166,164,1.0) 40px 45px,rgba(172,170,183,1.0) 45px 50px,rgba(150,159,157,1.0) 50px 55px,rgba(161,162,168,1.0) 55px 60px,rgba(161,165,164,1.0) 60px 65px,rgba(163,169,170,1.0) 65px 70px,rgba(177,183,188,1.0) 70px 75px,rgba(215,209,218,1.0) 75px 80px,rgba(249,250,248,1.0) 80px 85px,rgba(171,166,171,1.0) 85px 90px,rgba(206,206,215,1.0) 90px 95px,rgba(167,170,171,1.0) 95px 100px,rgba(209,208,217,1.0) 100px 105px,rgba(214,216,221,1.0) 105px 110px,rgba(161,167,163,1.0) 110px 115px,rgba(211,209,214,1.0) 115px 120px,rgba(188,183,187,1.0) 120px 125px,rgba(224,225,225,1.0) 125px 130px,rgba(177,175,174,1.0) 130px 135px,rgba(246,249,249,1.0) 135px 140px,rgba(198,202,195,1.0) 140px 145px,rgba(165,169,163,1.0) 145px 150px,rgba(194,196,192,1.0) 150px 155px,rgba(248,248,249,1.0) 155px 160px,rgba(212,220,219,1.0) 160px 165px,rgba(219,219,214,1.0) 165px 170px,rgba(175,181,181,1.0) 170px 175px,rgba(157,162,165,1.0) 175px 180px,rgba(156,160,161,1.0) 180px 185px,rgba(248,252,252,1.0) 185px 190px,rgba(182,188,178,1.0) 190px 195px,rgba(214,219,213,1.0) 195px 200px,rgba(161,170,165,1.0) 200px 205px,rgba(248,249,247,1.0) 205px 210px,rgba(207,211,214,1.0) 210px 215px,rgba(217,213,214,1.0) 215px 220px,rgba(199,201,201,1.0) 220px 225px,rgba(196,189,199,1.0) 225px 230px,rgba(218,212,218,1.0) 230px 235px,rgba(248,250,249,1.0) 235px 240px,rgba(173,180,181,1.0) 240px 245px,rgba(221,219,220,1.0) 245px 250px,rgba(187,186,190,1.0) 250px 255px,rgba(206,213,217,1.0) 255px 260px,rgba(217,224,216,1.0) 260px 265px,rgba(169,174,175,1.0) 265px 270px,rgba(162,162,168,1.0) 270px 275px,rgba(194,195,195,1.0) 275px 278px)"></div>
<div class="a" style="left:1076px;top:914.13px;width:278px;height:3.67px;background:linear-gradient(90deg,rgba(218,217,230,1.0) 0px 5px,rgba(216,224,219,1.0) 5px 10px,rgba(219,215,223,1.0) 10px 15px,rgba(207,203,206,1.0) 15px 20px,rgba(223,228,226,1.0) 20px 25px,rgba(247,246,246,1.0) 25px 30px,rgba(220,218,215,1.0) 30px 35px,rgba(219,220,215,1.0) 35px 40px,rgba(214,210,213,1.0) 40px 45px,rgba(214,209,211,1.0) 45px 50px,rgba(223,217,226,1.0) 50px 55px,rgba(219,221,222,1.0) 55px 60px,rgba(220,216,211,1.0) 60px 65px,rgba(210,211,218,1.0) 65px 70px,rgba(209,204,213,1.0) 70px 75px,rgba(220,217,220,1.0) 75px 80px,rgba(247,250,252,1.0) 80px 85px,rgba(203,203,212,1.0) 85px 90px,rgba(223,221,224,1.0) 90px 95px,rgba(211,214,212,1.0) 95px 100px,rgba(208,207,217,1.0) 100px 105px,rgba(213,217,214,1.0) 105px 110px,rgba(217,212,209,1.0) 110px 115px,rgba(227,230,220,1.0) 115px 120px,rgba(229,224,230,1.0) 120px 125px,rgba(210,206,211,1.0) 125px 130px,rgba(227,230,223,1.0) 130px 135px,rgba(249,246,249,1.0) 135px 140px,rgba(210,212,219,1.0) 140px 145px,rgba(229,222,224,1.0) 145px 150px,rgba(220,222,219,1.0) 150px 155px,rgba(252,251,250,1.0) 155px 160px,rgba(209,213,214,1.0) 160px 165px,rgba(218,210,213,1.0) 165px 170px,rgba(213,208,211,1.0) 170px 175px,rgba(207,213,207,1.0) 175px 180px,rgba(211,215,222,1.0) 180px 185px,rgba(248,246,248,1.0) 185px 190px,rgba(210,213,215,1.0) 190px 195px,rgba(222,220,228,1.0) 195px 200px,rgba(216,224,225,1.0) 200px 205px,rgba(251,251,250,1.0) 205px 210px,rgba(209,215,218,1.0) 210px 215px,rgba(221,223,223,1.0) 215px 220px,rgba(216,207,218,1.0) 220px 225px,rgba(215,216,213,1.0) 225px 230px,rgba(207,203,213,1.0) 230px 235px,rgba(248,247,247,1.0) 235px 240px,rgba(207,216,213,1.0) 240px 245px,rgba(206,213,209,1.0) 245px 250px,rgba(214,211,221,1.0) 250px 255px,rgba(219,216,219,1.0) 255px 260px,rgba(225,229,230,1.0) 260px 265px,rgba(221,222,227,1.0) 265px 270px,rgba(210,204,211,1.0) 270px 275px,rgba(220,217,220,1.0) 275px 278px)"></div>
<div class="a" style="left:1446px;top:513px;width:3.5px;height:280px;background:#5f5f5f;border-radius:2px"></div>
<div class="a" style="left:1463.5px;top:321px;width:7.5px;height:628px;background:#f3f3f3"></div>
<svg style="left:328px;top:340px;" width="26" height="536" viewBox="0 0 26 536"><rect x="1" y="1" width="24" height="534" fill="none" stroke="#ff1010" stroke-width="2" stroke-dasharray="5 2.85"/></svg>
<svg style="left:340px;top:355px;" width="240" height="180" viewBox="0 0 240 180"><path d="M237.5 177.5 L20 18" stroke="#000" stroke-width="2"/><path d="M13 12.4 L27.3 16.5 L21.2 24.9 Z" fill="#000"/></svg>
<div class="a" style="left:577px;top:462px;width:687px;height:118.5px;background:#6f97c9;border:1.3px solid #1a1a1a"></div>
<svg style="left:566px;top:438px;" width="36" height="36" viewBox="0 0 36 36"><circle cx="18" cy="18" r="17.2" fill="#6f97c9" stroke="#1a1a1a" stroke-width="1.2"/></svg>
<div class="t" style="left:584px;top:446.02px;font-size:21px;color:#fff;font-weight:normal;transform:translateX(-50%) ;">2</div>
<div class="t" id="w49" style="left:592.5px;top:483.68px;font-size:22px;color:#0d0d0d;font-weight:normal;transform:scaleX(1.2065);transform-origin:left;">Duplicate Indicator: An arrow mark appears on the list</div>
<div class="t" id="w50" style="left:592.5px;top:510.88px;font-size:22px;color:#0d0d0d;font-weight:normal;transform:scaleX(1.1983);transform-origin:left;">if there are duplicate cards.</div>
<div class="t" id="w51" style="left:592.5px;top:538.88px;font-size:22px;color:#0d0d0d;font-weight:normal;transform:scaleX(1.1946);transform-origin:left;">Click the mark to view the hidden duplicate cards.</div>
</body></html>
